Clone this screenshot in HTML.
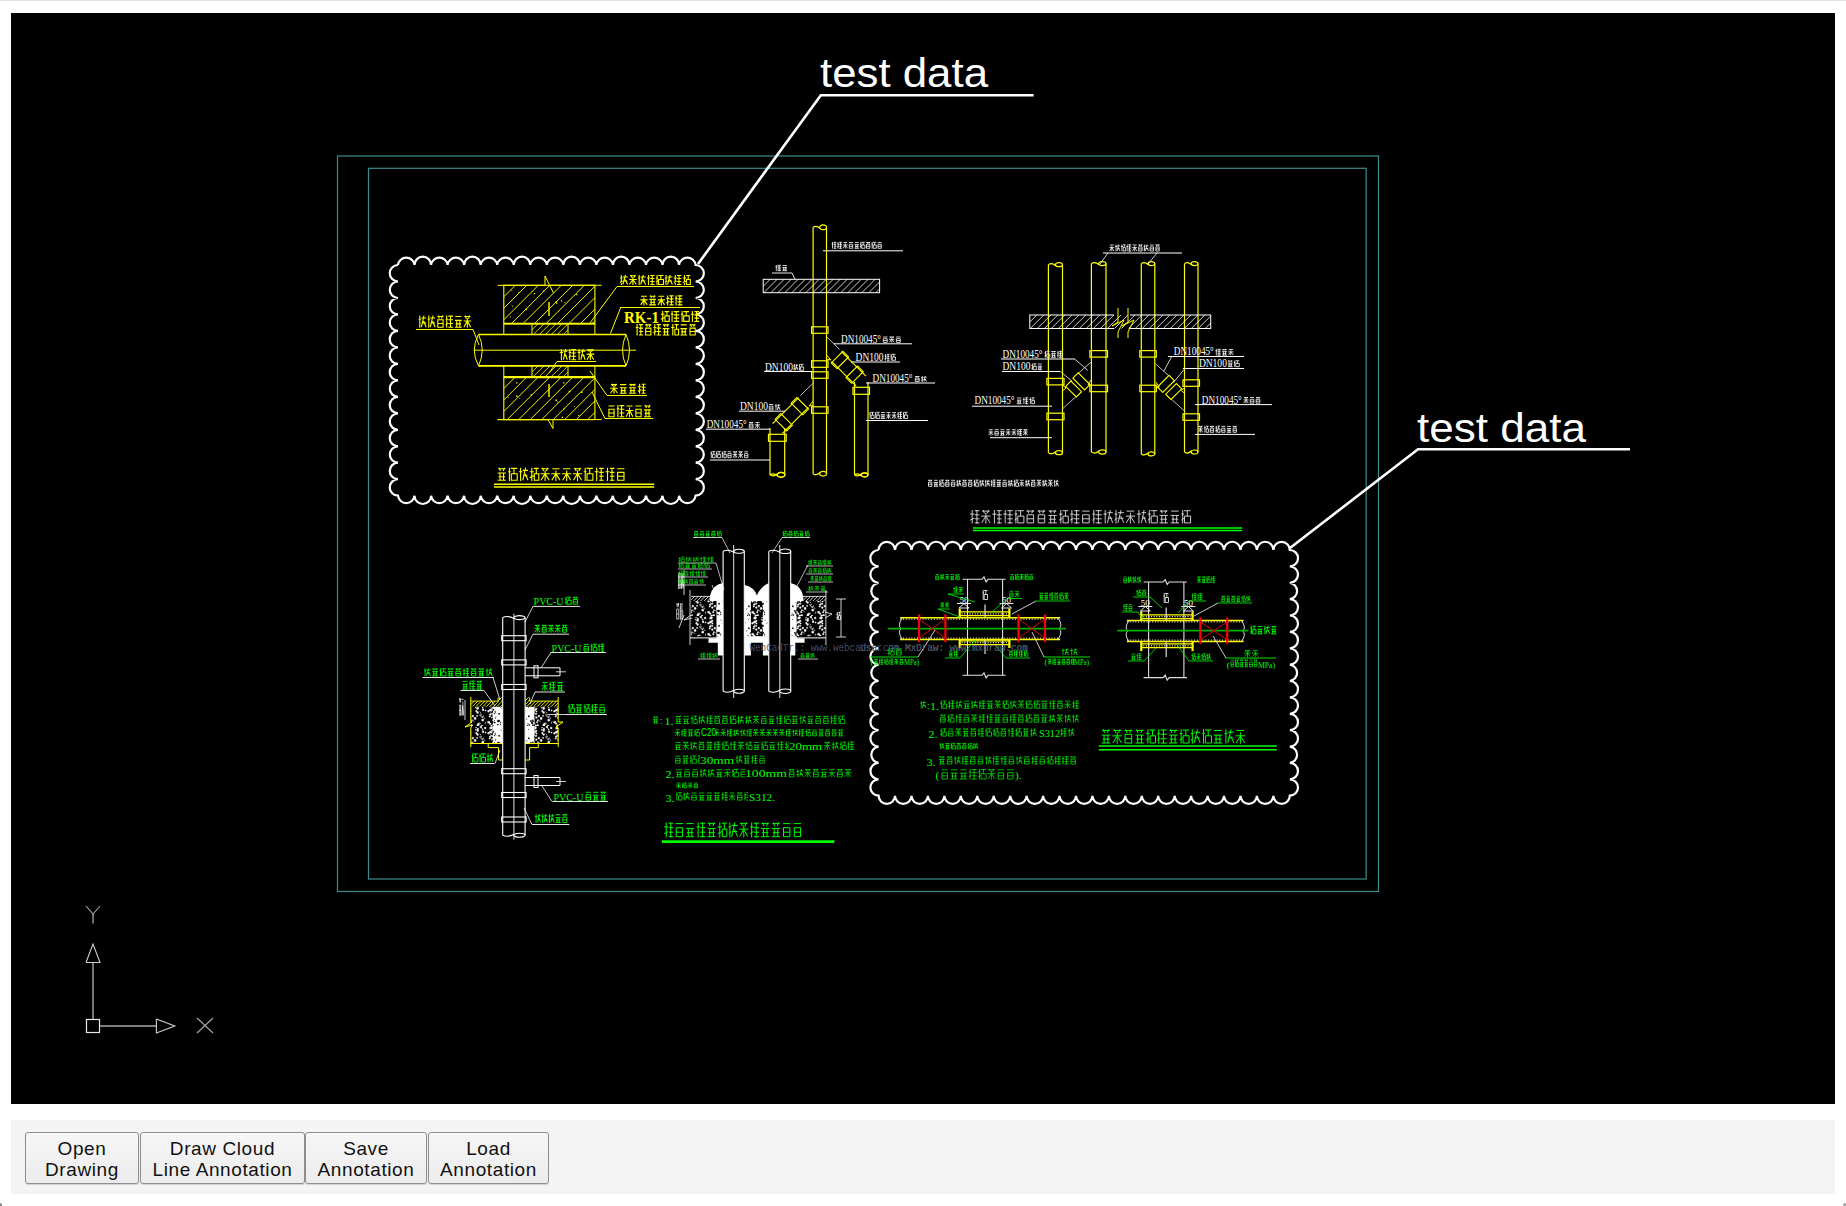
<!DOCTYPE html>
<html><head><meta charset="utf-8"><style>
html,body{margin:0;padding:0;background:#fff;width:1846px;height:1206px;overflow:hidden;position:relative}
#topline{position:absolute;left:0;top:0;width:1846px;height:1px;background:#e1e3e1}
#canvas{position:absolute;left:11px;top:13px;width:1824px;height:1091px;background:#000;overflow:hidden}
#cad{position:absolute;left:0;top:0}
#bar{position:absolute;left:11px;top:1120px;width:1824px;height:74px;background:#f4f4f4}
.btn{position:absolute;top:12px;height:52px;box-sizing:border-box;border:1px solid #8f8f8f;border-radius:3px;
background:linear-gradient(#f6f6f6,#ececec);font-family:"Liberation Sans",sans-serif;font-size:19px;line-height:21px;letter-spacing:0.6px;color:#111;
text-align:center;padding-top:5px;box-shadow:0 1px 1px rgba(0,0,0,0.15)}
</style></head><body>
<div id="topline"></div>
<div style="position:absolute;left:0;top:1203px;width:2px;height:3px;background:#888;border-radius:0 2px 0 0"></div>
<div style="position:absolute;left:1843px;top:1203px;width:3px;height:3px;background:#aaa;border-radius:2px 0 0 0"></div>
<div id="canvas"><svg id="cad" width="1824" height="1091" viewBox="11 13 1824 1091" font-family="Liberation Sans">
<defs><pattern id="pc" width="22" height="22" patternUnits="userSpaceOnUse"><rect width="22" height="22" fill="#000"/><path d="M5.2 12h1v1h-1zM13.8 1.4h0.6v0.6h-0.6zM5.7 5.2h1.8v1.8h-1.8zM18.4 10.5l0.5 2.3M11.5 16.3l1 1.9M6.6 0.7h1.6v1.6h-1.6zM15.8 19.3h1.5v1.5h-1.5zM8.7 17.6h1.1v1.1h-1.1zM19.3 2.1l1.9 1.7M13.8 6.6h1.2v1.2h-1.2zM7.7 12.9h1.3v1.3h-1.3zM15 20.4h1.6v1.6h-1.6zM14.8 3.6h1.6v1.6h-1.6zM19.9 12.5l1.3 1.9M6.3 1.4h1.6v1.6h-1.6zM1.9 17.6l-0.8 2.2M19.2 1l0.9 1.5M19.4 21.6h1.2v1.2h-1.2zM6.8 1.7l-1.2 1.6M13.4 3.4h0.7v0.7h-0.7zM6.9 21.1h1.7v1.7h-1.7zM10.1 11.4h1.4v1.4h-1.4zM12.3 13.6h1.7v1.7h-1.7zM9.5 15.8h0.9v0.9h-0.9zM21.5 11.5l-0.3 1.9M0.4 13.5l0.5 1.7M14.9 7.8h1.4v1.4h-1.4zM0.5 1.3h1.4v1.4h-1.4zM5.5 10h1.3v1.3h-1.3zM8 6.9h1v1h-1zM6.6 8.3l0.3 2.1M6.8 4.9l-1.3 1.7M15.4 2.2h1v1h-1zM18.3 9.6l-0.7 2M19.5 9.9l0.1 1.3M17.7 18.4l1.2 2M17.7 7.6l1.2 1.4M7.6 9.2h1.1v1.1h-1.1zM20.3 3.4h0.6v0.6h-0.6zM19.4 21.7h1.1v1.1h-1.1zM20.4 4.9h1.5v1.5h-1.5zM14.6 11.4h0.9v0.9h-0.9zM5 1.5l1.2 1.1M19.9 15.3h1.7v1.7h-1.7zM19.8 12.7h0.6v0.6h-0.6zM3.8 6.6h1.4v1.4h-1.4zM9.1 20.7h1.3v1.3h-1.3zM5.6 19h1.2v1.2h-1.2zM7.7 4.3h1.2v1.2h-1.2zM3.8 17.4h1.7v1.7h-1.7zM18.1 0.2h1.4v1.4h-1.4zM1.1 6h0.9v0.9h-0.9z" fill="#fff" stroke="#fff" stroke-width="0.6"/></pattern><pattern id="ps" width="22" height="22" patternUnits="userSpaceOnUse"><rect width="22" height="22" fill="#fff"/><path d="M13.7 16.3h1.1v1.1h-1.1zM16.3 20.3h0.5v0.5h-0.5zM20.8 14.3l-0.1 1.4M12 12.6l-0.9 2.4M16.8 3.5l0.5 1.2M0 19.2l1.9 2.3M6.4 21.2h0.9v0.9h-0.9zM4.5 20.7h1.1v1.1h-1.1zM19.7 6.6l-1.4 1.1M6.6 13.3h0.5v0.5h-0.5zM7.4 6.8h1.2v1.2h-1.2zM6.9 10.6l1.9 1M16.5 18.6h0.5v0.5h-0.5zM8.1 12.7l-1.3 2.4M4.3 16.6h1.2v1.2h-1.2zM7.6 7.8h0.9v0.9h-0.9zM2.4 16.5h1.1v1.1h-1.1zM0.8 20.8h0.6v0.6h-0.6zM13.4 20.2h0.8v0.8h-0.8zM12 6.9l-1.7 1.2M15.2 21.9l1.9 1.8M8.9 5.2h1v1h-1zM10 9.3h0.5v0.5h-0.5zM0.7 10.9l0.9 2.4M13.9 17.3h0.6v0.6h-0.6zM3.3 18.6h0.7v0.7h-0.7zM22 18.7h1.3v1.3h-1.3zM10.7 16l-0.4 1.2M8.3 21.7h1.3v1.3h-1.3zM11 7.4l1.1 2.3M7.9 17.3h1.1v1.1h-1.1zM14.6 16.7h0.8v0.8h-0.8zM6.2 10.7h1.1v1.1h-1.1zM6.5 20.8h1v1h-1zM0.3 12h0.7v0.7h-0.7zM10.2 18h1v1h-1zM7.7 14.2h1.1v1.1h-1.1zM7.7 18.5h1.2v1.2h-1.2zM21.5 21h0.9v0.9h-0.9zM3.7 18.4h1.2v1.2h-1.2zM15.2 15.8l1.1 1.9M14.6 9.3h1v1h-1zM14 15.8l-0.2 2M4.8 15.1l-0.1 1.3M1.2 2.9l-1.2 1.1" fill="#000" stroke="#000" stroke-width="0.6"/></pattern></defs>
<rect x="337.5" y="156" width="1041" height="735.5" stroke="#3f8c8c" stroke-width="1.2" fill="none"/>
<rect x="368.5" y="168.3" width="997.7" height="710.7" stroke="#3f8c8c" stroke-width="1.2" fill="none"/>
<path d="M398 265 A8.3 8.3 0 0 1 414.5 265 A8.3 8.3 0 0 1 431.1 265 A8.3 8.3 0 0 1 447.6 265 A8.3 8.3 0 0 1 464.1 265 A8.3 8.3 0 0 1 480.7 265 A8.3 8.3 0 0 1 497.2 265 A8.3 8.3 0 0 1 513.7 265 A8.3 8.3 0 0 1 530.3 265 A8.3 8.3 0 0 1 546.8 265 A8.3 8.3 0 0 1 563.3 265 A8.3 8.3 0 0 1 579.9 265 A8.3 8.3 0 0 1 596.4 265 A8.3 8.3 0 0 1 612.9 265 A8.3 8.3 0 0 1 629.5 265 A8.3 8.3 0 0 1 646 265 A8.3 8.3 0 0 1 662.5 265 A8.3 8.3 0 0 1 679.1 265 A8.3 8.3 0 0 1 695.6 265 A8.2 8.2 0 0 1 695.6 281.5 A8.2 8.2 0 0 1 695.6 298 A8.2 8.2 0 0 1 695.6 314.4 A8.2 8.2 0 0 1 695.6 330.9 A8.2 8.2 0 0 1 695.6 347.4 A8.2 8.2 0 0 1 695.6 363.9 A8.2 8.2 0 0 1 695.6 380.4 A8.2 8.2 0 0 1 695.6 396.8 A8.2 8.2 0 0 1 695.6 413.3 A8.2 8.2 0 0 1 695.6 429.8 A8.2 8.2 0 0 1 695.6 446.3 A8.2 8.2 0 0 1 695.6 462.7 A8.2 8.2 0 0 1 695.6 479.2 A8.2 8.2 0 0 1 695.6 495.7 A8.3 8.3 0 0 1 679.1 495.7 A8.3 8.3 0 0 1 662.5 495.7 A8.3 8.3 0 0 1 646 495.7 A8.3 8.3 0 0 1 629.5 495.7 A8.3 8.3 0 0 1 612.9 495.7 A8.3 8.3 0 0 1 596.4 495.7 A8.3 8.3 0 0 1 579.9 495.7 A8.3 8.3 0 0 1 563.3 495.7 A8.3 8.3 0 0 1 546.8 495.7 A8.3 8.3 0 0 1 530.3 495.7 A8.3 8.3 0 0 1 513.7 495.7 A8.3 8.3 0 0 1 497.2 495.7 A8.3 8.3 0 0 1 480.7 495.7 A8.3 8.3 0 0 1 464.1 495.7 A8.3 8.3 0 0 1 447.6 495.7 A8.3 8.3 0 0 1 431.1 495.7 A8.3 8.3 0 0 1 414.5 495.7 A8.3 8.3 0 0 1 398 495.7 A8.2 8.2 0 0 1 398 479.2 A8.2 8.2 0 0 1 398 462.7 A8.2 8.2 0 0 1 398 446.3 A8.2 8.2 0 0 1 398 429.8 A8.2 8.2 0 0 1 398 413.3 A8.2 8.2 0 0 1 398 396.8 A8.2 8.2 0 0 1 398 380.4 A8.2 8.2 0 0 1 398 363.9 A8.2 8.2 0 0 1 398 347.4 A8.2 8.2 0 0 1 398 330.9 A8.2 8.2 0 0 1 398 314.4 A8.2 8.2 0 0 1 398 298 A8.2 8.2 0 0 1 398 281.5 A8.2 8.2 0 0 1 398 265" stroke="#fff" stroke-width="2.2" fill="none"/>
<path d="M878.6 550 A8.2 8.2 0 0 1 895 550 A8.2 8.2 0 0 1 911.5 550 A8.2 8.2 0 0 1 927.9 550 A8.2 8.2 0 0 1 944.4 550 A8.2 8.2 0 0 1 960.8 550 A8.2 8.2 0 0 1 977.3 550 A8.2 8.2 0 0 1 993.7 550 A8.2 8.2 0 0 1 1010.2 550 A8.2 8.2 0 0 1 1026.6 550 A8.2 8.2 0 0 1 1043.1 550 A8.2 8.2 0 0 1 1059.5 550 A8.2 8.2 0 0 1 1076 550 A8.2 8.2 0 0 1 1092.4 550 A8.2 8.2 0 0 1 1108.9 550 A8.2 8.2 0 0 1 1125.3 550 A8.2 8.2 0 0 1 1141.8 550 A8.2 8.2 0 0 1 1158.2 550 A8.2 8.2 0 0 1 1174.7 550 A8.2 8.2 0 0 1 1191.1 550 A8.2 8.2 0 0 1 1207.6 550 A8.2 8.2 0 0 1 1224 550 A8.2 8.2 0 0 1 1240.5 550 A8.2 8.2 0 0 1 1256.9 550 A8.2 8.2 0 0 1 1273.4 550 A8.2 8.2 0 0 1 1289.8 550 A8.2 8.2 0 0 1 1289.8 566.4 A8.2 8.2 0 0 1 1289.8 582.8 A8.2 8.2 0 0 1 1289.8 599.1 A8.2 8.2 0 0 1 1289.8 615.5 A8.2 8.2 0 0 1 1289.8 631.9 A8.2 8.2 0 0 1 1289.8 648.3 A8.2 8.2 0 0 1 1289.8 664.7 A8.2 8.2 0 0 1 1289.8 681 A8.2 8.2 0 0 1 1289.8 697.4 A8.2 8.2 0 0 1 1289.8 713.8 A8.2 8.2 0 0 1 1289.8 730.2 A8.2 8.2 0 0 1 1289.8 746.6 A8.2 8.2 0 0 1 1289.8 762.9 A8.2 8.2 0 0 1 1289.8 779.3 A8.2 8.2 0 0 1 1289.8 795.7 A8.2 8.2 0 0 1 1273.4 795.7 A8.2 8.2 0 0 1 1256.9 795.7 A8.2 8.2 0 0 1 1240.5 795.7 A8.2 8.2 0 0 1 1224 795.7 A8.2 8.2 0 0 1 1207.6 795.7 A8.2 8.2 0 0 1 1191.1 795.7 A8.2 8.2 0 0 1 1174.7 795.7 A8.2 8.2 0 0 1 1158.2 795.7 A8.2 8.2 0 0 1 1141.8 795.7 A8.2 8.2 0 0 1 1125.3 795.7 A8.2 8.2 0 0 1 1108.9 795.7 A8.2 8.2 0 0 1 1092.4 795.7 A8.2 8.2 0 0 1 1076 795.7 A8.2 8.2 0 0 1 1059.5 795.7 A8.2 8.2 0 0 1 1043.1 795.7 A8.2 8.2 0 0 1 1026.6 795.7 A8.2 8.2 0 0 1 1010.2 795.7 A8.2 8.2 0 0 1 993.7 795.7 A8.2 8.2 0 0 1 977.3 795.7 A8.2 8.2 0 0 1 960.8 795.7 A8.2 8.2 0 0 1 944.4 795.7 A8.2 8.2 0 0 1 927.9 795.7 A8.2 8.2 0 0 1 911.5 795.7 A8.2 8.2 0 0 1 895 795.7 A8.2 8.2 0 0 1 878.6 795.7 A8.2 8.2 0 0 1 878.6 779.3 A8.2 8.2 0 0 1 878.6 762.9 A8.2 8.2 0 0 1 878.6 746.6 A8.2 8.2 0 0 1 878.6 730.2 A8.2 8.2 0 0 1 878.6 713.8 A8.2 8.2 0 0 1 878.6 697.4 A8.2 8.2 0 0 1 878.6 681 A8.2 8.2 0 0 1 878.6 664.7 A8.2 8.2 0 0 1 878.6 648.3 A8.2 8.2 0 0 1 878.6 631.9 A8.2 8.2 0 0 1 878.6 615.5 A8.2 8.2 0 0 1 878.6 599.1 A8.2 8.2 0 0 1 878.6 582.8 A8.2 8.2 0 0 1 878.6 566.4 A8.2 8.2 0 0 1 878.6 550" stroke="#fff" stroke-width="2.2" fill="none"/>
<path d="M698 264 L820.8 95.3 L1033.6 95.3" stroke="#fff" stroke-width="2.6" fill="none"/>
<path d="M1290 548 L1418 449.3 L1630 449.3" stroke="#fff" stroke-width="2.6" fill="none"/>
<text x="820" y="87.2" font-family="Liberation Sans" font-size="41" fill="#fff" font-weight="normal" text-anchor="start" textLength="168" lengthAdjust="spacingAndGlyphs">test data</text>
<text x="1417" y="441.8" font-family="Liberation Sans" font-size="41" fill="#fff" font-weight="normal" text-anchor="start" textLength="169" lengthAdjust="spacingAndGlyphs">test data</text>
<rect x="86.5" y="1019.5" width="13" height="13" stroke="#e8e8e8" stroke-width="1.2" fill="none"/>
<line x1="93" y1="1019" x2="93" y2="962.5" stroke="#a8a8a8" stroke-width="1.4"/>
<path d="M86 962.5 L100 962.5 L93 944 L86 962.5" stroke="#d0d0d0" stroke-width="1.1" fill="none"/>
<line x1="100" y1="1026" x2="156.4" y2="1026" stroke="#a8a8a8" stroke-width="1.4"/>
<path d="M156.4 1019 L156.4 1033 L174.8 1026 L156.4 1019" stroke="#d0d0d0" stroke-width="1.1" fill="none"/>
<path d="M86 906 L93 914 L100 906" stroke="#a8a8a8" stroke-width="1.1" fill="none"/>
<line x1="93" y1="914" x2="93" y2="923.5" stroke="#a8a8a8" stroke-width="1.3"/>
<line x1="197" y1="1018" x2="213" y2="1033" stroke="#a8a8a8" stroke-width="1.1"/>
<line x1="213" y1="1018" x2="197" y2="1033" stroke="#a8a8a8" stroke-width="1.1"/>
<path d="M503.8 296.8L515.3 285.3M503.8 308.3L526.8 285.3M503.8 319.8L538.3 285.3M511.3 323.8L549.8 285.3M522.8 323.8L561.3 285.3M534.3 323.8L572.8 285.3M545.8 323.8L584.3 285.3M557.3 323.8L594.9 286.2M568.8 323.8L594.9 297.7M580.3 323.8L594.9 309.2M591.8 323.8L594.9 320.7" stroke="#ffff00" stroke-width="0.95" fill="none"/>
<rect x="503.8" y="285.3" width="91.1" height="38.5" stroke="#ffff00" stroke-width="1.1" fill="none"/>
<path d="M497.5 285.3 L545 285.3 L545 276 L553.5 293" stroke="#ffff00" stroke-width="1" fill="none"/>
<line x1="550" y1="285.3" x2="601.6" y2="285.3" stroke="#ffff00" stroke-width="1.1"/>
<path d="M532 329.8L538 323.8M533.3 334.5L544 323.8M539.3 334.5L550 323.8M545.3 334.5L556 323.8M551.3 334.5L562 323.8M557.3 334.5L568 323.8M563.3 334.5L568 329.8" stroke="#ffff00" stroke-width="0.8" fill="none"/>
<line x1="532" y1="323.8" x2="532" y2="334.5" stroke="#ffff00" stroke-width="1"/>
<line x1="568" y1="323.8" x2="568" y2="334.5" stroke="#ffff00" stroke-width="1"/>
<path d="M532 371.9L538 365.9M532.9 377L544 365.9M538.9 377L550 365.9M544.9 377L556 365.9M550.9 377L562 365.9M556.9 377L568 365.9M562.9 377L568 371.9" stroke="#ffff00" stroke-width="0.8" fill="none"/>
<line x1="532" y1="365.9" x2="532" y2="377" stroke="#ffff00" stroke-width="1"/>
<line x1="568" y1="365.9" x2="568" y2="377" stroke="#ffff00" stroke-width="1"/>
<line x1="503.8" y1="323.8" x2="503.8" y2="334.5" stroke="#ffff00" stroke-width="1"/>
<line x1="594.9" y1="323.8" x2="594.9" y2="334.5" stroke="#ffff00" stroke-width="1"/>
<line x1="503.8" y1="323.6" x2="594.9" y2="323.6" stroke="#ffff00" stroke-width="1.8"/>
<line x1="503.8" y1="377.2" x2="594.9" y2="377.2" stroke="#ffff00" stroke-width="2.2"/>
<line x1="503.8" y1="365.9" x2="503.8" y2="377" stroke="#ffff00" stroke-width="1"/>
<line x1="594.9" y1="365.9" x2="594.9" y2="377" stroke="#ffff00" stroke-width="1"/>
<line x1="478.5" y1="334.5" x2="626" y2="334.5" stroke="#ffff00" stroke-width="1.6"/>
<line x1="478.5" y1="365.9" x2="626" y2="365.9" stroke="#ffff00" stroke-width="1.6"/>
<path d="M478.5 334.5 Q470 350 478.5 365.9 Q486 350 478.5 334.5" stroke="#ffff00" stroke-width="1" fill="none"/>
<path d="M626 334.5 Q619 350 626 365.9 Q633 350 626 334.5" stroke="#ffff00" stroke-width="1" fill="none"/>
<line x1="474" y1="350.2" x2="636" y2="350.2" stroke="#ffff00" stroke-width="1"/>
<path d="M503.8 388.5L515.3 377M503.8 400L526.8 377M503.8 411.5L538.3 377M507.2 419.6L549.8 377M518.7 419.6L561.3 377M530.2 419.6L572.8 377M541.7 419.6L584.3 377M553.2 419.6L594.9 377.9M564.7 419.6L594.9 389.4M576.2 419.6L594.9 400.9M587.7 419.6L594.9 412.4" stroke="#ffff00" stroke-width="0.95" fill="none"/>
<rect x="503.8" y="377" width="91.1" height="42.6" stroke="#ffff00" stroke-width="1.1" fill="none"/>
<line x1="497.5" y1="419.6" x2="548" y2="419.6" stroke="#ffff00" stroke-width="1.1"/>
<path d="M548 419.6 L553 428.5 L553 419.6 L601.6 419.6" stroke="#ffff00" stroke-width="1" fill="none"/>
<path d="M533.8 293h1.3v1.3h-1.3zM512.2 305.7h1v1h-1zM511 304.7h0.6v0.6h-0.6zM543.3 290.3h0.7v0.7h-0.7zM542.5 315.3h0.7v0.7h-0.7zM525.2 308.7h1.5v1.5h-1.5zM555.6 301.1h1.6v1.6h-1.6zM510 316.3h0.9v0.9h-0.9zM518.4 291.9h0.9v0.9h-0.9zM576.2 294h1.2v1.2h-1.2zM560.9 300.3h1.1v1.1h-1.1zM511.4 290h0.8v0.8h-0.8zM564.5 302.1h0.9v0.9h-0.9zM556.4 303h0.9v0.9h-0.9z" fill="#ffff00"/>
<path d="M574.3 405.9h0.8v0.8h-0.8zM555.4 399.4h1.5v1.5h-1.5zM568.7 390.7h1.6v1.6h-1.6zM516.2 395.5h1.4v1.4h-1.4zM519.1 398.1h0.6v0.6h-0.6zM563.5 408.3h1.2v1.2h-1.2zM581.3 391.6h1.3v1.3h-1.3zM557.1 401.5h1.1v1.1h-1.1zM578.2 415h1.1v1.1h-1.1zM563.1 382.2h1.3v1.3h-1.3zM561.7 416.7h1.4v1.4h-1.4zM530.5 394.3h1.3v1.3h-1.3zM507.9 397.1h0.8v0.8h-0.8zM516.1 382.2h1.4v1.4h-1.4z" fill="#ffff00"/>
<line x1="549" y1="302" x2="549" y2="316" stroke="#ffff00" stroke-width="1.4"/>
<line x1="549" y1="384" x2="549" y2="397" stroke="#ffff00" stroke-width="1.4"/>
<path d="M621.3 275V285M620.2 278H622.5M620.2 282.5L622.5 281M622.8 277H627.7M625.5 275L622.8 284.5M625.1 279.5L627.7 284.5M623.2 281H627.3M629.9 275.8H635.9M630.7 275L631.8 277.5M635.2 275L634 277.5M629.2 279.5H636.7M632.9 277V285M632.5 280L629.5 284.5M633.3 280L636.3 284.5M639.2 275V285M638.1 278H640.3M640.7 277H645.6M643.3 275L640.7 284.5M643 279.5L645.6 284.5M641.1 281H645.2M648.5 275V285M647 278H649.9M650.3 275.5H654.5M650.3 278.5H654.5M650.3 281.5H654.5M650.3 284.5H654.5M652.2 275V285M657.1 275V285M656 278H658.2M656 282.5L658.2 281M658.6 279.5H663.5V284.5H658.6ZM658.2 275.5H663.5M660.8 275.5V279.5M666 275V285M664.9 278H667.2M664.9 282.5L667.2 281M667.5 277H672.4M670.2 275L667.5 284.5M669.8 279.5L672.4 284.5M667.9 281H672M675.3 275V285M673.8 278H676.7M673.8 282.5L676.7 281M677.1 275.5H681.3M677.1 278.5H681.3M677.1 281.5H681.3M677.1 284.5H681.3M679 275V285M684.5 275V285M682.8 278H686.2M682.8 282.5L686.2 281M686.5 279.5H690.3V284.5H686.5ZM686.2 275.5H690.3M688.2 275.5V279.5" stroke="#ffff00" stroke-width="1.1" fill="none"/>
<line x1="617" y1="286.5" x2="694" y2="286.5" stroke="#ffff00" stroke-width="1"/>
<line x1="617" y1="286.5" x2="590" y2="323" stroke="#ffff00" stroke-width="1"/>
<path d="M641 296.2H646.9M640.3 299.9H647.6M643.9 297.4V305.4M643.6 300.4L640.7 304.9M644.3 300.4L647.2 304.9M649.7 296.2H655.5M650.4 295.4L651.5 297.9M654.8 295.4L653.7 297.9M649.3 299.4H655.9M649.3 304.9H655.9M651.2 299.4V304.9M654.1 299.4V304.9M650.1 302.2H655.2M658.4 296.2H664.2M657.7 299.9H664.9M661.3 297.4V305.4M660.9 300.4L658 304.9M661.7 300.4L664.6 304.9M667.7 295.4V305.4M666.3 298.4H669.1M666.3 302.9L669.1 301.4M669.5 295.9H673.6M669.5 298.9H673.6M669.5 301.9H673.6M669.5 304.9H673.6M671.4 295.4V305.4M676.1 295.4V305.4M675 298.4H677.2M677.6 295.9H682.3M677.6 298.9H682.3M677.6 301.9H682.3M677.6 304.9H682.3M679.8 295.4V305.4" stroke="#ffff00" stroke-width="1.1" fill="none"/>
<line x1="620" y1="307.5" x2="700" y2="307.5" stroke="#ffff00" stroke-width="1.1"/>
<text x="624" y="322.5" font-family="Liberation Serif" font-size="17.5" fill="#ffff00" font-weight="bold" text-anchor="start" textLength="35" lengthAdjust="spacingAndGlyphs">RK-1</text>
<path d="M662.7 311V322M660.8 314.3H664.6M660.8 319.2L664.6 317.6M665 315.9H669.2V321.4H665ZM664.6 311.6H669.2M666.9 311.6V315.9M672.1 311V322M670.8 314.3H673.3M673.7 311.6H679.2M673.7 314.9H679.2M673.7 318.1H679.2M673.7 321.4H679.2M676.3 311V322M682.1 311V322M680.8 314.3H683.3M683.7 315.9H689.2V321.4H683.7ZM683.3 311.6H689.2M686.3 311.6V315.9M692.4 311V322M690.8 314.3H694M694.4 311.6H699.2M694.4 314.9H699.2M694.4 318.1H699.2M694.4 321.4H699.2M696.6 311V322" stroke="#ffff00" stroke-width="1.1" fill="none"/>
<path d="M637.1 324V335.6M635.7 327.5H638.5M638.9 324.6H643.1M638.9 328.1H643.1M638.9 331.5H643.1M638.9 335H643.1M640.8 324V335.6M645.3 324.9H651.3M646.1 324L647.2 326.9M650.5 324L649.4 326.9M645.7 328.1H650.9V335H645.7ZM645.7 331.5H650.9M654.8 324V335.6M653.4 327.5H656.3M653.4 332.7L656.3 331M656.6 324.6H660.9M656.6 328.1H660.9M656.6 331.5H660.9M656.6 335H660.9M658.6 324V335.6M663 324.9H669M663.8 324L664.9 326.9M668.2 324L667.1 326.9M662.7 328.6H669.3M662.7 335H669.3M664.5 328.6V335M667.5 328.6V335M663.4 331.9H668.6M672.8 324V335.6M671.1 327.5H674.5M674.9 329.2H678.6V335H674.9ZM674.5 324.6H678.6M676.5 324.6V329.2M680.7 324.9H686.7M680.4 328.6H687.1M680.4 335H687.1M682.2 328.6V335M685.2 328.6V335M681.1 331.9H686.3M689.6 324.9H695.5M690.3 324L691.5 326.9M694.8 324L693.7 326.9M690 328.1H695.2V335H690ZM690 331.5H695.2" stroke="#ffff00" stroke-width="1.1" fill="none"/>
<line x1="620.6" y1="307.7" x2="610.5" y2="333.4" stroke="#ffff00" stroke-width="1"/>
<path d="M419.8 315.5V327.8M418.7 319.2H421M421.4 318H426.2M424 315.5L421.4 327.2M423.6 321L426.2 327.2M421.7 322.9H425.9M428.8 315.5V327.8M427.7 319.2H429.9M430.3 318H435.2M433 315.5L430.3 327.2M432.6 321L435.2 327.2M430.7 322.9H434.8M437.4 316.5H443.4M438.2 315.5L439.3 318.6M442.7 315.5L441.5 318.6M437.8 319.8H443.1V327.2H437.8ZM437.8 323.5H443.1M446.7 315.5V327.8M445.6 319.2H447.9M445.6 324.7L447.9 322.9M448.3 316.1H453.1M448.3 319.8H453.1M448.3 323.5H453.1M448.3 327.2H453.1M450.5 315.5V327.8M455.3 316.5H461.4M455 320.4H461.7M455 327.2H461.7M456.8 320.4V327.2M459.9 320.4V327.2M455.7 323.9H461M464.3 316.5H470.3M465.1 315.5L466.2 318.6M469.6 315.5L468.4 318.6M463.6 321H471.1M467.3 318V327.8M466.9 321.6L463.9 327.2M467.7 321.6L470.7 327.2" stroke="#ffff00" stroke-width="1.1" fill="none"/>
<line x1="416" y1="329.5" x2="473" y2="329.5" stroke="#ffff00" stroke-width="1"/>
<path d="M473 329.5 L479 345" stroke="#ffff00" stroke-width="1" fill="none"/>
<path d="M561.4 349V360.3M559.7 352.4H563.1M563.5 351.3H567.3M565.6 349L563.5 359.7M565.2 354.1L567.3 359.7M563.9 355.8H566.9M569.8 349V360.3M568.7 352.4H571M568.7 357.5L571 355.8M571.3 349.6H576.2M571.3 353H576.2M571.3 356.3H576.2M571.3 359.7H576.2M573.6 349V360.3M579.1 349V360.3M577.7 352.4H580.5M580.9 351.3H585.2M583.2 349L580.9 359.7M582.9 354.1L585.2 359.7M581.3 355.8H584.8M587.4 349.9H593.4M588.2 349L589.3 351.8M592.7 349L591.5 351.8M586.6 354.1H594.2M590.4 351.3V360.3M590 354.6L587 359.7M590.8 354.6L593.8 359.7" stroke="#ffff00" stroke-width="1.1" fill="none"/>
<line x1="557" y1="361.5" x2="596" y2="361.5" stroke="#ffff00" stroke-width="1"/>
<line x1="557" y1="361.5" x2="549" y2="373" stroke="#ffff00" stroke-width="1"/>
<path d="M610.9 384.6H617.1M611.7 383.8L612.9 386.3M616.3 383.8L615.2 386.3M610.1 388.3H617.9M614 385.8V393.8M613.6 388.8L610.5 393.3M614.4 388.8L617.5 393.3M620.1 384.6H626.3M619.8 387.8H626.7M619.8 393.3H626.7M621.7 387.8V393.3M624.8 387.8V393.3M620.5 390.6H625.9M629.4 384.6H635.6M630.1 383.8L631.3 386.3M634.8 383.8L633.6 386.3M629 387.8H635.9M629 393.3H635.9M630.9 387.8V393.3M634 387.8V393.3M629.8 390.6H635.2M639.6 383.8V393.8M637.8 386.8H641.3M637.8 391.3L641.3 389.8M641.7 384.3H645.6M641.7 387.3H645.6M641.7 390.3H645.6M641.7 393.3H645.6M643.4 383.8V393.8" stroke="#ffff00" stroke-width="1.1" fill="none"/>
<line x1="607" y1="395.5" x2="647" y2="395.5" stroke="#ffff00" stroke-width="1"/>
<line x1="607" y1="395.5" x2="590" y2="371" stroke="#ffff00" stroke-width="1"/>
<path d="M608.5 406H614.5M608.9 409.3H614.1V416.7H608.9ZM608.9 413H614.1M617.9 405V417.3M616.7 408.7H619M619.4 405.6H624.3M619.4 409.3H624.3M619.4 413H624.3M619.4 416.7H624.3M621.6 405V417.3M626.5 406H632.5M625.7 410.5H633.3M629.5 407.5V417.3M629.1 411.1L626.1 416.7M629.9 411.1L632.9 416.7M635.5 406H641.5M635.9 409.3H641.1V416.7H635.9ZM635.9 413H641.1M644.5 406H650.5M645.2 405L646.4 408.1M649.8 405L648.6 408.1M644.1 409.9H650.9M644.1 416.7H650.9M646 409.9V416.7M649 409.9V416.7M644.9 413.4H650.1" stroke="#ffff00" stroke-width="1.1" fill="none"/>
<line x1="605" y1="418.5" x2="653" y2="418.5" stroke="#ffff00" stroke-width="1"/>
<line x1="605" y1="418.5" x2="592" y2="392" stroke="#ffff00" stroke-width="1"/>
<path d="M498.2 468.8H505.4M499.1 467.7L500.4 471M504.5 467.7L503.2 471M497.7 473H505.9M497.7 480.3H505.9M500 473V480.3M503.6 473V480.3M498.6 476.7H505M509.4 467.7V481M508.1 471.7H510.8M511.3 473.7H517.2V480.3H511.3ZM510.8 468.4H517.2M514 468.4V473.7M520.6 467.7V481M518.9 471.7H522.4M522.8 470.4H528M525.6 467.7L522.8 480.3M525.2 473.7L528 480.3M523.3 475.7H527.5M531.8 467.7V481M529.7 471.7H533.8M529.7 477.7L533.8 475.7M534.3 473.7H538.8V480.3H534.3ZM533.8 468.4H538.8M536.3 468.4V473.7M541.4 468.8H548.7M542.3 467.7L543.7 471M547.8 467.7L546.4 471M540.5 473.7H549.6M545.1 470.4V481M544.6 474.4L541 480.3M545.5 474.4L549.2 480.3M552.3 468.8H559.5M551.3 473.7H560.4M555.9 470.4V481M555.4 474.4L551.8 480.3M556.3 474.4L560 480.3M563.1 468.8H570.3M562.2 473.7H571.3M566.7 470.4V481M566.3 474.4L562.6 480.3M567.2 474.4L570.8 480.3M573.9 468.8H581.2M574.8 467.7L576.2 471M580.3 467.7L578.9 471M573 473.7H582.1M577.5 470.4V481M577.1 474.4L573.4 480.3M578 474.4L581.6 480.3M585.2 467.7V481M583.8 471.7H586.5M587 473.7H592.9V480.3H587ZM586.5 468.4H592.9M589.7 468.4V473.7M596.7 467.7V481M594.6 471.7H598.7M599.2 468.4H603.7M599.2 472.4H603.7M599.2 476.3H603.7M599.2 480.3H603.7M601.2 467.7V481M607.5 467.7V481M605.4 471.7H609.5M610 468.4H614.5M610 472.4H614.5M610 476.3H614.5M610 480.3H614.5M612 467.7V481M617.2 468.8H624.4M617.6 472.4H624V480.3H617.6ZM617.6 476.3H624" stroke="#ffff00" stroke-width="1.1" fill="none"/>
<line x1="494" y1="484.2" x2="654.2" y2="484.2" stroke="#ffff00" stroke-width="1.5"/>
<line x1="494" y1="487" x2="654.2" y2="487" stroke="#ffff00" stroke-width="1.5"/>
<line x1="813.1" y1="227.3" x2="813.1" y2="473.7" stroke="#ffff00" stroke-width="1.2"/>
<line x1="826.5" y1="227.3" x2="826.5" y2="473.7" stroke="#ffff00" stroke-width="1.2"/>
<path d="M813.1 227.3 Q816.5 224.8 819.8 228.3 M819.8 227.3 A3.4 2 0 1 0 826.5 227.3 A3.4 2 0 1 0 819.8 227.3" stroke="#ffff00" stroke-width="1.2" fill="none"/>
<path d="M813.1 473.7 Q816.5 476.2 819.8 472.7 M819.8 473.7 A3.4 2 0 1 0 826.5 473.7 A3.4 2 0 1 0 819.8 473.7" stroke="#ffff00" stroke-width="1.2" fill="none"/>
<rect x="811.6" y="326.8" width="16.4" height="6.5" stroke="#ffff00" stroke-width="1.2" fill="none"/>
<rect x="811.6" y="360.8" width="16.4" height="6.5" stroke="#ffff00" stroke-width="1.2" fill="none"/>
<rect x="811.6" y="371.8" width="16.4" height="6.5" stroke="#ffff00" stroke-width="1.2" fill="none"/>
<rect x="811.6" y="406.8" width="16.4" height="6.5" stroke="#ffff00" stroke-width="1.2" fill="none"/>
<path d="M763.2 286.3L770.2 279.3M763.8 292.7L777.2 279.3M770.8 292.7L784.2 279.3M777.8 292.7L791.2 279.3M784.8 292.7L798.2 279.3M791.8 292.7L805.2 279.3M798.8 292.7L812.2 279.3M805.8 292.7L819.2 279.3M812.8 292.7L826.2 279.3M819.8 292.7L833.2 279.3M826.8 292.7L840.2 279.3M833.8 292.7L847.2 279.3M840.8 292.7L854.2 279.3M847.8 292.7L861.2 279.3M854.8 292.7L868.2 279.3M861.8 292.7L875.2 279.3M868.8 292.7L879.6 281.9M875.8 292.7L879.6 288.9" stroke="#ffffff" stroke-width="0.8" fill="none"/>
<rect x="763.2" y="279.3" width="116.4" height="13.4" stroke="#ffffff" stroke-width="1" fill="none"/>
<path d="M776.3 265V271M775.5 266.8H777.2M777.4 265.3H781M777.4 267.1H781M777.4 268.9H781M777.4 270.7H781M779.1 265V271M782.6 265.5H786.9M782.3 267.4H787.2M782.3 270.7H787.2M783.7 267.4V270.7M785.8 267.4V270.7M782.8 269.1H786.7" stroke="#ffffff" stroke-width="0.8" fill="none"/>
<path d="M772 273 L792 273 L795 279.3" stroke="#ffffff" stroke-width="0.9" fill="none"/>
<path d="M832.5 242V248.6M831.5 244H833.6M833.9 242.3H836.3M833.9 244.3H836.3M833.9 246.3H836.3M833.9 248.3H836.3M834.9 242V248.6M838.1 242V248.6M837.2 244H839M837.2 246.9L839 246M839.2 242.3H842M839.2 244.3H842M839.2 246.3H842M839.2 248.3H842M840.5 242V248.6M843.4 242.5H847.2M842.9 245H847.7M845.3 243.3V248.6M845.1 245.3L843.1 248.3M845.5 245.3L847.5 248.3M849.1 242.5H853M849.3 244.3H852.7V248.3H849.3ZM849.3 246.3H852.7M854.8 242.5H858.7M854.6 244.6H858.9M854.6 248.3H858.9M855.8 244.6V248.3M857.7 244.6V248.3M855.1 246.5H858.4M860.8 242V248.6M860.1 244H861.5M860.1 246.9L861.5 246M861.8 245H864.9V248.3H861.8ZM861.5 242.3H864.9M863.2 242.3V245M866.3 242.5H870.1M866.8 242L867.5 243.7M869.6 242L868.9 243.7M866.5 244.3H869.9V248.3H866.5ZM866.5 246.3H869.9M872.2 242V248.6M871.5 244H873M873.2 245H876.3V248.3H873.2ZM873 242.3H876.3M874.6 242.3V245M877.7 242.5H881.6M878 244.3H881.3V248.3H878ZM878 246.3H881.3" stroke="#ffffff" stroke-width="0.8" fill="none"/>
<line x1="823" y1="250.8" x2="903" y2="250.8" stroke="#ffffff" stroke-width="1"/>
<line x1="826.2" y1="336.4" x2="839.6" y2="349.4" stroke="#cfcfcf" stroke-width="0.9"/>
<line x1="831.6" y1="361.4" x2="856.1" y2="385.9" stroke="#ffff00" stroke-width="1.1"/>
<line x1="841.4" y1="351.6" x2="865.9" y2="376.1" stroke="#ffff00" stroke-width="1.1"/>
<path d="M837 368.6 L831.3 362.9 L842.9 351.3 L848.6 357 Z" stroke="#ffff00" stroke-width="1.1" fill="none"/>
<path d="M851.7 383.3 L846 377.6 L857.6 366 L863.3 371.7 Z" stroke="#ffff00" stroke-width="1.1" fill="none"/>
<path d="M826.5 355 L831 360 L826.5 359" stroke="#ffff00" stroke-width="1" fill="none"/>
<line x1="854.5" y1="382" x2="854.5" y2="474.8" stroke="#ffff00" stroke-width="1.2"/>
<line x1="868" y1="382" x2="868" y2="474.8" stroke="#ffff00" stroke-width="1.2"/>
<rect x="853" y="387.3" width="16.5" height="7" stroke="#ffff00" stroke-width="1.2" fill="none"/>
<line x1="854.5" y1="474.8" x2="854.5" y2="474.8" stroke="#ffff00" stroke-width="1.2"/>
<line x1="868" y1="474.8" x2="868" y2="474.8" stroke="#ffff00" stroke-width="1.2"/>
<path d="M854.5 474.8 Q857.9 472.3 861.2 475.8 M861.2 474.8 A3.4 2 0 1 0 868 474.8 A3.4 2 0 1 0 861.2 474.8" stroke="#ffff00" stroke-width="1.2" fill="none"/>
<path d="M854.5 474.8 Q857.9 477.3 861.2 473.8 M861.2 474.8 A3.4 2 0 1 0 868 474.8 A3.4 2 0 1 0 861.2 474.8" stroke="#ffff00" stroke-width="1.2" fill="none"/>
<line x1="814.2" y1="382.2" x2="800.3" y2="395.6" stroke="#cfcfcf" stroke-width="0.9"/>
<line x1="798.6" y1="397.6" x2="772.6" y2="423.6" stroke="#ffff00" stroke-width="1.1"/>
<line x1="808.4" y1="407.4" x2="782.4" y2="433.4" stroke="#ffff00" stroke-width="1.1"/>
<path d="M791.2 403.2 L796.9 397.5 L808.5 409.1 L802.8 414.8 Z" stroke="#ffff00" stroke-width="1.1" fill="none"/>
<path d="M775.1 419.3 L780.8 413.6 L792.4 425.2 L786.7 430.9 Z" stroke="#ffff00" stroke-width="1.1" fill="none"/>
<path d="M813.1 401 L809 406 L813.1 405" stroke="#ffff00" stroke-width="1" fill="none"/>
<line x1="770" y1="428" x2="770" y2="474.8" stroke="#ffff00" stroke-width="1.2"/>
<line x1="784.7" y1="428" x2="784.7" y2="474.8" stroke="#ffff00" stroke-width="1.2"/>
<rect x="768.5" y="434.3" width="17.7" height="7" stroke="#ffff00" stroke-width="1.2" fill="none"/>
<line x1="770" y1="474.8" x2="770" y2="474.8" stroke="#ffff00" stroke-width="1.2"/>
<line x1="784.7" y1="474.8" x2="784.7" y2="474.8" stroke="#ffff00" stroke-width="1.2"/>
<path d="M770 474.8 Q773.7 472.3 777.4 475.8 M777.4 474.8 A3.7 2 0 1 0 784.7 474.8 A3.7 2 0 1 0 777.4 474.8" stroke="#ffff00" stroke-width="1.2" fill="none"/>
<path d="M770 474.8 Q773.7 477.3 777.4 473.8 M777.4 474.8 A3.7 2 0 1 0 784.7 474.8 A3.7 2 0 1 0 777.4 474.8" stroke="#ffff00" stroke-width="1.2" fill="none"/>
<text x="841" y="342.7" font-family="Liberation Serif" font-size="11.5" fill="#ffffff" font-weight="normal" text-anchor="start" textLength="40" lengthAdjust="spacingAndGlyphs">DN10045°</text>
<path d="M883.1 337H887.5M883.3 338.7H887.2V342.4H883.3ZM883.3 340.5H887.2M889.6 337H894M890.2 336.5L891 338.1M893.4 336.5L892.6 338.1M889.1 339.3H894.5M891.8 337.7V342.7M891.5 339.6L889.3 342.4M892.1 339.6L894.3 342.4M896.1 337H900.5M896.4 338.7H900.3V342.4H896.4ZM896.4 340.5H900.3" stroke="#ffffff" stroke-width="0.8" fill="none"/>
<line x1="834" y1="343.8" x2="912" y2="343.8" stroke="#ffffff" stroke-width="1"/>
<text x="855.6" y="360.6" font-family="Liberation Serif" font-size="11.5" fill="#ffffff" font-weight="normal" text-anchor="start" textLength="28" lengthAdjust="spacingAndGlyphs">DN100</text>
<path d="M885.6 354V360.6M884.5 356H886.7M884.5 359L886.7 358M887 354.3H889.5M887 356.3H889.5M887 358.3H889.5M887 360.3H889.5M888.1 354V360.6M891.2 354V360.6M890.5 356H892M892.2 357H895.5V360.3H892.2ZM892 354.3H895.5M893.8 354.3V357" stroke="#ffffff" stroke-width="0.8" fill="none"/>
<line x1="851" y1="362" x2="900" y2="362" stroke="#ffffff" stroke-width="1"/>
<text x="872.5" y="381.9" font-family="Liberation Serif" font-size="11.5" fill="#ffffff" font-weight="normal" text-anchor="start" textLength="40" lengthAdjust="spacingAndGlyphs">DN10045°</text>
<path d="M915.1 376.5H919.4M915.6 376L916.4 377.5M918.9 376L918.1 377.5M915.3 378.1H919.2V381.6H915.3ZM915.3 379.8H919.2M922.2 376V381.9M921 377.8H923.5M921 380.4L923.5 379.5M923.8 377.2H926.5M925.3 376L923.8 381.6M925 378.7L926.5 381.6M924 379.5H926.2" stroke="#ffffff" stroke-width="0.8" fill="none"/>
<line x1="866" y1="383" x2="935" y2="383" stroke="#ffffff" stroke-width="1"/>
<path d="M870.1 412V418.8M869.4 414H870.8M871.1 415.1H874.1V418.5H871.1ZM870.8 412.3H874.1M872.5 412.3V415.1M875.7 412V418.8M875 414H876.4M876.7 415.1H879.7V418.5H876.7ZM876.4 412.3H879.7M878.1 412.3V415.1M881.1 412.5H884.8M880.8 414.7H885M880.8 418.5H885M882 414.7V418.5M883.9 414.7V418.5M881.3 416.6H884.6M886.6 412.5H890.4M886.2 415.1H890.8M888.5 413.4V418.8M888.3 415.4L886.4 418.5M888.7 415.4L890.6 418.5M892.2 412.5H895.9M891.7 415.1H896.4M894.1 413.4V418.8M893.8 415.4L892 418.5M894.3 415.4L896.2 418.5M898.2 412V418.8M897.3 414H899.1M897.3 417.1L899.1 416.1M899.3 412.3H902M899.3 414.4H902M899.3 416.4H902M899.3 418.5H902M900.5 412V418.8M903.6 412V418.8M902.9 414H904.3M902.9 417.1L904.3 416.1M904.5 415.1H907.6V418.5H904.5ZM904.3 412.3H907.6M905.9 412.3V415.1" stroke="#ffffff" stroke-width="0.8" fill="none"/>
<line x1="866" y1="420.5" x2="928" y2="420.5" stroke="#ffffff" stroke-width="1"/>
<text x="765" y="370.6" font-family="Liberation Serif" font-size="11.5" fill="#ffffff" font-weight="normal" text-anchor="start" textLength="28" lengthAdjust="spacingAndGlyphs">DN100</text>
<path d="M794.3 364V370.6M793.4 366H795.2M793.4 369L795.2 368M795.4 365.3H798.1M796.9 364L795.4 370.3M796.6 367L798.1 370.3M795.7 368H797.8M799.6 364V370.6M798.9 366H800.3M798.9 369L800.3 368M800.6 367H803.6V370.3H800.6ZM800.3 364.3H803.6M801.9 364.3V367" stroke="#ffffff" stroke-width="0.8" fill="none"/>
<line x1="764" y1="371.5" x2="812" y2="371.5" stroke="#ffffff" stroke-width="1"/>
<text x="740" y="410.3" font-family="Liberation Serif" font-size="11.5" fill="#ffffff" font-weight="normal" text-anchor="start" textLength="28" lengthAdjust="spacingAndGlyphs">DN100</text>
<path d="M769 404.5H773.3M769.3 406.2H773V410H769.3ZM769.3 408.1H773M776 404V410.3M774.8 405.9H777.2M777.4 405.3H780.1M778.9 404L777.4 410M778.6 406.8L780.1 410M777.7 407.8H779.8" stroke="#ffffff" stroke-width="0.8" fill="none"/>
<line x1="739" y1="411.2" x2="785" y2="411.2" stroke="#ffffff" stroke-width="1"/>
<text x="706.7" y="428.2" font-family="Liberation Serif" font-size="11.5" fill="#ffffff" font-weight="normal" text-anchor="start" textLength="40" lengthAdjust="spacingAndGlyphs">DN10045°</text>
<path d="M749 422.5H753.2M749.5 422L750.3 423.6M752.7 422L751.9 423.6M749.3 424.2H753V427.9H749.3ZM749.3 426H753M755.3 422.5H759.5M754.8 424.8H760M757.4 423.2V428.2M757.1 425.1L755 427.9M757.6 425.1L759.7 427.9" stroke="#ffffff" stroke-width="0.8" fill="none"/>
<line x1="706" y1="429.2" x2="770" y2="429.2" stroke="#ffffff" stroke-width="1"/>
<path d="M711.3 451.3V458M710.4 453.3H712.2M712.5 454.3H715.1V457.7H712.5ZM712.2 451.6H715.1M713.7 451.6V454.3M716.7 451.3V458M716 453.3H717.4M717.7 454.3H720.7V457.7H717.7ZM717.4 451.6H720.7M719.1 451.6V454.3M722.6 451.3V458M721.6 453.3H723.7M723.9 454.3H726.3V457.7H723.9ZM723.7 451.6H726.3M725 451.6V454.3M727.6 451.8H731.4M727.9 453.6H731.1V457.7H727.9ZM727.9 455.7H731.1M733.2 451.8H736.9M733.7 451.3L734.4 453M736.5 451.3L735.8 453M732.7 454.3H737.4M735.1 452.6V458M734.8 454.6L733 457.7M735.3 454.6L737.2 457.7M738.8 451.8H742.5M739.2 451.3L739.9 453M742 451.3L741.3 453M738.3 454.3H743M740.6 452.6V458M740.4 454.6L738.5 457.7M740.9 454.6L742.7 457.7M744.3 451.8H748.1M744.6 453.6H747.9V457.7H744.6ZM744.6 455.7H747.9" stroke="#ffffff" stroke-width="0.8" fill="none"/>
<line x1="710" y1="460" x2="770" y2="460" stroke="#ffffff" stroke-width="1"/>
<line x1="1048.4" y1="264.7" x2="1048.4" y2="452.7" stroke="#ffff00" stroke-width="1.2"/>
<line x1="1062.5" y1="264.7" x2="1062.5" y2="452.7" stroke="#ffff00" stroke-width="1.2"/>
<path d="M1048.4 264.7 Q1051.9 262.2 1055.5 265.7 M1055.5 264.7 A3.5 2 0 1 0 1062.5 264.7 A3.5 2 0 1 0 1055.5 264.7" stroke="#ffff00" stroke-width="1.2" fill="none"/>
<path d="M1048.4 452.7 Q1051.9 455.2 1055.5 451.7 M1055.5 452.7 A3.5 2 0 1 0 1062.5 452.7 A3.5 2 0 1 0 1055.5 452.7" stroke="#ffff00" stroke-width="1.2" fill="none"/>
<rect x="1046.9" y="378.4" width="17.1" height="6.5" stroke="#ffff00" stroke-width="1.2" fill="none"/>
<rect x="1046.9" y="413.2" width="17.1" height="6.5" stroke="#ffff00" stroke-width="1.2" fill="none"/>
<line x1="1091.4" y1="263.6" x2="1091.4" y2="452" stroke="#ffff00" stroke-width="1.2"/>
<line x1="1106" y1="263.6" x2="1106" y2="452" stroke="#ffff00" stroke-width="1.2"/>
<path d="M1091.4 263.6 Q1095.1 261.1 1098.7 264.6 M1098.7 263.6 A3.6 2 0 1 0 1106 263.6 A3.6 2 0 1 0 1098.7 263.6" stroke="#ffff00" stroke-width="1.2" fill="none"/>
<path d="M1091.4 452 Q1095.1 454.5 1098.7 451 M1098.7 452 A3.6 2 0 1 0 1106 452 A3.6 2 0 1 0 1098.7 452" stroke="#ffff00" stroke-width="1.2" fill="none"/>
<rect x="1089.9" y="350.6" width="17.6" height="6.5" stroke="#ffff00" stroke-width="1.2" fill="none"/>
<rect x="1089.9" y="385.2" width="17.6" height="6.5" stroke="#ffff00" stroke-width="1.2" fill="none"/>
<line x1="1141.3" y1="263.6" x2="1141.3" y2="453.9" stroke="#ffff00" stroke-width="1.2"/>
<line x1="1154.8" y1="263.6" x2="1154.8" y2="453.9" stroke="#ffff00" stroke-width="1.2"/>
<path d="M1141.3 263.6 Q1144.7 261.1 1148 264.6 M1148 263.6 A3.4 2 0 1 0 1154.8 263.6 A3.4 2 0 1 0 1148 263.6" stroke="#ffff00" stroke-width="1.2" fill="none"/>
<path d="M1141.3 453.9 Q1144.7 456.4 1148 452.9 M1148 453.9 A3.4 2 0 1 0 1154.8 453.9 A3.4 2 0 1 0 1148 453.9" stroke="#ffff00" stroke-width="1.2" fill="none"/>
<rect x="1139.8" y="350.6" width="16.5" height="6.5" stroke="#ffff00" stroke-width="1.2" fill="none"/>
<rect x="1139.8" y="385.2" width="16.5" height="6.5" stroke="#ffff00" stroke-width="1.2" fill="none"/>
<line x1="1184.5" y1="263.6" x2="1184.5" y2="452" stroke="#ffff00" stroke-width="1.2"/>
<line x1="1198" y1="263.6" x2="1198" y2="452" stroke="#ffff00" stroke-width="1.2"/>
<path d="M1184.5 263.6 Q1187.9 261.1 1191.2 264.6 M1191.2 263.6 A3.4 2 0 1 0 1198 263.6 A3.4 2 0 1 0 1191.2 263.6" stroke="#ffff00" stroke-width="1.2" fill="none"/>
<path d="M1184.5 452 Q1187.9 454.5 1191.2 451 M1191.2 452 A3.4 2 0 1 0 1198 452 A3.4 2 0 1 0 1191.2 452" stroke="#ffff00" stroke-width="1.2" fill="none"/>
<rect x="1183" y="379.8" width="16.5" height="6.5" stroke="#ffff00" stroke-width="1.2" fill="none"/>
<rect x="1183" y="413.8" width="16.5" height="6.5" stroke="#ffff00" stroke-width="1.2" fill="none"/>
<path d="M1029.8 322L1036.8 315M1030.3 328.5L1043.8 315M1037.3 328.5L1050.8 315M1044.3 328.5L1057.8 315M1051.3 328.5L1064.8 315M1058.3 328.5L1071.8 315M1065.3 328.5L1078.8 315M1072.3 328.5L1085.8 315M1079.3 328.5L1092.8 315M1086.3 328.5L1099.8 315M1093.3 328.5L1106.8 315M1100.3 328.5L1113.8 315M1107.3 328.5L1120.8 315M1114.3 328.5L1127.8 315M1121.3 328.5L1134.8 315M1128.3 328.5L1141.8 315M1135.3 328.5L1148.8 315M1142.3 328.5L1155.8 315M1149.3 328.5L1162.8 315M1156.3 328.5L1169.8 315M1163.3 328.5L1176.8 315M1170.3 328.5L1183.8 315M1177.3 328.5L1190.8 315M1184.3 328.5L1197.8 315M1191.3 328.5L1204.8 315M1198.3 328.5L1210.7 316.1M1205.3 328.5L1210.7 323.1" stroke="#ffffff" stroke-width="0.8" fill="none"/>
<rect x="1029.8" y="315" width="180.9" height="13.5" stroke="#ffffff" stroke-width="1" fill="none"/>
<rect x="1114" y="313" width="16" height="18" fill="#000"/>
<path d="M1114 322L1121 315M1114.5 328.5L1128 315M1121.5 328.5L1130 320M1128.5 328.5L1130 327" stroke="#ffffff" stroke-width="0.8" fill="none"/>
<path d="M1118 308 L1118 322 L1112 326 L1124 320 L1118 332 L1118 338" stroke="#ffff00" stroke-width="1" fill="none"/>
<path d="M1128 308 L1128 322 L1122 326 L1134 320 L1128 332 L1128 338" stroke="#ffff00" stroke-width="1" fill="none"/>
<line x1="1092" y1="361.2" x2="1078.7" y2="373.1" stroke="#cfcfcf" stroke-width="0.9"/>
<path d="M1072.9 378.2 L1078.2 372.9 L1089.9 384.6 L1084.6 389.9 Z" stroke="#ffff00" stroke-width="1.1" fill="none"/>
<path d="M1065.6 386.3 L1070.9 381 L1081.6 391.7 L1076.3 397 Z" stroke="#ffff00" stroke-width="1.1" fill="none"/>
<line x1="1076" y1="396.6" x2="1062" y2="409.3" stroke="#cfcfcf" stroke-width="0.9"/>
<path d="M1062.5 385 L1066 388 L1062.5 391" stroke="#ffff00" stroke-width="1" fill="none"/>
<path d="M1091.4 379.6 L1088 384.7 L1091.4 385.5" stroke="#ffff00" stroke-width="1" fill="none"/>
<line x1="1155.3" y1="363.7" x2="1168.6" y2="375.6" stroke="#cfcfcf" stroke-width="0.9"/>
<path d="M1162.7 392.4 L1157.4 387.1 L1169.1 375.4 L1174.4 380.7 Z" stroke="#ffff00" stroke-width="1.1" fill="none"/>
<path d="M1171 399.5 L1165.7 394.2 L1176.4 383.5 L1181.7 388.8 Z" stroke="#ffff00" stroke-width="1.1" fill="none"/>
<line x1="1171.3" y1="399.1" x2="1185.3" y2="411.8" stroke="#cfcfcf" stroke-width="0.9"/>
<path d="M1184.8 387.5 L1181.3 390.5 L1184.8 393.5" stroke="#ffff00" stroke-width="1" fill="none"/>
<path d="M1155.9 382.1 L1159.3 387.2 L1155.9 388" stroke="#ffff00" stroke-width="1" fill="none"/>
<path d="M1109.8 245H1113.7M1109.4 247.6H1114.2M1111.8 245.9V251.3M1111.5 247.9L1109.6 251M1112 247.9L1113.9 251M1116 244.5V251.3M1115.1 246.5H1116.9M1117.1 245.9H1119.9M1118.6 244.5L1117.1 251M1118.4 247.6L1119.9 251M1117.4 248.6H1119.6M1121.9 244.5V251.3M1120.8 246.5H1123M1123.2 247.6H1125.6V251H1123.2ZM1123 244.8H1125.6M1124.3 244.8V247.6M1127.2 244.5V251.3M1126.5 246.5H1128M1128.2 244.8H1131.3M1128.2 246.9H1131.3M1128.2 248.9H1131.3M1128.2 251H1131.3M1129.6 244.5V251.3M1132.7 245H1136.6M1132.2 247.6H1137.1M1134.7 245.9V251.3M1134.4 247.9L1132.5 251M1134.9 247.9L1136.8 251M1138.4 245H1142.3M1138.9 244.5L1139.7 246.2M1141.8 244.5L1141.1 246.2M1138.7 246.9H1142.1V251H1138.7ZM1138.7 248.9H1142.1M1144.4 244.5V251.3M1143.7 246.5H1145.1M1143.7 249.6L1145.1 248.6M1145.4 245.9H1148.5M1147.1 244.5L1145.4 251M1146.8 247.6L1148.5 251M1145.6 248.6H1148.3M1149.9 245H1153.7M1150.1 246.9H1153.5V251H1150.1ZM1150.1 248.9H1153.5M1155.6 245H1159.5M1156.1 244.5L1156.8 246.2M1159 244.5L1158.3 246.2M1155.9 246.9H1159.2V251H1155.9ZM1155.9 248.9H1159.2" stroke="#ffffff" stroke-width="0.8" fill="none"/>
<line x1="1103" y1="253" x2="1182" y2="253" stroke="#ffffff" stroke-width="1"/>
<line x1="1108" y1="253" x2="1100" y2="264" stroke="#ffffff" stroke-width="0.8"/>
<line x1="1157" y1="253" x2="1148" y2="264" stroke="#ffffff" stroke-width="0.8"/>
<text x="1002.5" y="357.6" font-family="Liberation Serif" font-size="11.5" fill="#ffffff" font-weight="normal" text-anchor="start" textLength="40" lengthAdjust="spacingAndGlyphs">DN10045°</text>
<path d="M1045.5 351V357.6M1044.5 353H1046.5M1044.5 356L1046.5 355M1046.8 354H1049.8V357.3H1046.8ZM1046.5 351.3H1049.8M1048.2 351.3V354M1051.4 351.5H1055.6M1051.9 351L1052.7 352.6M1055.1 351L1054.3 352.6M1051.1 353.6H1055.9M1051.1 357.3H1055.9M1052.4 353.6V357.3M1054.6 353.6V357.3M1051.6 355.5H1055.4M1058 351V357.6M1057.2 353H1058.8M1057.2 356L1058.8 355M1059 351.3H1062.5M1059 353.3H1062.5M1059 355.3H1062.5M1059 357.3H1062.5M1060.6 351V357.6" stroke="#ffffff" stroke-width="0.8" fill="none"/>
<line x1="1001" y1="359" x2="1075" y2="359" stroke="#ffffff" stroke-width="1"/>
<line x1="1075" y1="359.3" x2="1087.9" y2="370.4" stroke="#ffffff" stroke-width="0.8"/>
<text x="1002.5" y="370" font-family="Liberation Serif" font-size="11.5" fill="#ffffff" font-weight="normal" text-anchor="start" textLength="28" lengthAdjust="spacingAndGlyphs">DN100</text>
<path d="M1032.4 363.5V370M1031.5 365.4H1033.4M1031.5 368.4L1033.4 367.4M1033.6 366.4H1036.4V369.7H1033.6ZM1033.4 363.8H1036.4M1034.9 363.8V366.4M1037.9 364H1041.8M1037.6 366.1H1042.1M1037.6 369.7H1042.1M1038.9 366.1V369.7M1040.8 366.1V369.7M1038.1 367.9H1041.6" stroke="#ffffff" stroke-width="0.8" fill="none"/>
<line x1="1002" y1="371.5" x2="1060" y2="371.5" stroke="#ffffff" stroke-width="1"/>
<line x1="1060.3" y1="371.3" x2="1072.2" y2="381.4" stroke="#ffffff" stroke-width="0.8"/>
<text x="974.5" y="404" font-family="Liberation Serif" font-size="11.5" fill="#ffffff" font-weight="normal" text-anchor="start" textLength="40" lengthAdjust="spacingAndGlyphs">DN10045°</text>
<path d="M1017 398H1021.3M1016.8 400.1H1021.6M1016.8 403.7H1021.6M1018.1 400.1V403.7M1020.2 400.1V403.7M1017.3 401.9H1021M1023.9 397.5V404M1022.8 399.4H1024.9M1025.1 397.8H1028.2M1025.1 399.8H1028.2M1025.1 401.7H1028.2M1025.1 403.7H1028.2M1026.5 397.5V404M1030.4 397.5V404M1029.2 399.4H1031.6M1031.8 400.4H1034.5V403.7H1031.8ZM1031.6 397.8H1034.5M1033 397.8V400.4" stroke="#ffffff" stroke-width="0.8" fill="none"/>
<line x1="972" y1="406.2" x2="1052" y2="406.2" stroke="#ffffff" stroke-width="1"/>
<path d="M988.9 429.7H992.8M988.5 432H993.3M990.9 430.5V435.5M990.6 432.4L988.7 435.2M991.1 432.4L993.1 435.2M994.7 429.7H998.6M994.9 431.4H998.3V435.2H994.9ZM994.9 433.3H998.3M1000.5 429.7H1004.3M1000.2 431.7H1004.6M1000.2 435.2H1004.6M1001.4 431.7V435.2M1003.4 431.7V435.2M1000.7 433.5H1004.1M1006.2 429.7H1010.1M1005.7 432H1010.6M1008.2 430.5V435.5M1007.9 432.4L1006 435.2M1008.4 432.4L1010.3 435.2M1012 429.7H1015.8M1011.5 432H1016.3M1013.9 430.5V435.5M1013.7 432.4L1011.7 435.2M1014.1 432.4L1016.1 435.2M1018 429.2V435.5M1017.2 431.1H1018.7M1017.2 433.9L1018.7 433M1018.9 429.5H1022.1M1018.9 431.4H1022.1M1018.9 433.3H1022.1M1018.9 435.2H1022.1M1020.4 429.2V435.5M1023.5 429.7H1027.4M1024 429.2L1024.7 430.8M1026.9 429.2L1026.1 430.8M1023 432H1027.8M1025.4 430.5V435.5M1025.2 432.4L1023.2 435.2M1025.7 432.4L1027.6 435.2" stroke="#ffffff" stroke-width="0.8" fill="none"/>
<line x1="990" y1="437.7" x2="1052" y2="437.7" stroke="#ffffff" stroke-width="1"/>
<text x="1173.8" y="355.4" font-family="Liberation Serif" font-size="11.5" fill="#ffffff" font-weight="normal" text-anchor="start" textLength="40" lengthAdjust="spacingAndGlyphs">DN10045°</text>
<path d="M1216.3 349V355.4M1215.5 350.9H1217.1M1217.4 349.3H1220.8M1217.4 351.2H1220.8M1217.4 353.2H1220.8M1217.4 355.1H1220.8M1219 349V355.4M1222.4 349.5H1226.6M1222.9 349L1223.7 350.6M1226.1 349L1225.3 350.6M1222.1 351.6H1226.9M1222.1 355.1H1226.9M1223.4 351.6V355.1M1225.6 351.6V355.1M1222.6 353.4H1226.4M1228.7 349.5H1233M1228.2 351.9H1233.5M1230.8 350.3V355.4M1230.6 352.2L1228.4 355.1M1231.1 352.2L1233.2 355.1" stroke="#ffffff" stroke-width="0.8" fill="none"/>
<line x1="1168" y1="356.5" x2="1244" y2="356.5" stroke="#ffffff" stroke-width="1"/>
<line x1="1171.7" y1="356.6" x2="1163.8" y2="371.3" stroke="#ffffff" stroke-width="0.8"/>
<text x="1198.9" y="367" font-family="Liberation Serif" font-size="11.5" fill="#ffffff" font-weight="normal" text-anchor="start" textLength="28" lengthAdjust="spacingAndGlyphs">DN100</text>
<path d="M1228 361H1232.4M1228.6 360.5L1229.4 362.1M1231.8 360.5L1231 362.1M1227.8 363.1H1232.6M1227.8 366.7H1232.6M1229.1 363.1V366.7M1231.3 363.1V366.7M1228.3 364.9H1232.1M1234.7 360.5V367M1233.9 362.4H1235.5M1235.8 363.4H1239.3V366.7H1235.8ZM1235.5 360.8H1239.3M1237.4 360.8V363.4" stroke="#ffffff" stroke-width="0.8" fill="none"/>
<line x1="1183" y1="368.5" x2="1244" y2="368.5" stroke="#ffffff" stroke-width="1"/>
<line x1="1184.1" y1="369.5" x2="1173.5" y2="382.4" stroke="#ffffff" stroke-width="0.8"/>
<text x="1201.8" y="403.5" font-family="Liberation Serif" font-size="11.5" fill="#ffffff" font-weight="normal" text-anchor="start" textLength="40" lengthAdjust="spacingAndGlyphs">DN10045°</text>
<path d="M1244 397.5H1248M1244.5 397L1245.2 398.6M1247.5 397L1246.8 398.6M1243.5 399.9H1248.5M1246 398.3V403.5M1245.7 400.2L1243.7 403.2M1246.3 400.2L1248.3 403.2M1250 397.5H1254M1250.2 399.3H1253.8V403.2H1250.2ZM1250.2 401.2H1253.8M1256 397.5H1260M1256.5 397L1257.2 398.6M1259.5 397L1258.8 398.6M1256.2 399.3H1259.8V403.2H1256.2ZM1256.2 401.2H1259.8" stroke="#ffffff" stroke-width="0.8" fill="none"/>
<line x1="1195" y1="404.6" x2="1272" y2="404.6" stroke="#ffffff" stroke-width="1"/>
<path d="M1198.6 426.4H1202.5M1199.1 425.9L1199.8 427.6M1202 425.9L1201.3 427.6M1198.2 428.9H1202.9M1200.6 427.2V432.6M1200.3 429.2L1198.4 432.3M1200.8 429.2L1202.7 432.3M1204.9 425.9V432.6M1203.9 427.9H1206M1206.2 428.9H1208.6V432.3H1206.2ZM1206 426.2H1208.6M1207.3 426.2V428.9M1210 426.4H1213.9M1210.5 425.9L1211.2 427.6M1213.4 425.9L1212.7 427.6M1210.3 428.2H1213.6V432.3H1210.3ZM1210.3 430.3H1213.6M1216.3 425.9V432.6M1215.3 427.9H1217.4M1215.3 430.9L1217.4 429.9M1217.7 428.9H1220V432.3H1217.7ZM1217.4 426.2H1220M1218.7 426.2V428.9M1221.4 426.4H1225.3M1221.7 428.2H1225V432.3H1221.7ZM1221.7 430.3H1225M1227.1 426.4H1231M1226.9 428.6H1231.2M1226.9 432.3H1231.2M1228.1 428.6V432.3M1230 428.6V432.3M1227.4 430.5H1230.7M1232.8 426.4H1236.7M1233.3 425.9L1234 427.6M1236.2 425.9L1235.5 427.6M1233.1 428.2H1236.4V432.3H1233.1ZM1233.1 430.3H1236.4" stroke="#ffffff" stroke-width="0.8" fill="none"/>
<line x1="1195" y1="434.4" x2="1255" y2="434.4" stroke="#ffffff" stroke-width="1"/>
<path d="M928.2 480.3H932.1M928.7 479.8L929.4 481.5M931.6 479.8L930.9 481.5M928.5 482.2H931.8V486.3H928.5ZM928.5 484.2H931.8M934 480.3H937.8M933.7 482.5H938.1M933.7 486.3H938.1M934.9 482.5V486.3M936.9 482.5V486.3M934.2 484.4H937.6M939.9 479.8V486.6M939.2 481.8H940.7M939.2 484.9L940.7 483.9M940.9 482.9H944V486.3H940.9ZM940.7 480.1H944M942.3 480.1V482.9M945.4 480.3H949.3M945.9 479.8L946.6 481.5M948.8 479.8L948.1 481.5M945.7 482.2H949V486.3H945.7ZM945.7 484.2H949M951.1 480.3H955M951.4 482.2H954.8V486.3H951.4ZM951.4 484.2H954.8M957.3 479.8V486.6M956.4 481.8H958.2M956.4 484.9L958.2 483.9M958.5 481.2H961.2M959.9 479.8L958.5 486.3M959.7 482.9L961.2 486.3M958.7 483.9H961M962.6 480.3H966.4M963.1 479.8L963.8 481.5M966 479.8L965.2 481.5M962.8 482.2H966.2V486.3H962.8ZM962.8 484.2H966.2M968.3 480.3H972.2M968.8 479.8L969.5 481.5M971.7 479.8L971 481.5M968.6 482.2H971.9V486.3H968.6ZM968.6 484.2H971.9M974.5 479.8V486.6M973.6 481.8H975.4M973.6 484.9L975.4 483.9M975.6 482.9H978.4V486.3H975.6ZM975.4 480.1H978.4M976.9 480.1V482.9M980.2 479.8V486.6M979.3 481.8H981.1M981.4 481.2H984.1M982.9 479.8L981.4 486.3M982.6 482.9L984.1 486.3M981.6 483.9H983.9M985.7 479.8V486.6M985 481.8H986.5M986.7 481.2H989.8M988.4 479.8L986.7 486.3M988.1 482.9L989.8 486.3M986.9 483.9H989.6M991.7 479.8V486.6M990.7 481.8H992.6M990.7 484.9L992.6 483.9M992.8 480.1H995.6M992.8 482.2H995.6M992.8 484.2H995.6M992.8 486.3H995.6M994.1 479.8V486.6M997 480.3H1000.8M997.4 479.8L998.2 481.5M1000.3 479.8L999.6 481.5M996.7 482.5H1001M996.7 486.3H1001M997.9 482.5V486.3M999.8 482.5V486.3M997.2 484.4H1000.6M1002.7 480.3H1006.5M1002.9 482.2H1006.3V486.3H1002.9ZM1002.9 484.2H1006.3M1009 479.8V486.6M1007.9 481.8H1010.1M1007.9 484.9L1010.1 483.9M1010.3 481.2H1012.7M1011.7 479.8L1010.3 486.3M1011.4 482.9L1012.7 486.3M1010.6 483.9H1012.5M1014.6 479.8V486.6M1013.6 481.8H1015.5M1013.6 484.9L1015.5 483.9M1015.7 482.9H1018.5V486.3H1015.7ZM1015.5 480.1H1018.5M1017 480.1V482.9M1019.9 480.3H1023.7M1019.4 482.9H1024.2M1021.8 481.2V486.6M1021.5 483.2L1019.6 486.3M1022 483.2L1023.9 486.3M1026.2 479.8V486.6M1025.1 481.8H1027.3M1025.1 484.9L1027.3 483.9M1027.5 481.2H1029.9M1028.8 479.8L1027.5 486.3M1028.6 482.9L1029.9 486.3M1027.7 483.9H1029.7M1031.3 480.3H1035.2M1031.8 479.8L1032.5 481.5M1034.7 479.8L1034 481.5M1031.5 482.2H1034.9V486.3H1031.5ZM1031.5 484.2H1034.9M1037 480.3H1040.9M1037.5 479.8L1038.2 481.5M1040.4 479.8L1039.7 481.5M1036.6 482.9H1041.4M1039 481.2V486.6M1038.7 483.2L1036.8 486.3M1039.2 483.2L1041.1 486.3M1043.2 479.8V486.6M1042.3 481.8H1044.1M1042.3 484.9L1044.1 483.9M1044.3 481.2H1047.1M1045.8 479.8L1044.3 486.3M1045.6 482.9L1047.1 486.3M1044.6 483.9H1046.8M1048.5 480.3H1052.3M1049 479.8L1049.7 481.5M1051.9 479.8L1051.1 481.5M1048 482.9H1052.8M1050.4 481.2V486.6M1050.2 483.2L1048.2 486.3M1050.7 483.2L1052.6 486.3M1054.6 479.8V486.6M1053.7 481.8H1055.6M1055.8 481.2H1058.5M1057.3 479.8L1055.8 486.3M1057.1 482.9L1058.5 486.3M1056 483.9H1058.3" stroke="#ffffff" stroke-width="0.8" fill="none"/>
<path d="M972.2 510V523.6M970.1 514.1H974.3M970.1 520.2L974.3 518.2M974.8 510.7H979.4M974.8 514.8H979.4M974.8 518.8H979.4M974.8 522.9H979.4M976.9 510V523.6M982.1 511.1H989.6M983.1 510L984.5 513.4M988.7 510L987.3 513.4M981.2 516.1H990.5M985.9 512.7V523.6M985.4 516.8L981.7 522.9M986.3 516.8L990.1 522.9M994.4 510V523.6M992.3 514.1H996.5M997 510.7H1001.7M997 514.8H1001.7M997 518.8H1001.7M997 522.9H1001.7M999.1 510V523.6M1005.2 510V523.6M1003.4 514.1H1007M1007.4 510.7H1012.8M1007.4 514.8H1012.8M1007.4 518.8H1012.8M1007.4 522.9H1012.8M1009.9 510V523.6M1015.9 510V523.6M1014.5 514.1H1017.4M1014.5 520.2L1017.4 518.2M1017.8 516.1H1023.9V522.9H1017.8ZM1017.4 510.7H1023.9M1020.6 510.7V516.1M1026.6 511.1H1034.1M1027.5 510L1028.9 513.4M1033.1 510L1031.7 513.4M1027.1 514.8H1033.6V522.9H1027.1ZM1027.1 518.8H1033.6M1037.7 511.1H1045.2M1038.6 510L1040 513.4M1044.2 510L1042.8 513.4M1038.2 514.8H1044.7V522.9H1038.2ZM1038.2 518.8H1044.7M1048.8 511.1H1056.3M1049.8 510L1051.2 513.4M1055.4 510L1054 513.4M1048.4 515.4H1056.8M1048.4 522.9H1056.8M1050.7 515.4V522.9M1054.4 515.4V522.9M1049.3 519.2H1055.8M1060.8 510V523.6M1059 514.1H1062.6M1059 520.2L1062.6 518.2M1063 516.1H1068.3V522.9H1063ZM1062.6 510.7H1068.3M1065.5 510.7V516.1M1071.9 510V523.6M1070.1 514.1H1073.7M1070.1 520.2L1073.7 518.2M1074.1 510.7H1079.5M1074.1 514.8H1079.5M1074.1 518.8H1079.5M1074.1 522.9H1079.5M1076.6 510V523.6M1082.2 511.1H1089.6M1082.6 514.8H1089.2V522.9H1082.6ZM1082.6 518.8H1089.2M1093.8 510V523.6M1092.4 514.1H1095.2M1092.4 520.2L1095.2 518.2M1095.6 510.7H1101.7M1095.6 514.8H1101.7M1095.6 518.8H1101.7M1095.6 522.9H1101.7M1098.4 510V523.6M1105.2 510V523.6M1103.5 514.1H1107M1107.5 512.7H1112.8M1110.4 510L1107.5 522.9M1109.9 516.1L1112.8 522.9M1108 518.2H1112.3M1116 510V523.6M1114.6 514.1H1117.4M1114.6 520.2L1117.4 518.2M1117.9 512.7H1123.9M1121.1 510L1117.9 522.9M1120.7 516.1L1123.9 522.9M1118.3 518.2H1123.5M1126.6 511.1H1134.1M1125.7 516.1H1135M1130.4 512.7V523.6M1129.9 516.8L1126.2 522.9M1130.8 516.8L1134.6 522.9M1138.9 510V523.6M1136.8 514.1H1141M1141.5 512.7H1146.2M1144.1 510L1141.5 522.9M1143.6 516.1L1146.2 522.9M1141.9 518.2H1145.7M1149.3 510V523.6M1147.9 514.1H1150.7M1147.9 520.2L1150.7 518.2M1151.2 516.1H1157.3V522.9H1151.2ZM1150.7 510.7H1157.3M1154 510.7V516.1M1160 511.1H1167.4M1160.9 510L1162.3 513.4M1166.5 510L1165.1 513.4M1159.5 515.4H1167.9M1159.5 522.9H1167.9M1161.8 515.4V522.9M1165.6 515.4V522.9M1160.4 519.2H1167M1171.1 511.1H1178.6M1170.6 515.4H1179M1170.6 522.9H1179M1173 515.4V522.9M1176.7 515.4V522.9M1171.6 519.2H1178.1M1182.7 510V523.6M1181.3 514.1H1184.1M1181.3 520.2L1184.1 518.2M1184.5 516.1H1190.6V522.9H1184.5ZM1184.1 510.7H1190.6M1187.3 510.7V516.1" stroke="#e0e0e0" stroke-width="0.9" fill="none"/>
<line x1="973" y1="528" x2="1242.2" y2="528" stroke="#00ff00" stroke-width="1.5"/>
<line x1="973" y1="530.6" x2="1242.2" y2="530.6" stroke="#00ff00" stroke-width="1.5"/>
<rect x="470.8" y="706.5" width="21.5" height="36.5" fill="url(#pc)"/>
<rect x="534.6" y="706.5" width="23.6" height="36.5" fill="url(#pc)"/>
<rect x="492.3" y="706.5" width="10.4" height="36.5" fill="url(#ps)"/>
<rect x="525.1" y="706.5" width="9.5" height="36.5" fill="url(#ps)"/>
<rect x="470.8" y="701.1" width="31.9" height="5.4" fill="#000"/>
<rect x="525.1" y="701.1" width="33.1" height="5.4" fill="#000"/>
<path d="M470.8 704.6L474.3 701.1M472.4 706.5L477.8 701.1M475.9 706.5L481.3 701.1M479.4 706.5L484.8 701.1M482.9 706.5L488.3 701.1M486.4 706.5L491.8 701.1M489.9 706.5L495.3 701.1M493.4 706.5L498.8 701.1M496.9 706.5L502.3 701.1M500.4 706.5L502.7 704.2" stroke="#ffff00" stroke-width="0.9" fill="none"/>
<path d="M525.1 704.6L528.6 701.1M526.7 706.5L532.1 701.1M530.2 706.5L535.6 701.1M533.7 706.5L539.1 701.1M537.2 706.5L542.6 701.1M540.7 706.5L546.1 701.1M544.2 706.5L549.6 701.1M547.7 706.5L553.1 701.1M551.2 706.5L556.6 701.1M554.7 706.5L558.2 703" stroke="#ffff00" stroke-width="0.9" fill="none"/>
<path d="M498.1 700.9L501.6 697.4M501.4 701.1L502.7 699.8" stroke="#ffff00" stroke-width="0.9" fill="none"/>
<path d="M525.1 700.9L528.6 697.4M528.4 701.1L529.6 699.9" stroke="#ffff00" stroke-width="0.9" fill="none"/>
<line x1="470.8" y1="701.1" x2="498.1" y2="701.1" stroke="#ffff00" stroke-width="0.9"/>
<line x1="529.6" y1="701.1" x2="558.2" y2="701.1" stroke="#ffff00" stroke-width="0.9"/>
<line x1="498.1" y1="697.4" x2="498.1" y2="701.1" stroke="#ffff00" stroke-width="0.9"/>
<line x1="529.6" y1="697.4" x2="529.6" y2="701.1" stroke="#ffff00" stroke-width="0.9"/>
<line x1="470.8" y1="743.5" x2="558.2" y2="743.5" stroke="#ffff00" stroke-width="1"/>
<path d="M470.8 697 L470.8 723 L465 727 L472 725 L470.8 728 L470.8 747.2" stroke="#ffff00" stroke-width="1" fill="none"/>
<path d="M558.2 697 L558.2 722 L563 722 L556 727 L558.2 728 L558.2 747.2" stroke="#ffff00" stroke-width="1" fill="none"/>
<path d="M488.2 743 L488.2 747.6 L498.5 747.6 L498.5 760 L502.7 760" stroke="#ffff00" stroke-width="1" fill="none"/>
<path d="M538.3 743 L538.3 747.6 L529.6 747.6 L529.6 760 L525.1 760" stroke="#ffff00" stroke-width="1" fill="none"/>
<rect x="502.7" y="617.6" width="22.4" height="217.4" fill="#000"/>
<line x1="502.7" y1="617.6" x2="502.7" y2="835.2" stroke="#ffffff" stroke-width="1.1"/>
<line x1="525.1" y1="617.6" x2="525.1" y2="835.2" stroke="#ffffff" stroke-width="1.1"/>
<path d="M502.7 617.6 Q508.3 615.1 513.9 618.6 M513.9 617.6 A5.6 2 0 1 0 525.1 617.6 A5.6 2 0 1 0 513.9 617.6" stroke="#ffffff" stroke-width="1.1" fill="none"/>
<path d="M502.7 835.2 Q508.3 837.7 513.9 834.2 M513.9 835.2 A5.6 2 0 1 0 525.1 835.2 A5.6 2 0 1 0 513.9 835.2" stroke="#ffffff" stroke-width="1.1" fill="none"/>
<rect x="501.7" y="635.7" width="24.4" height="5" stroke="#ffffff" stroke-width="1.1" fill="none"/>
<rect x="501.7" y="659.9" width="24.4" height="5" stroke="#ffffff" stroke-width="1.1" fill="none"/>
<rect x="501.7" y="684.5" width="24.4" height="5" stroke="#ffffff" stroke-width="1.1" fill="none"/>
<rect x="501.7" y="768.7" width="24.4" height="5" stroke="#ffffff" stroke-width="1.1" fill="none"/>
<rect x="501.7" y="792.5" width="24.4" height="5" stroke="#ffffff" stroke-width="1.1" fill="none"/>
<rect x="501.7" y="817" width="24.4" height="5" stroke="#ffffff" stroke-width="1.1" fill="none"/>
<line x1="513.9" y1="613.6" x2="513.9" y2="839.7" stroke="#ffffff" stroke-width="0.9"/>
<line x1="525.4" y1="667.8" x2="560" y2="667.8" stroke="#ffffff" stroke-width="1"/>
<line x1="525.4" y1="675.8" x2="560" y2="675.8" stroke="#ffffff" stroke-width="1"/>
<rect x="534" y="665.8" width="4" height="12" stroke="#ffffff" stroke-width="1" fill="none"/>
<line x1="560" y1="667.8" x2="560" y2="675.8" stroke="#ffffff" stroke-width="1"/>
<line x1="556" y1="671.8" x2="566" y2="671.8" stroke="#ffffff" stroke-width="0.8"/>
<line x1="525.4" y1="777.5" x2="560" y2="777.5" stroke="#ffffff" stroke-width="1"/>
<line x1="525.4" y1="785.5" x2="560" y2="785.5" stroke="#ffffff" stroke-width="1"/>
<rect x="534" y="775.5" width="4" height="12" stroke="#ffffff" stroke-width="1" fill="none"/>
<line x1="560" y1="777.5" x2="560" y2="785.5" stroke="#ffffff" stroke-width="1"/>
<line x1="556" y1="781.5" x2="566" y2="781.5" stroke="#ffffff" stroke-width="0.8"/>
<line x1="465" y1="700" x2="465" y2="720" stroke="#ffffff" stroke-width="0.8"/>
<path d="M459.4 699.4H461.1M459.6 698L459.9 702.5M460.9 698L460.6 702.5M459.3 705.2H461.2M459.3 715.1H461.2M459.8 705.2V715.1M460.7 705.2V715.1M459.5 710.2H461M461.9 699.4H463.6M461.7 706.1H463.8M462.8 701.6V716M462.6 707L461.8 715.1M462.9 707L463.7 715.1" stroke="#ffffff" stroke-width="0.7" fill="none"/>
<text x="533.6" y="604.6" font-family="Liberation Serif" font-size="11" fill="#00ff00" font-weight="normal" text-anchor="start" textLength="30" lengthAdjust="spacingAndGlyphs">PVC-U</text>
<path d="M566 596.8V604.6M565.1 599.1H566.9M565.1 602.6L566.9 601.5M567.2 600.3H571.2V604.2H567.2ZM566.9 597.2H571.2M569 597.2V600.3M572.9 597.4H577.8M573.5 596.8L574.5 598.8M577.2 596.8L576.3 598.8M573.2 599.5H577.5V604.2H573.2ZM573.2 601.9H577.5" stroke="#00ff00" stroke-width="0.9" fill="none"/>
<line x1="532.6" y1="606.4" x2="580" y2="606.4" stroke="#ffffff" stroke-width="0.9"/>
<line x1="533" y1="606.4" x2="525" y2="622" stroke="#ffffff" stroke-width="0.8"/>
<path d="M535.1 625.4H539.7M535.7 624.8L536.5 626.8M539.1 624.8L538.3 626.8M534.5 628.3H540.3M537.4 626.4V632.6M537.1 628.7L534.8 632.2M537.7 628.7L540 632.2M541.9 625.4H546.5M542.5 624.8L543.3 626.8M545.9 624.8L545.1 626.8M542.2 627.5H546.2V632.2H542.2ZM542.2 629.9H546.2M548.7 625.4H553.3M549.3 624.8L550.1 626.8M552.7 624.8L551.9 626.8M548.1 628.3H553.9M551 626.4V632.6M550.7 628.7L548.4 632.2M551.3 628.7L553.6 632.2M555.5 625.4H560.1M556.1 624.8L556.9 626.8M559.5 624.8L558.7 626.8M554.9 628.3H560.7M557.8 626.4V632.6M557.5 628.7L555.2 632.2M558.1 628.7L560.4 632.2M562.3 625.4H566.9M562.9 624.8L563.7 626.8M566.3 624.8L565.5 626.8M562.6 627.5H566.6V632.2H562.6ZM562.6 629.9H566.6" stroke="#00ff00" stroke-width="0.9" fill="none"/>
<line x1="533" y1="634.2" x2="569" y2="634.2" stroke="#ffffff" stroke-width="0.9"/>
<line x1="533" y1="634.2" x2="525" y2="650" stroke="#ffffff" stroke-width="0.8"/>
<text x="551.6" y="651.6" font-family="Liberation Serif" font-size="11" fill="#00ff00" font-weight="normal" text-anchor="start" textLength="30" lengthAdjust="spacingAndGlyphs">PVC-U</text>
<path d="M583.7 644.4H588.7M584 646.5H588.4V651.2H584ZM584 648.9H588.4M591.7 643.8V651.6M590.5 646.1H592.9M593.2 647.3H596.8V651.2H593.2ZM592.9 644.2H596.8M594.8 644.2V647.3M599.1 643.8V651.6M598 646.1H600.3M600.6 644.2H604.2M600.6 646.5H604.2M600.6 648.9H604.2M600.6 651.2H604.2M602.3 643.8V651.6" stroke="#00ff00" stroke-width="0.9" fill="none"/>
<line x1="550.6" y1="652.5" x2="605.8" y2="652.5" stroke="#ffffff" stroke-width="0.9"/>
<line x1="551" y1="652.5" x2="541" y2="668" stroke="#ffffff" stroke-width="0.8"/>
<path d="M425.1 668.4V676.3M424.1 670.8H426.1M426.4 670H430.6M428.7 668.4L426.4 675.9M428.3 672L430.6 675.9M426.7 673.1H430.3M432.5 669H437.7M433.1 668.4L434.1 670.4M437 668.4L436 670.4M432.2 671.6H438M432.2 675.9H438M433.8 671.6V675.9M436.4 671.6V675.9M432.8 673.8H437.3M440.5 668.4V676.3M439.5 670.8H441.5M439.5 674.3L441.5 673.1M441.8 672H446V675.9H441.8ZM441.5 668.8H446M443.7 668.8V672M447.9 669H453.1M448.5 668.4L449.5 670.4M452.4 668.4L451.5 670.4M447.6 671.6H453.4M447.6 675.9H453.4M449.2 671.6V675.9M451.8 671.6V675.9M448.2 673.8H452.8M455.6 669H460.8M456.3 668.4L457.2 670.4M460.1 668.4L459.2 670.4M455.9 671.2H460.5V675.9H455.9ZM455.9 673.5H460.5M464.1 668.4V676.3M462.7 670.8H465.6M462.7 674.3L465.6 673.1M465.9 668.8H469.1M465.9 671.2H469.1M465.9 673.5H469.1M465.9 675.9H469.1M467.4 668.4V676.3M471 669H476.2M471.7 668.4L472.7 670.4M475.6 668.4L474.6 670.4M471.4 671.2H475.9V675.9H471.4ZM471.4 673.5H475.9M478.7 669H483.9M479.4 668.4L480.4 670.4M483.3 668.4L482.3 670.4M478.4 671.6H484.2M478.4 675.9H484.2M480 671.6V675.9M482.6 671.6V675.9M479.1 673.8H483.6M487 668.4V676.3M485.8 670.8H488.3M488.6 670H492.3M490.6 668.4L488.6 675.9M490.3 672L492.3 675.9M488.9 673.1H492" stroke="#00ff00" stroke-width="0.9" fill="none"/>
<line x1="422.5" y1="677.5" x2="493.9" y2="677.5" stroke="#ffffff" stroke-width="0.9"/>
<line x1="493" y1="677.5" x2="500" y2="700" stroke="#ffffff" stroke-width="0.8"/>
<path d="M462.8 681.4H467.5M462.5 684.3H467.8M462.5 689.2H467.8M463.9 684.3V689.2M466.3 684.3V689.2M463.1 686.8H467.2M470.1 680.7V689.7M469.2 683.4H471M471.3 681.2H475.2M471.3 683.9H475.2M471.3 686.6H475.2M471.3 689.2H475.2M473.1 680.7V689.7M476.9 681.4H481.6M477.5 680.7L478.4 683M481 680.7L480.2 683M476.6 684.3H481.9M476.6 689.2H481.9M478.1 684.3V689.2M480.5 684.3V689.2M477.2 686.8H481.3" stroke="#00ff00" stroke-width="0.9" fill="none"/>
<line x1="460.6" y1="690.5" x2="483.8" y2="690.5" stroke="#ffffff" stroke-width="0.9"/>
<line x1="484" y1="690.5" x2="495" y2="706" stroke="#ffffff" stroke-width="0.8"/>
<path d="M542.3 682.6H547.4M541.6 685.9H548M544.8 683.7V690.8M544.5 686.3L541.9 690.4M545.1 686.3L547.7 690.4M550.2 681.9V690.8M549.2 684.6H551.2M549.2 688.6L551.2 687.2M551.5 682.3H555.7M551.5 685H555.7M551.5 687.7H555.7M551.5 690.4H555.7M553.4 681.9V690.8M557.5 682.6H562.6M558.2 681.9L559.1 684.1M562 681.9L561 684.1M557.2 685.5H563M557.2 690.4H563M558.8 685.5V690.4M561.4 685.5V690.4M557.8 688H562.3" stroke="#00ff00" stroke-width="0.9" fill="none"/>
<line x1="535" y1="692" x2="564.9" y2="692" stroke="#ffffff" stroke-width="0.9"/>
<line x1="535" y1="692" x2="530" y2="704" stroke="#ffffff" stroke-width="0.8"/>
<path d="M569.2 704.2V713.2M568 706.9H570.5M570.8 708.2H574.5V712.8H570.8ZM570.5 704.7H574.5M572.5 704.7V708.2M576.4 704.9H581.6M577 704.2L578 706.5M580.9 704.2L580 706.5M576.1 707.8H581.9M576.1 712.8H581.9M577.7 707.8V712.8M580.3 707.8V712.8M576.7 710.3H581.2M584.9 704.2V713.2M583.5 706.9H586.4M586.7 708.2H589.9V712.8H586.7ZM586.4 704.7H589.9M588.2 704.7V708.2M592.4 704.2V713.2M591.2 706.9H593.6M591.2 711L593.6 709.6M594 704.7H597.7M594 707.4H597.7M594 710.1H597.7M594 712.8H597.7M595.7 704.2V713.2M599.5 704.9H604.7M599.9 707.4H604.4V712.8H599.9ZM599.9 710.1H604.4" stroke="#00ff00" stroke-width="0.9" fill="none"/>
<line x1="566.4" y1="714.5" x2="607" y2="714.5" stroke="#ffffff" stroke-width="0.9"/>
<line x1="568" y1="714.5" x2="548" y2="714.5" stroke="#ffffff" stroke-width="0.8"/>
<path d="M472.6 753.5V762.4M471.6 756.2H473.5M473.8 757.5H477.9V762H473.8ZM473.5 753.9H477.9M475.7 753.9V757.5M480.1 753.5V762.4M479.1 756.2H481M481.4 757.5H485.5V762H481.4ZM481 753.9H485.5M483.2 753.9V757.5M488.1 753.5V762.4M486.7 756.2H489.5M486.7 760.2L489.5 758.8M489.8 755.3H493M491.6 753.5L489.8 762M491.3 757.5L493 762M490.1 758.8H492.7" stroke="#00ff00" stroke-width="0.9" fill="none"/>
<line x1="470" y1="763.5" x2="494.6" y2="763.5" stroke="#ffffff" stroke-width="0.9"/>
<line x1="495" y1="763.5" x2="500" y2="750" stroke="#ffffff" stroke-width="0.8"/>
<text x="553.4" y="800.5" font-family="Liberation Serif" font-size="11" fill="#00ff00" font-weight="normal" text-anchor="start" textLength="30" lengthAdjust="spacingAndGlyphs">PVC-U</text>
<path d="M585.7 792.3H590.8M586 794.7H590.5V800.1H586ZM586 797.4H590.5M593.2 792.3H598.3M592.9 795.2H598.6M592.9 800.1H598.6M594.5 795.2V800.1M597 795.2V800.1M593.5 797.7H598M600.7 792.3H605.8M601.4 791.6L602.3 793.8M605.1 791.6L604.2 793.8M600.4 795.2H606.1M600.4 800.1H606.1M602 795.2V800.1M604.5 795.2V800.1M601 797.7H605.5" stroke="#00ff00" stroke-width="0.9" fill="none"/>
<line x1="552.4" y1="801.5" x2="608" y2="801.5" stroke="#ffffff" stroke-width="0.9"/>
<line x1="552" y1="801.5" x2="542" y2="786" stroke="#ffffff" stroke-width="0.8"/>
<path d="M536.1 814V823M534.8 816.7H537.4M537.7 815.8H540.6M539.3 814L537.7 822.5M539 818L540.6 822.5M538 819.4H540.3M542.7 814V823M541.6 816.7H543.8M544.1 815.8H547.4M545.9 814L544.1 822.5M545.6 818L547.4 822.5M544.4 819.4H547.1M549.5 814V823M548.4 816.7H550.6M548.4 820.8L550.6 819.4M550.9 815.8H554.2M552.7 814L550.9 822.5M552.4 818L554.2 822.5M551.2 819.4H553.9M555.8 814.7H560.4M555.5 817.6H560.7M555.5 822.5H560.7M557 817.6V822.5M559.2 817.6V822.5M556.1 820.1H560.1M562.6 814.7H567.2M563.2 814L564 816.2M566.6 814L565.8 816.2M562.9 817.1H566.9V822.5H562.9ZM562.9 819.9H566.9" stroke="#00ff00" stroke-width="0.9" fill="none"/>
<line x1="532" y1="824.5" x2="569.3" y2="824.5" stroke="#ffffff" stroke-width="0.9"/>
<line x1="532" y1="824.5" x2="524" y2="808" stroke="#ffffff" stroke-width="0.8"/>
<path d="M709.8 596.4 Q712 585 723.1 583.1 L723.1 655.4 L717.8 655.4 L717.8 642.8 L708.5 642.8 L708.5 638.2 L716.4 638.2 L716.4 601 L709.8 601 Z" fill="#fff"/>
<path d="M709.8 596.4 Q712 585 723.1 583.1 L723.1 655.4 L717.8 655.4 L717.8 642.8 L708.5 642.8 L708.5 638.2 L716.4 638.2 L716.4 601 L709.8 601 Z" fill="#fff" transform="translate(1513.1,0) scale(-1,1)"/>
<path d="M744.3 585.1 Q754 587 756.9 595.5 Q760 587 768.8 583.1 L768.8 655.4 L762.9 655.4 L762.9 642.8 L750.9 642.8 L750.9 655.4 L744.3 655.4 Z" fill="#fff"/>
<rect x="716.4" y="601" width="6.7" height="35.2" fill="url(#ps)"/>
<rect x="790" y="601" width="6.7" height="35.2" fill="url(#ps)"/>
<rect x="744.3" y="601" width="6.6" height="35.2" fill="url(#ps)"/>
<rect x="762.9" y="601" width="5.9" height="35.2" fill="url(#ps)"/>
<rect x="691.2" y="601" width="25.2" height="35.2" fill="url(#pc)"/>
<rect x="796.7" y="601" width="29.2" height="35.2" fill="url(#pc)"/>
<rect x="750.9" y="601" width="12" height="35.2" fill="url(#pc)"/>
<path d="M691.2 599.9L694.7 596.4M693.6 601L698.2 596.4M697.1 601L701.7 596.4M700.6 601L705.2 596.4M704.1 601L708.7 596.4M707.6 601L712.2 596.4M711.1 601L715.7 596.4M714.6 601L716.4 599.2" stroke="#ffffff" stroke-width="0.8" fill="none"/>
<path d="M796.7 599.9L800.2 596.4M799.1 601L803.7 596.4M802.6 601L807.2 596.4M806.1 601L810.7 596.4M809.6 601L814.2 596.4M813.1 601L817.7 596.4M816.6 601L821.2 596.4M820.1 601L824.7 596.4M823.6 601L825.9 598.7" stroke="#ffffff" stroke-width="0.8" fill="none"/>
<path d="M750.9 599.9L754.4 596.4M753.3 601L757.9 596.4M756.8 601L761.4 596.4M760.3 601L762.9 598.4" stroke="#ffffff" stroke-width="0.8" fill="none"/>
<line x1="691.2" y1="596.4" x2="716.4" y2="596.4" stroke="#ffffff" stroke-width="0.8"/>
<line x1="796.7" y1="596.4" x2="825.9" y2="596.4" stroke="#ffffff" stroke-width="0.8"/>
<line x1="690" y1="637.9" x2="825.9" y2="637.9" stroke="#ffffff" stroke-width="1"/>
<line x1="690" y1="590" x2="690" y2="645" stroke="#ffffff" stroke-width="0.8"/>
<line x1="825.9" y1="590" x2="825.9" y2="645" stroke="#ffffff" stroke-width="0.8"/>
<path d="M691 615 L684 620 L692 618" stroke="#ffffff" stroke-width="0.8" fill="none"/>
<path d="M825 612 L832 614 L825 618" stroke="#ffffff" stroke-width="0.8" fill="none"/>
<rect x="723.1" y="551" width="21.2" height="140" fill="#000"/>
<line x1="723.1" y1="551.3" x2="723.1" y2="691.2" stroke="#ffffff" stroke-width="1.1"/>
<line x1="744.3" y1="551.3" x2="744.3" y2="691.2" stroke="#ffffff" stroke-width="1.1"/>
<path d="M723.1 551.3 Q728.4 548.8 733.7 552.3 M733.7 551.3 A5.3 2 0 1 0 744.3 551.3 A5.3 2 0 1 0 733.7 551.3" stroke="#ffffff" stroke-width="1.1" fill="none"/>
<path d="M723.1 691.2 Q728.4 693.7 733.7 690.2 M733.7 691.2 A5.3 2 0 1 0 744.3 691.2 A5.3 2 0 1 0 733.7 691.2" stroke="#ffffff" stroke-width="1.1" fill="none"/>
<line x1="733.7" y1="545" x2="733.7" y2="698" stroke="#ffffff" stroke-width="0.9"/>
<rect x="768.8" y="551" width="21.9" height="140" fill="#000"/>
<line x1="768.8" y1="551.3" x2="768.8" y2="691.2" stroke="#ffffff" stroke-width="1.1"/>
<line x1="790.7" y1="551.3" x2="790.7" y2="691.2" stroke="#ffffff" stroke-width="1.1"/>
<path d="M768.8 551.3 Q774.3 548.8 779.8 552.3 M779.8 551.3 A5.5 2 0 1 0 790.7 551.3 A5.5 2 0 1 0 779.8 551.3" stroke="#ffffff" stroke-width="1.1" fill="none"/>
<path d="M768.8 691.2 Q774.3 693.7 779.8 690.2 M779.8 691.2 A5.5 2 0 1 0 790.7 691.2 A5.5 2 0 1 0 779.8 691.2" stroke="#ffffff" stroke-width="1.1" fill="none"/>
<line x1="779.8" y1="545" x2="779.8" y2="698" stroke="#ffffff" stroke-width="0.9"/>
<line x1="841" y1="599" x2="841" y2="637" stroke="#ffffff" stroke-width="0.8"/>
<line x1="836" y1="599" x2="846" y2="599" stroke="#ffffff" stroke-width="0.8"/>
<line x1="836" y1="637" x2="846" y2="637" stroke="#ffffff" stroke-width="0.8"/>
<path d="M837.3 612V620M836.4 614.4H838.3M836.4 618L838.3 616.8M838.5 615.6H840.6V619.6H838.5ZM838.3 612.4H840.6M839.4 612.4V615.6" stroke="#ffffff" stroke-width="0.8" fill="none"/>
<line x1="684" y1="570" x2="684" y2="595" stroke="#ffffff" stroke-width="0.8"/>
<line x1="679" y1="628" x2="684" y2="615" stroke="#ffffff" stroke-width="0.8"/>
<path d="M676.6 604.4H678.9M676.9 603L677.3 607.2M678.6 603L678.2 607.2M676.7 609H678.8V619.1H676.7ZM676.7 614H678.8M680.4 603V620M679.8 608.1H681.1M681.2 610.6H682.7V619.1H681.2ZM681.1 603.9H682.7M681.9 603.9V610.6" stroke="#ffffff" stroke-width="0.7" fill="none"/>
<path d="M678.6 573V589M678.2 577.8H679M679.1 580.2H680.8V588.2H679.1ZM679 573.8H680.8M679.9 573.8V580.2M681.6 573V589M681.2 577.8H682M681.2 585L682 582.6M682.1 576.2H683.8M683 573L682.1 588.2M682.9 580.2L683.8 588.2M682.2 582.6H683.6" stroke="#ffffff" stroke-width="0.7" fill="none"/>
<path d="M694.3 531.4H698.2M694.8 531L695.5 532.4M697.7 531L697 532.4M694.6 532.9H697.9V536.1H694.6ZM694.6 534.5H697.9M700.1 531.4H703.9M700.3 532.9H703.7V536.1H700.3ZM700.3 534.5H703.7M705.8 531.4H709.6M705.5 533.2H709.9M705.5 536.1H709.9M706.7 533.2V536.1M708.7 533.2V536.1M706 534.7H709.4M711.5 531.4H715.3M712 531L712.7 532.4M714.9 531L714.1 532.4M711.7 532.9H715.1V536.1H711.7ZM711.7 534.5H715.1M717.7 531V536.4M716.7 532.6H718.6M718.8 533.4H721.5V536.1H718.8ZM718.6 531.3H721.5M720.1 531.3V533.4" stroke="#00ff00" stroke-width="0.7" fill="none"/>
<line x1="693" y1="537.5" x2="722" y2="537.5" stroke="#ffffff" stroke-width="0.8"/>
<line x1="722" y1="537.5" x2="730" y2="553" stroke="#ffffff" stroke-width="0.7"/>
<path d="M783.4 531V536.4M782.7 532.6H784.1M782.7 535L784.1 534.2M784.3 533.4H787.3V536.1H784.3ZM784.1 531.3H787.3M785.7 531.3V533.4M788.7 531.4H792.4M789.1 531L789.8 532.4M791.9 531L791.2 532.4M788.9 532.9H792.1V536.1H788.9ZM788.9 534.5H792.1M794.4 531V536.4M793.7 532.6H795.1M795.3 533.4H798.3V536.1H795.3ZM795.1 531.3H798.3M796.7 531.3V533.4M799.6 531.4H803.3M799.4 533.2H803.6M799.4 536.1H803.6M800.6 533.2V536.1M802.4 533.2V536.1M799.9 534.7H803.1M805.5 531V536.4M804.7 532.6H806.4M806.6 533.4H809.3V536.1H806.6ZM806.4 531.3H809.3M807.8 531.3V533.4" stroke="#00ff00" stroke-width="0.7" fill="none"/>
<line x1="782" y1="537.5" x2="810" y2="537.5" stroke="#ffffff" stroke-width="0.8"/>
<line x1="782" y1="537.5" x2="772" y2="553" stroke="#ffffff" stroke-width="0.7"/>
<path d="M679.7 557V562M678.6 558.5H680.9M678.6 560.8L680.9 560M681.2 559.2H684.6V561.8H681.2ZM680.9 557.2H684.6M682.7 557.2V559.2M686.7 557V562M685.8 558.5H687.6M687.9 558H691.8M690 557L687.9 561.8M689.7 559.2L691.8 561.8M688.2 560H691.5M693.9 557V562M693 558.5H694.8M693 560.8L694.8 560M695.1 558H699M697.2 557L695.1 561.8M696.9 559.2L699 561.8M695.4 560H698.7M701.3 557V562M700.2 558.5H702.5M702.8 557.2H706.2M702.8 558.8H706.2M702.8 560.2H706.2M702.8 561.8H706.2M704.3 557V562M708.7 557V562M707.4 558.5H710.1M710.4 557.2H713.4M710.4 558.8H713.4M710.4 560.2H713.4M710.4 561.8H713.4M711.8 557V562" stroke="#00ff00" stroke-width="0.6" fill="none"/>
<line x1="678" y1="563" x2="716" y2="563" stroke="#ffffff" stroke-width="0.7"/>
<path d="M679.5 563V568M678.5 564.5H680.6M678.5 566.8L680.6 566M680.8 565.2H683.9V567.8H680.8ZM680.6 563.2H683.9M682.2 563.2V565.2M685.4 563.4H689.8M686 563L686.8 564.2M689.2 563L688.4 564.2M685.2 565H690M685.2 567.8H690M686.5 565V567.8M688.7 565V567.8M685.7 566.4H689.5M691.8 563.4H696.2M691.6 565H696.4M691.6 567.8H696.4M692.9 565V567.8M695.1 565V567.8M692.1 566.4H695.9M698.7 563V568M697.7 564.5H699.8M697.7 566.8L699.8 566M700 565.2H703.1V567.8H700ZM699.8 563.2H703.1M701.4 563.2V565.2M705.1 563V568M704.1 564.5H706.2M706.4 565.2H709.5V567.8H706.4ZM706.2 563.2H709.5M707.8 563.2V565.2" stroke="#00ff00" stroke-width="0.6" fill="none"/>
<line x1="678" y1="569" x2="712" y2="569" stroke="#ffffff" stroke-width="0.7"/>
<path d="M679.3 571V576M678.4 572.5H680.2M680.5 573.2H683.2V575.8H680.5ZM680.2 571.2H683.2M681.7 571.2V573.2M684.5 571.4H688.3M684.8 572.8H688V575.8H684.8ZM684.8 574.2H688M690.5 571V576M689.6 572.5H691.4M691.7 571.2H694.4M691.7 572.8H694.4M691.7 574.2H694.4M691.7 575.8H694.4M692.9 571V576M696.3 571V576M695.2 572.5H697.4M697.6 571.2H700M697.6 572.8H700M697.6 574.2H700M697.6 575.8H700M698.7 571V576M701.7 571V576M700.8 572.5H702.6M702.9 571.2H705.6M702.9 572.8H705.6M702.9 574.2H705.6M702.9 575.8H705.6M704.1 571V576" stroke="#00ff00" stroke-width="0.6" fill="none"/>
<line x1="678" y1="577" x2="708" y2="577" stroke="#ffffff" stroke-width="0.7"/>
<path d="M679.1 579V584M678.4 580.5H679.7M678.4 582.8L679.7 582M679.9 581.2H682.8V583.8H679.9ZM679.7 579.2H682.8M681.3 579.2V581.2M684.3 579V584M683.6 580.5H684.9M683.6 582.8L684.9 582M685.1 580H688M686.7 579L685.1 583.8M686.5 581.2L688 583.8M685.4 582H687.8M689.3 579.4H692.7M689.7 579L690.3 580.2M692.3 579L691.7 580.2M689.5 580.8H692.5V583.8H689.5ZM689.5 582.2H692.5M694.5 579.4H697.9M694.2 581H698.2M694.2 583.8H698.2M695.3 581V583.8M697.1 581V583.8M694.7 582.4H697.7M700.2 579V584M699.2 580.5H701.2M701.4 580H703.6M702.6 579L701.4 583.8M702.4 581.2L703.6 583.8M701.6 582H703.4" stroke="#00ff00" stroke-width="0.6" fill="none"/>
<line x1="678" y1="585" x2="706" y2="585" stroke="#ffffff" stroke-width="0.7"/>
<line x1="716" y1="563" x2="724" y2="590" stroke="#ffffff" stroke-width="0.7"/>
<line x1="712" y1="585" x2="718" y2="600" stroke="#ffffff" stroke-width="0.7"/>
<path d="M809.1 560V565M808.4 561.5H809.9M808.4 563.8L809.9 563M810.1 560.2H812.3M810.1 561.8H812.3M810.1 563.2H812.3M810.1 564.8H812.3M811.1 560V565M813.5 560.4H816.7M813.9 560L814.5 561.2M816.3 560L815.7 561.2M813.1 562.2H817.1M815.1 561V565M814.9 562.5L813.3 564.8M815.3 562.5L816.9 564.8M818.2 560.4H821.4M818.4 561.8H821.2V564.8H818.4ZM818.4 563.2H821.2M823.1 560V565M822.5 561.5H823.7M823.9 560.2H826.5M823.9 561.8H826.5M823.9 563.2H826.5M823.9 564.8H826.5M825.1 560V565M828.1 560V565M827.3 561.5H829M827.3 563.8L829 563M829.2 561H831.2M830.3 560L829.2 564.8M830.1 562.2L831.2 564.8M829.4 563H831" stroke="#00ff00" stroke-width="0.6" fill="none"/>
<line x1="806" y1="566" x2="833" y2="566" stroke="#ffffff" stroke-width="0.7"/>
<path d="M808.8 568.4H811.9M809 569.8H811.7V572.8H809ZM809 571.2H811.7M813.5 568.4H816.7M813.9 568L814.5 569.2M816.3 568L815.7 569.2M813.1 570.2H817.1M815.1 569V573M814.9 570.5L813.3 572.8M815.3 570.5L816.9 572.8M818.2 568.4H821.4M818.4 569.8H821.2V572.8H818.4ZM818.4 571.2H821.2M823.3 568V573M822.5 569.5H824M824.2 570.2H826.5V572.8H824.2ZM824 568.2H826.5M825.3 568.2V570.2M827.9 568V573M827.3 569.5H828.4M827.3 571.8L828.4 571M828.6 569H831.2M830 568L828.6 572.8M829.8 570.2L831.2 572.8M828.8 571H831" stroke="#00ff00" stroke-width="0.6" fill="none"/>
<line x1="806" y1="574" x2="833" y2="574" stroke="#ffffff" stroke-width="0.7"/>
<path d="M810.7 576.4H813.6M811.1 576L811.6 577.2M813.2 576L812.7 577.2M810.3 578.2H814M812.2 577V581M812 578.5L810.5 580.8M812.3 578.5L813.8 580.8M815 576.4H817.9M815.4 576L815.9 577.2M817.6 576L817 577.2M814.8 578H818.1M814.8 580.8H818.1M815.8 578V580.8M817.2 578V580.8M815.2 579.4H817.8M819.8 576V581M819 577.5H820.6M819 579.8L820.6 579M820.8 577H822.6M821.8 576L820.8 580.8M821.6 578.2L822.6 580.8M821 579H822.4M823.7 576.4H826.6M823.8 577.8H826.4V580.8H823.8ZM823.8 579.2H826.4M828.3 576V581M827.6 577.5H829M829.2 576.2H831.3M829.2 577.8H831.3M829.2 579.2H831.3M829.2 580.8H831.3M830.1 576V581" stroke="#00ff00" stroke-width="0.6" fill="none"/>
<line x1="808" y1="582" x2="833" y2="582" stroke="#ffffff" stroke-width="0.7"/>
<path d="M809.2 586V591M808.5 587.5H810M808.5 589.8L810 589M810.2 587H813.5M812 586L810.2 590.8M811.8 588.2L813.5 590.8M810.5 589H813.3M815 586.4H819M815.5 586L816.2 587.2M818.5 586L817.8 587.2M814.5 588.2H819.5M817 587V591M816.7 588.5L814.7 590.8M817.3 588.5L819.3 590.8M821 586.4H825M820.7 588H825.3M820.7 590.8H825.3M822 588V590.8M824 588V590.8M821.2 589.4H824.8" stroke="#00ff00" stroke-width="0.6" fill="none"/>
<line x1="806" y1="592" x2="828" y2="592" stroke="#ffffff" stroke-width="0.7"/>
<line x1="808" y1="565" x2="796" y2="588" stroke="#ffffff" stroke-width="0.7"/>
<path d="M701.2 653V658M700.5 654.5H702M700.5 656.8L702 656M702.2 653.2H705.5M702.2 654.8H705.5M702.2 656.2H705.5M702.2 657.8H705.5M703.8 653V658M707.4 653V658M706.5 654.5H708.4M708.6 653.2H711.5M708.6 654.8H711.5M708.6 656.2H711.5M708.6 657.8H711.5M710 653V658M713.2 653V658M712.5 654.5H714M712.5 656.8L714 656M714.2 654H717.5M716 653L714.2 657.8M715.8 655.2L717.5 657.8M714.5 656H717.3" stroke="#00ff00" stroke-width="0.6" fill="none"/>
<line x1="698" y1="659" x2="720" y2="659" stroke="#ffffff" stroke-width="0.7"/>
<path d="M800.8 653.4H804.2M801 654.8H804V657.8H801ZM801 656.2H804M805.8 653.4H809.2M806.2 653L806.9 654.2M808.8 653L808.1 654.2M805.6 655H809.4M805.6 657.8H809.4M806.7 655V657.8M808.3 655V657.8M806 656.4H809M811 653V658M810.4 654.5H811.7M811.9 654H814.6M813.3 653L811.9 657.8M813.1 655.2L814.6 657.8M812.1 656H814.4" stroke="#00ff00" stroke-width="0.6" fill="none"/>
<line x1="798" y1="659" x2="818" y2="659" stroke="#ffffff" stroke-width="0.7"/>
<path d="M675.8 716.4H681M676.4 715.7L677.4 717.8M680.3 715.7L679.4 717.8M675.4 719H681.3M675.4 723.5H681.3M677.1 719V723.5M679.7 719V723.5M676.1 721.3H680.7M683.5 716.4H688.8M683.2 719H689.1M683.2 723.5H689.1M684.8 719V723.5M687.4 719V723.5M683.9 721.3H688.4M692.1 715.7V723.9M690.6 718.2H693.6M693.9 719.4H697.2V723.5H693.9ZM693.6 716.1H697.2M695.4 716.1V719.4M699.7 715.7V723.9M698.4 718.2H700.9M698.4 721.9L700.9 720.6M701.2 717.3H704.9M703.2 715.7L701.2 723.5M702.9 719.4L704.9 723.5M701.5 720.6H704.6M707.4 715.7V723.9M706.2 718.2H708.7M706.2 721.9L708.7 720.6M709 716.1H712.7M709 718.6H712.7M709 721H712.7M709 723.5H712.7M710.7 715.7V723.9M714.6 716.4H719.8M715.2 715.7L716.2 717.8M719.2 715.7L718.2 717.8M714.9 718.6H719.5V723.5H714.9ZM714.9 721H719.5M722.4 716.4H727.6M723 715.7L724 717.8M726.9 715.7L725.9 717.8M722.7 718.6H727.2V723.5H722.7ZM722.7 721H727.2M730.4 715.7V723.9M729.5 718.2H731.4M731.7 719.4H736V723.5H731.7ZM731.4 716.1H736M733.7 716.1V719.4M738.5 715.7V723.9M737.2 718.2H739.7M737.2 721.9L739.7 720.6M740 717.3H743.8M742.1 715.7L740 723.5M741.7 719.4L743.8 723.5M740.4 720.6H743.4M746.5 715.7V723.9M745 718.2H747.9M745 721.9L747.9 720.6M748.3 717.3H751.5M750 715.7L748.3 723.5M749.7 719.4L751.5 723.5M748.6 720.6H751.2M753.4 716.4H758.6M754.1 715.7L755 717.8M758 715.7L757 717.8M752.8 719.4H759.3M756 717.3V723.9M755.7 719.8L753.1 723.5M756.3 719.8L759 723.5M761.2 716.4H766.4M761.5 718.6H766.1V723.5H761.5ZM761.5 721H766.1M768.9 716.4H774.2M768.6 719H774.5M768.6 723.5H774.5M770.2 719V723.5M772.8 719V723.5M769.3 721.3H773.8M777.3 715.7V723.9M776 718.2H778.5M778.9 716.1H782.6M778.9 718.6H782.6M778.9 721H782.6M778.9 723.5H782.6M780.5 715.7V723.9M784.8 715.7V723.9M783.8 718.2H785.8M783.8 721.9L785.8 720.6M786.1 719.4H790.3V723.5H786.1ZM785.8 716.1H790.3M788.1 716.1V719.4M792.2 716.4H797.4M792.9 715.7L793.9 717.8M796.8 715.7L795.8 717.8M791.9 719H797.8M791.9 723.5H797.8M793.5 719V723.5M796.1 719V723.5M792.6 721.3H797.1M800.8 715.7V723.9M799.3 718.2H802.3M802.6 717.3H805.9M804.4 715.7L802.6 723.5M804.1 719.4L805.9 723.5M802.9 720.6H805.5M807.8 716.4H813M807.4 719H813.3M807.4 723.5H813.3M809.1 719V723.5M811.7 719V723.5M808.1 721.3H812.6M815.5 716.4H820.7M816.2 715.7L817.1 717.8M820.1 715.7L819.1 717.8M815.8 718.6H820.4V723.5H815.8ZM815.8 721H820.4M823.3 716.4H828.5M823.9 715.7L824.9 717.8M827.8 715.7L826.9 717.8M823.6 718.6H828.2V723.5H823.6ZM823.6 721H828.2M831.6 715.7V723.9M830.4 718.2H832.9M830.4 721.9L832.9 720.6M833.2 716.1H836.9M833.2 718.6H836.9M833.2 721H836.9M833.2 723.5H836.9M834.9 715.7V723.9M839.1 715.7V723.9M838.2 718.2H840.1M840.4 719.4H844.7V723.5H840.4ZM840.1 716.1H844.7M842.4 716.1V719.4" stroke="#00ff00" stroke-width="0.7" fill="none"/>
<path d="M675.3 729.9H679.7M674.7 732.5H680.2M677.5 730.8V736.2M677.2 732.8L675 735.9M677.7 732.8L679.9 735.9M682.1 729.4V736.2M681.2 731.4H682.9M681.2 734.5L682.9 733.5M683.2 729.7H686.7M683.2 731.8H686.7M683.2 733.8H686.7M683.2 735.9H686.7M684.8 729.4V736.2M688.3 729.9H692.7M688.9 729.4L689.7 731.1M692.2 729.4L691.3 731.1M688.1 732.1H693M688.1 735.9H693M689.4 732.1V735.9M691.6 732.1V735.9M688.6 734H692.4M695.1 729.4V736.2M694.3 731.4H695.9M694.3 734.5L695.9 733.5M696.2 732.5H699.8V735.9H696.2ZM695.9 729.7H699.8M697.9 729.7V732.5M702.1 729.4V736.2M700.8 731.4H703.3M703.6 729.7H706.3M703.6 731.8H706.3M703.6 733.8H706.3M703.6 735.9H706.3M704.8 729.4V736.2M708.2 729.4V736.2M707.4 731.4H709M707.4 734.5L709 733.5M709.3 730.8H712.8M711.2 729.4L709.3 735.9M710.9 732.5L712.8 735.9M709.5 733.5H712.6M714.4 729.9H718.8M713.9 732.5H719.4M716.6 730.8V736.2M716.4 732.8L714.2 735.9M716.9 732.8L719.1 735.9M721 729.9H725.3M720.4 732.5H725.9M723.2 730.8V736.2M722.9 732.8L720.7 735.9M723.4 732.8L725.6 735.9M727.8 729.4V736.2M726.9 731.4H728.6M726.9 734.5L728.6 733.5M728.9 729.7H732.4M728.9 731.8H732.4M728.9 733.8H732.4M728.9 735.9H732.4M730.5 729.4V736.2M734.3 729.4V736.2M733.5 731.4H735.1M733.5 734.5L735.1 733.5M735.4 730.8H738.9M737.3 729.4L735.4 735.9M737 732.5L738.9 735.9M735.7 733.5H738.7M741.2 729.4V736.2M740 731.4H742.5M742.7 730.8H745.5M744.2 729.4L742.7 735.9M744 732.5L745.5 735.9M743 733.5H745.2M747.3 729.4V736.2M746.5 731.4H748.2M748.4 729.7H752M748.4 731.8H752M748.4 733.8H752M748.4 735.9H752M750.1 729.4V736.2M753.6 729.9H758M754.1 729.4L755 731.1M757.4 729.4L756.6 731.1M753 732.5H758.5M755.8 730.8V736.2M755.5 732.8L753.3 735.9M756.1 732.8L758.3 735.9M760.1 729.9H764.5M760.7 729.4L761.5 731.1M764 729.4L763.1 731.1M759.6 732.5H765.1M762.3 730.8V736.2M762 732.8L759.8 735.9M762.6 732.8L764.8 735.9M766.6 729.9H771M766.1 732.5H771.6M768.8 730.8V736.2M768.6 732.8L766.4 735.9M769.1 732.8L771.3 735.9M773.2 729.9H777.6M773.7 729.4L774.5 731.1M777 729.4L776.2 731.1M772.6 732.5H778.1M775.4 730.8V736.2M775.1 732.8L772.9 735.9M775.6 732.8L777.8 735.9M779.7 729.9H784.1M780.2 729.4L781.1 731.1M783.5 729.4L782.7 731.1M779.2 732.5H784.6M781.9 730.8V736.2M781.6 732.8L779.4 735.9M782.2 732.8L784.4 735.9M786.5 729.4V736.2M785.7 731.4H787.3M785.7 734.5L787.3 733.5M787.6 729.7H791.2M787.6 731.8H791.2M787.6 733.8H791.2M787.6 735.9H791.2M789.2 729.4V736.2M793.4 729.4V736.2M792.2 731.4H794.7M794.9 730.8H797.7M796.5 729.4L794.9 735.9M796.2 732.5L797.7 735.9M795.2 733.5H797.4M799.6 729.4V736.2M798.7 731.4H800.4M798.7 734.5L800.4 733.5M800.7 729.7H804.2M800.7 731.8H804.2M800.7 733.8H804.2M800.7 735.9H804.2M802.3 729.4V736.2M806.5 729.4V736.2M805.3 731.4H807.7M808 732.5H810.7V735.9H808ZM807.7 729.7H810.7M809.2 729.7V732.5M812.3 729.9H816.7M812.6 731.8H816.4V735.9H812.6ZM812.6 733.8H816.4M818.9 729.9H823.2M819.4 729.4L820.2 731.1M822.7 729.4L821.9 731.1M818.6 732.1H823.5M818.6 735.9H823.5M820 732.1V735.9M822.2 732.1V735.9M819.1 734H823M825.4 729.9H829.8M825.9 729.4L826.8 731.1M829.2 729.4L828.4 731.1M825.7 731.8H829.5V735.9H825.7ZM825.7 733.8H829.5M831.9 729.9H836.3M832.5 729.4L833.3 731.1M835.8 729.4L834.9 731.1M832.2 731.8H836V735.9H832.2ZM832.2 733.8H836M838.4 729.9H842.8M839 729.4L839.8 731.1M842.3 729.4L841.5 731.1M838.2 732.1H843.1M838.2 735.9H843.1M839.5 732.1V735.9M841.7 732.1V735.9M838.7 734H842.6" stroke="#00ff00" stroke-width="0.7" fill="none"/>
<path d="M675.3 742.4H680.6M675 745H680.9M675 749.5H680.9M676.6 745V749.5M679.3 745V749.5M675.6 747.3H680.2M683.2 742.4H688.4M683.8 741.7L684.8 743.8M687.8 741.7L686.8 743.8M682.5 745.4H689.1M685.8 743.3V749.9M685.5 745.8L682.8 749.5M686.1 745.8L688.8 749.5M691.3 741.7V749.9M690.4 744.2H692.3M690.4 747.9L692.3 746.6M692.7 743.3H697M695 741.7L692.7 749.5M694.6 745.4L697 749.5M693 746.6H696.6M698.9 742.4H704.2M699.5 741.7L700.5 743.8M703.5 741.7L702.5 743.8M699.2 744.6H703.8V749.5H699.2ZM699.2 747H703.8M706.7 742.4H712M707.4 741.7L708.4 743.8M711.4 741.7L710.4 743.8M706.4 745H712.3M706.4 749.5H712.3M708.1 745V749.5M710.7 745V749.5M707.1 747.3H711.7M714.9 741.7V749.9M713.9 744.2H715.9M713.9 747.9L715.9 746.6M716.2 742.1H720.5M716.2 744.6H720.5M716.2 747H720.5M716.2 749.5H720.5M718.2 741.7V749.9M722.8 741.7V749.9M721.8 744.2H723.8M724.1 745.4H728.4V749.5H724.1ZM723.8 742.1H728.4M726.1 742.1V745.4M731.1 741.7V749.9M729.7 744.2H732.6M733 742.1H736.3M733 744.6H736.3M733 747H736.3M733 749.5H736.3M734.4 741.7V749.9M738.2 742.4H743.5M738.8 741.7L739.8 743.8M742.8 741.7L741.8 743.8M737.5 745.4H744.1M740.8 743.3V749.9M740.5 745.8L737.8 749.5M741.1 745.8L743.8 749.5M746.9 741.7V749.9M745.4 744.2H748.3M748.7 745.4H752V749.5H748.7ZM748.3 742.1H752M750.2 742.1V745.4M753.9 742.4H759.2M753.6 745H759.5M753.6 749.5H759.5M755.2 745V749.5M757.9 745V749.5M754.2 747.3H758.9M762.1 741.7V749.9M761.1 744.2H763.1M761.1 747.9L763.1 746.6M763.4 745.4H767.7V749.5H763.4ZM763.1 742.1H767.7M765.4 742.1V745.4M769.6 742.4H774.9M769.3 745H775.2M769.3 749.5H775.2M770.9 745V749.5M773.6 745V749.5M769.9 747.3H774.6M778.3 741.7V749.9M776.8 744.2H779.8M780.1 742.1H783.4M780.1 744.6H783.4M780.1 747H783.4M780.1 749.5H783.4M781.6 741.7V749.9M786.2 741.7V749.9M784.7 744.2H787.7M784.7 747.9L787.7 746.6M788 745.4H791.3V749.5H788ZM787.7 742.1H791.3M789.5 742.1V745.4M793.5 741.7V749.9M792.5 744.2H794.5M792.5 747.9L794.5 746.6M794.9 743.3H799.1M797.2 741.7L794.9 749.5M796.8 745.4L799.1 749.5M795.2 746.6H798.8M801.7 741.7V749.9M800.4 744.2H802.9M803.2 743.3H807M805.3 741.7L803.2 749.5M805 745.4L807 749.5M803.6 746.6H806.7M808.9 742.4H814.2M809.6 741.7L810.6 743.8M813.5 741.7L812.6 743.8M809.3 744.6H813.9V749.5H809.3ZM809.3 747H813.9M816.8 742.4H822.1M817.1 744.6H821.7V749.5H817.1ZM817.1 747H821.7M824.6 742.4H829.9M825.3 741.7L826.3 743.8M829.3 741.7L828.3 743.8M824 745.4H830.6M827.3 743.3V749.9M827 745.8L824.3 749.5M827.6 745.8L830.3 749.5M833.3 741.7V749.9M831.8 744.2H834.8M831.8 747.9L834.8 746.6M835.1 743.3H838.4M837 741.7L835.1 749.5M836.6 745.4L838.4 749.5M835.5 746.6H838.1M841 741.7V749.9M839.7 744.2H842.2M839.7 747.9L842.2 746.6M842.5 745.4H846.3V749.5H842.5ZM842.2 742.1H846.3M844.3 742.1V745.4M848.6 741.7V749.9M847.6 744.2H849.5M847.6 747.9L849.5 746.6M849.9 742.1H854.2M849.9 744.6H854.2M849.9 747H854.2M849.9 749.5H854.2M851.9 741.7V749.9" stroke="#00ff00" stroke-width="0.7" fill="none"/>
<path d="M675.3 756.1H680.4M675.6 758.3H680.1V763.2H675.6ZM675.6 760.7H680.1M682.9 756.1H688.1M683.6 755.4L684.5 757.5M687.4 755.4L686.5 757.5M682.6 758.7H688.4M682.6 763.2H688.4M684.2 758.7V763.2M686.8 758.7V763.2M683.2 761H687.7M690.9 755.4V763.6M689.9 757.9H691.9M689.9 761.5L691.9 760.3M692.2 759.1H696.4V763.2H692.2ZM691.9 755.8H696.4M694.1 755.8V759.1M698.2 756.1H703.4M698.9 755.4L699.8 757.5M702.7 755.4L701.8 757.5M698.6 758.3H703.1V763.2H698.6ZM698.6 760.7H703.1M705.9 756.1H711M706.5 755.4L707.5 757.5M710.4 755.4L709.4 757.5M705.6 758.7H711.4M705.6 763.2H711.4M707.2 758.7V763.2M709.7 758.7V763.2M706.2 761H710.7M713.5 756.1H718.7M712.9 759.1H719.3M716.1 757V763.6M715.8 759.5L713.2 763.2M716.4 759.5L719 763.2M721.8 755.4V763.6M720.6 757.9H723M723.3 757H727M725.3 755.4L723.3 763.2M725 759.1L727 763.2M723.7 760.3H726.7M728.9 756.1H734M729.5 755.4L730.5 757.5M733.4 755.4L732.4 757.5M728.2 759.1H734.7M731.4 757V763.6M731.1 759.5L728.5 763.2M731.8 759.5L734.3 763.2M737.1 755.4V763.6M735.9 757.9H738.3M735.9 761.5L738.3 760.3M738.6 757H742.3M740.6 755.4L738.6 763.2M740.3 759.1L742.3 763.2M739 760.3H742M744.2 756.1H749.3M744.8 755.4L745.8 757.5M748.7 755.4L747.7 757.5M743.9 758.7H749.6M743.9 763.2H749.6M745.5 758.7V763.2M748 758.7V763.2M744.5 761H749M752.4 755.4V763.6M751.2 757.9H753.6M751.2 761.5L753.6 760.3M754 755.8H757.6M754 758.3H757.6M754 760.7H757.6M754 763.2H757.6M755.6 755.4V763.6M759.5 756.1H764.6M759.8 758.3H764.3V763.2H759.8ZM759.8 760.7H764.3" stroke="#00ff00" stroke-width="0.7" fill="none"/>
<path d="M676.3 769.7H681.7M676 772.3H682.1M676 776.9H682.1M677.7 772.3V776.9M680.4 772.3V776.9M676.7 774.6H681.4M684.4 769.7H689.8M684.7 771.9H689.4V776.9H684.7ZM684.7 774.4H689.4M692.4 769.7H697.8M692.7 771.9H697.5V776.9H692.7ZM692.7 774.4H697.5M701.1 769V777.3M699.8 771.5H702.3M699.8 775.2L702.3 774M702.7 770.7H706.5M704.8 769L702.7 776.9M704.4 772.7L706.5 776.9M703 774H706.2M708.8 769V777.3M707.8 771.5H709.9M707.8 775.2L709.9 774M710.2 770.7H714.6M712.6 769L710.2 776.9M712.2 772.7L714.6 776.9M710.5 774H714.2M716.5 769.7H722M716.2 772.3H722.3M716.2 776.9H722.3M717.9 772.3V776.9M720.6 772.3V776.9M716.9 774.6H721.6M724.6 769.7H730M723.9 772.7H730.7M727.3 770.7V777.3M727 773.1L724.3 776.9M727.6 773.1L730.3 776.9M733 769V777.3M732 771.5H734M732 775.2L734 774M734.3 772.7H738.7V776.9H734.3ZM734 769.4H738.7M736.4 769.4V772.7M740.7 769.7H746.1M741 771.9H745.8V776.9H741ZM741 774.4H745.8M748.7 769.7H754.1M749.4 769L750.4 771.1M753.5 769L752.4 771.1M749.1 771.9H753.8V776.9H749.1ZM749.1 774.4H753.8M756.8 769.7H762.2M756.4 772.3H762.5M756.4 776.9H762.5M758.1 772.3V776.9M760.8 772.3V776.9M757.1 774.6H761.8M765.2 769V777.3M764.1 771.5H766.2M764.1 775.2L766.2 774M766.5 770.7H770.9M768.9 769L766.5 776.9M768.5 772.7L770.9 776.9M766.8 774H770.6M773.5 769V777.3M772.2 771.5H774.8M772.2 775.2L774.8 774M775.1 772.7H778.9V776.9H775.1ZM774.8 769.4H778.9M776.9 769.4V772.7M780.9 769.7H786.3M781.6 769L782.6 771.1M785.6 769L784.6 771.1M781.2 771.9H786V776.9H781.2ZM781.2 774.4H786M789 769.7H794.4M789.6 769L790.6 771.1M793.7 769L792.7 771.1M789.3 771.9H794V776.9H789.3ZM789.3 774.4H794M797.8 769V777.3M796.3 771.5H799.4M796.3 775.2L799.4 774M799.7 770.7H803.1M801.6 769L799.7 776.9M801.2 772.7L803.1 776.9M800 774H802.7M805 769.7H810.5M805.7 769L806.7 771.1M809.8 769L808.8 771.1M804.4 772.7H811.1M807.8 770.7V777.3M807.4 773.1L804.7 776.9M808.1 773.1L810.8 776.9M813.1 769.7H818.5M813.8 769L814.8 771.1M817.8 769L816.8 771.1M813.4 771.9H818.2V776.9H813.4ZM813.4 774.4H818.2M821.1 769.7H826.5M820.8 772.3H826.9M820.8 776.9H826.9M822.5 772.3V776.9M825.2 772.3V776.9M821.5 774.6H826.2M829.2 769.7H834.6M828.5 772.7H835.3M831.9 770.7V777.3M831.5 773.1L828.8 776.9M832.2 773.1L834.9 776.9M837.2 769.7H842.6M837.9 769L838.9 771.1M842 769L840.9 771.1M837.6 771.9H842.3V776.9H837.6ZM837.6 774.4H842.3M845.3 769.7H850.7M845.9 769L847 771.1M850 769L849 771.1M844.6 772.7H851.4M848 770.7V777.3M847.6 773.1L844.9 776.9M848.3 773.1L851 776.9" stroke="#00ff00" stroke-width="0.7" fill="none"/>
<path d="M676.6 783.1H680.4M676.1 785.2H680.9M678.5 783.8V788.2M678.3 785.5L676.3 787.9M678.7 785.5L680.7 787.9M682.8 782.7V788.2M681.9 784.4H683.7M681.9 786.8L683.7 786M684 785.2H686.7V787.9H684ZM683.7 783H686.7M685.2 783V785.2M688.2 783.1H692M687.7 785.2H692.5M690.1 783.8V788.2M689.9 785.5L687.9 787.9M690.3 785.5L692.3 787.9M694 783.1H697.8M694.2 784.6H697.6V787.9H694.2ZM694.2 786.3H697.6" stroke="#00ff00" stroke-width="0.7" fill="none"/>
<path d="M676.8 792.3V800.5M675.6 794.8H678M678.4 796H682V800.1H678.4ZM678 792.7H682M680 792.7V796M684.2 792.3V800.5M683.2 794.8H685.1M683.2 798.5L685.1 797.2M685.5 793.9H689.6M687.7 792.3L685.5 800.1M687.4 796L689.6 800.1M685.8 797.2H689.3M691.5 793H696.6M691.8 795.2H696.3V800.1H691.8ZM691.8 797.6H696.3M699.1 793H704.2M698.8 795.6H704.5M698.8 800.1H704.5M700.4 795.6V800.1M702.9 795.6V800.1M699.4 797.9H703.9M706.7 793H711.8M706.4 795.6H712.1M706.4 800.1H712.1M708 795.6V800.1M710.5 795.6V800.1M707 797.9H711.5M714.3 793H719.4M715 792.3L715.9 794.3M718.8 792.3L717.8 794.3M714 795.6H719.8M714 800.1H719.8M715.6 795.6V800.1M718.2 795.6V800.1M714.6 797.9H719.1M722.7 792.3V800.5M721.3 794.8H724.2M721.3 798.5L724.2 797.2M724.5 792.7H727.7M724.5 795.2H727.7M724.5 797.6H727.7M724.5 800.1H727.7M725.9 792.3V800.5M729.6 793H734.7M728.9 796H735.3M732.1 793.9V800.5M731.8 796.4L729.2 800.1M732.4 796.4L735 800.1M737.2 793H742.3M737.8 792.3L738.8 794.3M741.6 792.3L740.7 794.3M737.5 795.2H742V800.1H737.5ZM737.5 797.6H742M745.1 792.3V800.5M744.1 794.8H746.1M744.1 798.5L746.1 797.2M746.4 792.7H750.5M746.4 795.2H750.5M746.4 797.6H750.5M746.4 800.1H750.5M748.3 792.3V800.5M752.4 793H757.5M753 792.3L754 794.3M756.9 792.3L755.9 794.3M752.7 795.2H757.2V800.1H752.7ZM752.7 797.6H757.2M760.8 792.3V800.5M759.4 794.8H762.3M759.4 798.5L762.3 797.2M762.6 793.9H765.8M764.3 792.3L762.6 800.1M764 796L765.8 800.1M762.9 797.2H765.5M767.6 793H772.8M767.3 795.6H773.1M767.3 800.1H773.1M768.9 795.6V800.1M771.5 795.6V800.1M768 797.9H772.4" stroke="#00ff00" stroke-width="0.7" fill="none"/>
<path d="M653.4 717.1H657.9M654 716.5L654.8 718.2M657.3 716.5L656.5 718.2M653.1 719.3H658.2M653.1 723.1H658.2M654.5 719.3V723.1M656.8 719.3V723.1M653.7 721.3H657.6" stroke="#00ff00" stroke-width="0.7" fill="none"/>
<text x="660" y="724" font-family="Liberation Sans" font-size="9" fill="#00ff00" font-weight="normal" text-anchor="start">:</text>
<text x="664.5" y="724.5" font-family="Liberation Serif" font-size="11" fill="#00ff00" font-weight="normal" text-anchor="start" textLength="9" lengthAdjust="spacingAndGlyphs">1.</text>
<text x="665.5" y="778" font-family="Liberation Serif" font-size="11" fill="#00ff00" font-weight="normal" text-anchor="start" textLength="9" lengthAdjust="spacingAndGlyphs">2.</text>
<text x="665.5" y="801.5" font-family="Liberation Serif" font-size="11" fill="#00ff00" font-weight="normal" text-anchor="start" textLength="9" lengthAdjust="spacingAndGlyphs">3.</text>
<rect x="789" y="741" width="33" height="10" fill="#000"/>
<text x="789" y="749.9" font-family="Liberation Serif" font-size="10" fill="#00ff00" font-weight="normal" text-anchor="start" textLength="33" lengthAdjust="spacingAndGlyphs">20mm</text>
<rect x="700" y="755" width="35" height="9" fill="#000"/>
<text x="700" y="763.6" font-family="Liberation Serif" font-size="10" fill="#00ff00" font-weight="normal" text-anchor="start" textLength="34" lengthAdjust="spacingAndGlyphs">30mm</text>
<rect x="745" y="769" width="43" height="9" fill="#000"/>
<text x="745" y="777.3" font-family="Liberation Serif" font-size="10" fill="#00ff00" font-weight="normal" text-anchor="start" textLength="42" lengthAdjust="spacingAndGlyphs">100mm</text>
<rect x="748" y="792" width="28" height="9" fill="#000"/>
<text x="749" y="800.5" font-family="Liberation Serif" font-size="10" fill="#00ff00" font-weight="normal" text-anchor="start" textLength="26" lengthAdjust="spacingAndGlyphs">S312.</text>
<rect x="700" y="729" width="16" height="8" fill="#000"/>
<text x="701" y="736.2" font-family="Liberation Sans" font-size="10" fill="#00ff00" font-weight="normal" text-anchor="start" textLength="15" lengthAdjust="spacingAndGlyphs">C20</text>
<path d="M666.2 822.4V837.5M664.2 826.9H668.2M664.2 833.7L668.2 831.5M668.7 823.2H673.2M668.7 827.7H673.2M668.7 832.2H673.2M668.7 836.7H673.2M670.7 822.4V837.5M675.8 823.6H683M676.2 827.7H682.6V836.7H676.2ZM676.2 832.2H682.6M686.5 823.6H693.7M686.1 828.4H694.2M686.1 836.7H694.2M688.3 828.4V836.7M691.9 828.4V836.7M687 832.7H693.3M698.1 822.4V837.5M696.4 826.9H699.8M700.2 823.2H705.4M700.2 827.7H705.4M700.2 832.2H705.4M700.2 836.7H705.4M702.6 822.4V837.5M708 823.6H715.2M708.9 822.4L710.2 826.2M714.3 822.4L712.9 826.2M707.5 828.4H715.6M707.5 836.7H715.6M709.8 828.4V836.7M713.4 828.4V836.7M708.4 832.7H714.7M719.8 822.4V837.5M717.8 826.9H721.9M717.8 833.7L721.9 831.5M722.3 829.2H726.8V836.7H722.3ZM721.9 823.2H726.8M724.3 823.2V829.2M729.9 822.4V837.5M728.5 826.9H731.2M728.5 833.7L731.2 831.5M731.7 825.4H737.6M734.9 822.4L731.7 836.7M734.4 829.2L737.6 836.7M732.1 831.5H737.1M740.2 823.6H747.4M741.1 822.4L742.4 826.2M746.5 822.4L745.1 826.2M739.3 829.2H748.3M743.8 825.4V837.5M743.3 830L739.7 836.7M744.2 830L747.8 836.7M751.7 822.4V837.5M750 826.9H753.4M750 833.7L753.4 831.5M753.9 823.2H759M753.9 827.7H759M753.9 832.2H759M753.9 836.7H759M756.2 822.4V837.5M761.6 823.6H768.8M762.5 822.4L763.9 826.2M767.9 822.4L766.6 826.2M761.2 828.4H769.3M761.2 836.7H769.3M763.4 828.4V836.7M767 828.4V836.7M762.1 832.7H768.4M772.4 823.6H779.6M773.3 822.4L774.6 826.2M778.7 822.4L777.3 826.2M771.9 828.4H780M771.9 836.7H780M774.2 828.4V836.7M777.8 828.4V836.7M772.8 832.7H779.1M783.1 823.6H790.3M783.5 827.7H789.9V836.7H783.5ZM783.5 832.2H789.9M793.8 823.6H801M794.3 827.7H800.6V836.7H794.3ZM794.3 832.2H800.6" stroke="#00ff00" stroke-width="1" fill="none"/>
<line x1="662" y1="841.6" x2="834.3" y2="841.6" stroke="#00ff00" stroke-width="2.6"/>
<text x="749.5" y="650.5" font-family="Liberation Mono" font-size="10" fill="#4c5468" font-weight="normal" text-anchor="start" textLength="278" lengthAdjust="spacingAndGlyphs" opacity="0.9">WebCadTr.: www.webcadsa.com  MxDraw: www.mxdraw.com</text>
<line x1="967.5" y1="579.3" x2="967.5" y2="675.3" stroke="#e0e0e0" stroke-width="1.1"/>
<line x1="1002.6" y1="579.3" x2="1002.6" y2="675.3" stroke="#e0e0e0" stroke-width="1.1"/>
<path d="M962.5 579.3 L982 579.3 L984 576.8 L986 581.8 L988 579.3 L1005.6 579.3" stroke="#e0e0e0" stroke-width="1.1" fill="none"/>
<path d="M962.5 675.3 L982 675.3 L984 672.8 L986 677.8 L988 675.3 L1005.6 675.3" stroke="#e0e0e0" stroke-width="1.1" fill="none"/>
<line x1="959.7" y1="611.9" x2="1009.4" y2="611.9" stroke="#ffff00" stroke-width="1.2"/>
<line x1="959.7" y1="615.7" x2="1009.4" y2="615.7" stroke="#ffff00" stroke-width="1.2"/>
<line x1="961.7" y1="613.8" x2="1007.4" y2="613.8" stroke="#f0f0c0" stroke-width="1.3" stroke-dasharray="1 1.6"/>
<line x1="959.7" y1="640.8" x2="1009.4" y2="640.8" stroke="#ffff00" stroke-width="1.2"/>
<line x1="959.7" y1="644.6" x2="1009.4" y2="644.6" stroke="#ffff00" stroke-width="1.2"/>
<line x1="961.7" y1="642.7" x2="1007.4" y2="642.7" stroke="#f0f0c0" stroke-width="1.3" stroke-dasharray="1 1.6"/>
<line x1="959.7" y1="608.5" x2="959.7" y2="617.8" stroke="#ffff00" stroke-width="2.2"/>
<line x1="1009.4" y1="608.5" x2="1009.4" y2="617.8" stroke="#ffff00" stroke-width="2.2"/>
<line x1="959.7" y1="639.4" x2="959.7" y2="648" stroke="#ffff00" stroke-width="2.2"/>
<line x1="1009.4" y1="639.4" x2="1009.4" y2="648" stroke="#ffff00" stroke-width="2.2"/>
<line x1="985" y1="604.5" x2="985" y2="617.8" stroke="#e0e0e0" stroke-width="1.2"/>
<line x1="985" y1="639.4" x2="985" y2="654" stroke="#e0e0e0" stroke-width="1.2"/>
<line x1="900.2" y1="617.8" x2="1060.1" y2="617.8" stroke="#ffff00" stroke-width="1.5"/>
<line x1="900.2" y1="639.4" x2="1060.1" y2="639.4" stroke="#ffff00" stroke-width="1.5"/>
<line x1="900.2" y1="619.1" x2="1060.1" y2="619.1" stroke="#e8e8b0" stroke-width="1.2" stroke-dasharray="1 1.8"/>
<line x1="900.2" y1="638.1" x2="1060.1" y2="638.1" stroke="#e8e8b0" stroke-width="1.2" stroke-dasharray="1 1.8"/>
<path d="M902.2 617.8 Q897.2 625.6 901.2 628.6 Q897.2 631.6 902.2 639.4 M1058.1 617.8 Q1063.1 625.6 1059.1 628.6 Q1063.1 631.6 1058.1 639.4" stroke="#ddd" stroke-width="1" fill="none"/>
<line x1="887.8" y1="628.7" x2="1066" y2="628.7" stroke="#00b000" stroke-width="1.8"/>
<line x1="919" y1="614.4" x2="919" y2="642.2" stroke="#ff0000" stroke-width="2.2"/>
<line x1="945.4" y1="614.4" x2="945.4" y2="642.2" stroke="#ff0000" stroke-width="2.2"/>
<line x1="919" y1="618.9" x2="945.4" y2="638.2" stroke="#e00000" stroke-width="1"/>
<line x1="919" y1="638.2" x2="945.4" y2="618.9" stroke="#e00000" stroke-width="1"/>
<line x1="1018.5" y1="614.4" x2="1018.5" y2="642.2" stroke="#ff0000" stroke-width="2.2"/>
<line x1="1045" y1="614.4" x2="1045" y2="642.2" stroke="#ff0000" stroke-width="2.2"/>
<line x1="1018.5" y1="618.9" x2="1045" y2="638.2" stroke="#e00000" stroke-width="1"/>
<line x1="1018.5" y1="638.2" x2="1045" y2="618.9" stroke="#e00000" stroke-width="1"/>
<line x1="1148.6" y1="582" x2="1148.6" y2="677.6" stroke="#e0e0e0" stroke-width="1.1"/>
<line x1="1183.9" y1="582" x2="1183.9" y2="677.6" stroke="#e0e0e0" stroke-width="1.1"/>
<path d="M1143.6 582 L1163.2 582 L1165.2 579.5 L1167.2 584.5 L1169.2 582 L1186.9 582" stroke="#e0e0e0" stroke-width="1.1" fill="none"/>
<path d="M1143.6 677.6 L1163.2 677.6 L1165.2 675.1 L1167.2 680.1 L1169.2 677.6 L1186.9 677.6" stroke="#e0e0e0" stroke-width="1.1" fill="none"/>
<line x1="1141.3" y1="614.8" x2="1192.6" y2="614.8" stroke="#ffff00" stroke-width="1.2"/>
<line x1="1141.3" y1="618.6" x2="1192.6" y2="618.6" stroke="#ffff00" stroke-width="1.2"/>
<line x1="1143.3" y1="616.7" x2="1190.6" y2="616.7" stroke="#f0f0c0" stroke-width="1.3" stroke-dasharray="1 1.6"/>
<line x1="1141.3" y1="643.9" x2="1192.6" y2="643.9" stroke="#ffff00" stroke-width="1.2"/>
<line x1="1141.3" y1="647.7" x2="1192.6" y2="647.7" stroke="#ffff00" stroke-width="1.2"/>
<line x1="1143.3" y1="645.8" x2="1190.6" y2="645.8" stroke="#f0f0c0" stroke-width="1.3" stroke-dasharray="1 1.6"/>
<line x1="1141.3" y1="611.4" x2="1141.3" y2="620.6" stroke="#ffff00" stroke-width="2.2"/>
<line x1="1192.6" y1="611.4" x2="1192.6" y2="620.6" stroke="#ffff00" stroke-width="2.2"/>
<line x1="1141.3" y1="641.5" x2="1141.3" y2="651.1" stroke="#ffff00" stroke-width="2.2"/>
<line x1="1192.6" y1="641.5" x2="1192.6" y2="651.1" stroke="#ffff00" stroke-width="2.2"/>
<line x1="1166.2" y1="607.4" x2="1166.2" y2="620.6" stroke="#e0e0e0" stroke-width="1.2"/>
<line x1="1166.2" y1="641.5" x2="1166.2" y2="657.1" stroke="#e0e0e0" stroke-width="1.2"/>
<line x1="1126.9" y1="620.6" x2="1243.6" y2="620.6" stroke="#ffff00" stroke-width="1.5"/>
<line x1="1126.9" y1="641.5" x2="1243.6" y2="641.5" stroke="#ffff00" stroke-width="1.5"/>
<line x1="1126.9" y1="621.9" x2="1243.6" y2="621.9" stroke="#e8e8b0" stroke-width="1.2" stroke-dasharray="1 1.8"/>
<line x1="1126.9" y1="640.2" x2="1243.6" y2="640.2" stroke="#e8e8b0" stroke-width="1.2" stroke-dasharray="1 1.8"/>
<path d="M1128.9 620.6 Q1123.9 628 1127.9 631 Q1123.9 634 1128.9 641.5 M1241.6 620.6 Q1246.6 628 1242.6 631 Q1246.6 634 1241.6 641.5" stroke="#ddd" stroke-width="1" fill="none"/>
<line x1="1117.3" y1="630.7" x2="1248.4" y2="630.7" stroke="#00b000" stroke-width="1.8"/>
<line x1="1200.3" y1="617.4" x2="1200.3" y2="643.9" stroke="#ff0000" stroke-width="2.2"/>
<line x1="1227.2" y1="617.4" x2="1227.2" y2="643.9" stroke="#ff0000" stroke-width="2.2"/>
<line x1="1200.3" y1="621.9" x2="1227.2" y2="639.9" stroke="#e00000" stroke-width="1"/>
<line x1="1200.3" y1="639.9" x2="1227.2" y2="621.9" stroke="#e00000" stroke-width="1"/>
<line x1="957" y1="603.5" x2="971" y2="603.5" stroke="#ffffff" stroke-width="0.9"/>
<path d="M959 608 L964 603.5 L969 608 Z" stroke="#ffffff" stroke-width="0.9" fill="none"/>
<text x="959.5" y="602.5" font-family="Liberation Serif" font-size="8" fill="#ffffff" font-weight="normal" text-anchor="start" textLength="9" lengthAdjust="spacingAndGlyphs">50</text>
<line x1="999.5" y1="603.5" x2="1013.5" y2="603.5" stroke="#ffffff" stroke-width="0.9"/>
<path d="M1001.5 608 L1006.5 603.5 L1011.5 608 Z" stroke="#ffffff" stroke-width="0.9" fill="none"/>
<text x="1002" y="602.5" font-family="Liberation Serif" font-size="8" fill="#ffffff" font-weight="normal" text-anchor="start" textLength="9" lengthAdjust="spacingAndGlyphs">50</text>
<line x1="1138.3" y1="606.5" x2="1152.3" y2="606.5" stroke="#ffffff" stroke-width="0.9"/>
<path d="M1140.3 611 L1145.3 606.5 L1150.3 611 Z" stroke="#ffffff" stroke-width="0.9" fill="none"/>
<text x="1140.8" y="605.5" font-family="Liberation Serif" font-size="8" fill="#ffffff" font-weight="normal" text-anchor="start" textLength="9" lengthAdjust="spacingAndGlyphs">50</text>
<line x1="1181.4" y1="606.5" x2="1195.4" y2="606.5" stroke="#ffffff" stroke-width="0.9"/>
<path d="M1183.4 611 L1188.4 606.5 L1193.4 611 Z" stroke="#ffffff" stroke-width="0.9" fill="none"/>
<text x="1183.9" y="605.5" font-family="Liberation Serif" font-size="8" fill="#ffffff" font-weight="normal" text-anchor="start" textLength="9" lengthAdjust="spacingAndGlyphs">50</text>
<path d="M983.2 590V600M982.5 593H984M984.2 594.5H987.5V599.5H984.2ZM984 590.5H987.5M985.8 590.5V594.5" stroke="#ffffff" stroke-width="0.8" fill="none"/>
<path d="M1164.2 593V603M1163.5 596H1165M1165.2 597.5H1168.5V602.5H1165.2ZM1165 593.5H1168.5M1166.8 593.5V597.5" stroke="#ffffff" stroke-width="0.8" fill="none"/>
<path d="M935.5 574.5H938.9M935.7 576.1H938.7V579.7H935.7ZM935.7 577.9H938.7M941.1 574V580M940.1 575.8H942M940.1 578.5L942 577.6M942.2 575.2H944.3M943.4 574L942.2 579.7M943.2 576.7L944.3 579.7M942.4 577.6H944.1M945.6 574.5H948.9M945.1 576.7H949.4M947.2 575.2V580M947 577L945.4 579.7M947.5 577L949.1 579.7M950.6 574.5H954M950.4 576.4H954.2M950.4 579.7H954.2M951.4 576.4V579.7M953.1 576.4V579.7M950.8 578.1H953.7M956.1 574V580M955.2 575.8H957.1M955.2 578.5L957.1 577.6M957.3 576.7H959.4V579.7H957.3ZM957.1 574.3H959.4M958.2 574.3V576.7" stroke="#00ff00" stroke-width="0.7" fill="none"/>
<path d="M1010.5 574.5H1013.7M1010.7 576.1H1013.5V579.7H1010.7ZM1010.7 577.9H1013.5M1015.6 574V580M1014.9 575.8H1016.4M1014.9 578.5L1016.4 577.6M1016.6 576.7H1018.9V579.7H1016.6ZM1016.4 574.3H1018.9M1017.6 574.3V576.7M1020 574.5H1023.3M1020.4 574L1021 575.5M1022.9 574L1022.3 575.5M1019.6 576.7H1023.7M1021.6 575.2V580M1021.4 577L1019.8 579.7M1021.9 577L1023.5 579.7M1025.2 574V580M1024.4 575.8H1025.9M1024.4 578.5L1025.9 577.6M1026.1 576.7H1028.4V579.7H1026.1ZM1025.9 574.3H1028.4M1027.2 574.3V576.7M1029.6 574.5H1032.8M1029.8 576.1H1032.6V579.7H1029.8ZM1029.8 577.9H1032.6" stroke="#00ff00" stroke-width="0.7" fill="none"/>
<path d="M954.2 586.9V592.7M953.2 588.6H955.2M955.4 587.2H957.6M955.4 588.9H957.6M955.4 590.7H957.6M955.4 592.4H957.6M956.4 586.9V592.7M958.9 587.4H962.4M959.4 586.9L960 588.4M962 586.9L961.3 588.4M958.5 589.5H962.9M960.7 588.1V592.7M960.5 589.8L958.7 592.4M960.9 589.8L962.7 592.4" stroke="#00ff00" stroke-width="0.7" fill="none"/>
<line x1="948" y1="594" x2="975" y2="602" stroke="#00ff00" stroke-width="0.8"/>
<line x1="948" y1="594" x2="964" y2="594" stroke="#00ff00" stroke-width="0.8"/>
<path d="M940.8 603H943.9M941.2 602.6L941.7 603.9M943.5 602.6L942.9 603.9M940.4 604.9H944.3M942.3 603.6V607.7M942.1 605.2L940.6 607.4M942.5 605.2L944.1 607.4M945.4 603H948.5M945.8 602.6L946.4 603.9M948.1 602.6L947.6 603.9M945 604.9H948.9M947 603.6V607.7M946.8 605.2L945.2 607.4M947.2 605.2L948.7 607.4" stroke="#00ff00" stroke-width="0.7" fill="none"/>
<line x1="938" y1="609" x2="960" y2="617" stroke="#00ff00" stroke-width="0.8"/>
<line x1="938" y1="609" x2="950" y2="609" stroke="#00ff00" stroke-width="0.8"/>
<path d="M1009.4 591.3H1013.3M1009.7 593.1H1013.1V597H1009.7ZM1009.7 595H1013.1M1015.2 591.3H1019.1M1014.7 593.7H1019.5M1017.1 592.1V597.3M1016.9 594L1015 597M1017.4 594L1019.3 597" stroke="#00ff00" stroke-width="0.7" fill="none"/>
<line x1="1007" y1="598.5" x2="1022" y2="598.5" stroke="#00ff00" stroke-width="0.8"/>
<line x1="1007" y1="598.5" x2="992" y2="612" stroke="#00ff00" stroke-width="0.8"/>
<path d="M1039.5 593.3H1042.9M1039.9 592.7L1040.6 594.4M1042.5 592.7L1041.9 594.4M1039.3 595.5H1043.1M1039.3 599.3H1043.1M1040.4 595.5V599.3M1042.1 595.5V599.3M1039.7 597.4H1042.7M1044.6 593.3H1047.9M1045 592.7L1045.6 594.4M1047.5 592.7L1046.9 594.4M1044.3 595.5H1048.2M1044.3 599.3H1048.2M1045.4 595.5V599.3M1047.1 595.5V599.3M1044.8 597.4H1047.7M1050 592.7V599.6M1049.2 594.8H1050.8M1051 593H1053.4M1051 595.1H1053.4M1051 597.2H1053.4M1051 599.3H1053.4M1052.1 592.7V599.6M1054.6 593.3H1058M1055 592.7L1055.7 594.4M1057.6 592.7L1057 594.4M1054.8 595.1H1057.8V599.3H1054.8ZM1054.8 597.2H1057.8M1059.9 592.7V599.6M1059.2 594.8H1060.5M1060.7 595.8H1063.5V599.3H1060.7ZM1060.5 593H1063.5M1062 593V595.8M1064.7 593.3H1068.1M1065.1 592.7L1065.7 594.4M1067.7 592.7L1067 594.4M1064.3 595.8H1068.5M1066.4 594.1V599.6M1066.2 596.2L1064.5 599.3M1066.6 596.2L1068.3 599.3" stroke="#00ff00" stroke-width="0.7" fill="none"/>
<line x1="1036" y1="601" x2="1070" y2="601" stroke="#00ff00" stroke-width="0.8"/>
<line x1="1036" y1="601" x2="1012" y2="614" stroke="#ffffff" stroke-width="0.8"/>
<path d="M888.9 648.4V655.3M887.4 650.5H890.4M887.4 653.6L890.4 652.5M890.8 651.5H894.2V655H890.8ZM890.4 648.7H894.2M892.3 648.7V651.5M896.2 649H901.7M896.9 648.4L897.9 650.1M901 648.4L900 650.1M896.5 650.8H901.3V655H896.5ZM896.5 652.9H901.3" stroke="#00ff00" stroke-width="0.7" fill="none"/>
<line x1="870" y1="657" x2="918" y2="657" stroke="#00ff00" stroke-width="0.9"/>
<line x1="918" y1="657" x2="935" y2="630" stroke="#ffffff" stroke-width="0.8"/>
<text x="870.4" y="665" font-family="Liberation Serif" font-size="8" fill="#00ff00" font-weight="normal" text-anchor="start">(</text>
<path d="M874.3 659.3H877.7M874.8 658.8L875.4 660.2M877.3 658.8L876.7 660.2M874.1 661.1H878M874.1 664.3H878M875.2 661.1V664.3M876.9 661.1V664.3M874.5 662.7H877.5M879.6 658.8V664.6M879 660.5H880.3M879 663.1L880.3 662.3M880.5 659.1H883.3M880.5 660.8H883.3M880.5 662.6H883.3M880.5 664.3H883.3M881.8 658.8V664.6M885 658.8V664.6M884.1 660.5H886M884.1 663.1L886 662.3M886.2 661.4H888.3V664.3H886.2ZM886 659.1H888.3M887.2 659.1V661.4M889.8 658.8V664.6M889.2 660.5H890.4M890.7 659.1H893.4M890.7 660.8H893.4M890.7 662.6H893.4M890.7 664.3H893.4M891.9 658.8V664.6M894.7 659.3H898.1M895.1 658.8L895.7 660.2M897.7 658.8L897 660.2M894.2 661.4H898.5M896.4 660V664.6M896.2 661.7L894.5 664.3M896.6 661.7L898.3 664.3M899.8 659.3H903.2M900.2 658.8L900.8 660.2M902.7 658.8L902.1 660.2M900 660.8H903V664.3H900ZM900 662.6H903" stroke="#00ff00" stroke-width="0.7" fill="none"/>
<text x="904" y="665" font-family="Liberation Serif" font-size="8" fill="#00ff00" font-weight="normal" text-anchor="start" textLength="15" lengthAdjust="spacingAndGlyphs">MPa)</text>
<path d="M949.1 651.2H952.5M948.8 653H952.8M948.8 656.2H952.8M949.9 653V656.2M951.7 653V656.2M949.3 654.6H952.3M954.5 650.7V656.5M953.8 652.4H955.1M955.3 651H958.2M955.3 652.7H958.2M955.3 654.5H958.2M955.3 656.2H958.2M956.7 650.7V656.5" stroke="#00ff00" stroke-width="0.7" fill="none"/>
<line x1="945" y1="658" x2="960" y2="658" stroke="#00ff00" stroke-width="0.8"/>
<line x1="960" y1="658" x2="975" y2="640" stroke="#00ff00" stroke-width="0.8"/>
<path d="M1009.3 651.2H1012.6M1009.7 650.7L1010.4 652.2M1012.2 650.7L1011.6 652.2M1009.5 652.7H1012.4V656.2H1009.5ZM1009.5 654.5H1012.4M1014.5 650.7V656.5M1013.8 652.4H1015.1M1015.3 651H1018M1015.3 652.7H1018M1015.3 654.5H1018M1015.3 656.2H1018M1016.5 650.7V656.5M1019.4 650.7V656.5M1018.8 652.4H1020M1020.3 651H1023M1020.3 652.7H1023M1020.3 654.5H1023M1020.3 656.2H1023M1021.5 650.7V656.5M1024.5 650.7V656.5M1023.7 652.4H1025.3M1023.7 655L1025.3 654.2M1025.5 653.3H1027.9V656.2H1025.5ZM1025.3 651H1027.9M1026.6 651V653.3" stroke="#00ff00" stroke-width="0.7" fill="none"/>
<line x1="1006" y1="658" x2="1030" y2="658" stroke="#00ff00" stroke-width="0.8"/>
<line x1="1006" y1="658" x2="995" y2="645" stroke="#00ff00" stroke-width="0.8"/>
<path d="M1063 648.4V655.3M1061.4 650.5H1064.7M1065 649.8H1068.7M1067 648.4L1065 655M1066.7 651.5L1068.7 655M1065.4 652.5H1068.3M1071.7 648.4V655.3M1070 650.5H1073.3M1073.7 649.8H1077.3M1075.7 648.4L1073.7 655M1075.3 651.5L1077.3 655M1074 652.5H1076.9" stroke="#00ff00" stroke-width="0.7" fill="none"/>
<line x1="1044" y1="657" x2="1090" y2="657" stroke="#00ff00" stroke-width="0.9"/>
<line x1="1044" y1="657" x2="1032" y2="632" stroke="#ffffff" stroke-width="0.8"/>
<text x="1044.5" y="665" font-family="Liberation Serif" font-size="8" fill="#00ff00" font-weight="normal" text-anchor="start">(</text>
<path d="M1048.3 659.3H1051.3M1048.6 658.8L1049.2 660.2M1050.9 658.8L1050.4 660.2M1047.9 661.4H1051.7M1049.8 660V664.6M1049.6 661.7L1048.1 664.3M1050 661.7L1051.5 664.3M1053 658.8V664.6M1052.4 660.5H1053.6M1052.4 663.1L1053.6 662.3M1053.8 659.1H1056.3M1053.8 660.8H1056.3M1053.8 662.6H1056.3M1053.8 664.3H1056.3M1055 658.8V664.6M1057.4 659.3H1060.5M1057.2 661.1H1060.7M1057.2 664.3H1060.7M1058.2 661.1V664.3M1059.7 661.1V664.3M1057.6 662.7H1060.3M1062 659.3H1065.1M1062.4 658.8L1063 660.2M1064.7 658.8L1064.1 660.2M1062.2 660.8H1064.9V664.3H1062.2ZM1062.2 662.6H1064.9M1066.6 659.3H1069.7M1067 658.8L1067.5 660.2M1069.3 658.8L1068.7 660.2M1066.8 660.8H1069.5V664.3H1066.8ZM1066.8 662.6H1069.5M1071.4 658.8V664.6M1070.8 660.5H1071.9M1070.8 663.1L1071.9 662.3M1072.1 659.1H1074.6M1072.1 660.8H1074.6M1072.1 662.6H1074.6M1072.1 664.3H1074.6M1073.3 658.8V664.6" stroke="#00ff00" stroke-width="0.7" fill="none"/>
<text x="1074" y="665" font-family="Liberation Serif" font-size="8" fill="#00ff00" font-weight="normal" text-anchor="start" textLength="15" lengthAdjust="spacingAndGlyphs">MPa)</text>
<path d="M1123.6 577H1126.7M1123.8 578.8H1126.5V582.7H1123.8ZM1123.8 580.7H1126.5M1128.5 576.5V583M1127.8 578.5H1129.3M1127.8 581.4L1129.3 580.4M1129.5 577.8H1131.7M1130.7 576.5L1129.5 582.7M1130.5 579.4L1131.7 582.7M1129.7 580.4H1131.5M1133.3 576.5V583M1132.4 578.5H1134.2M1134.4 577.8H1136.3M1135.4 576.5L1134.4 582.7M1135.2 579.4L1136.3 582.7M1134.6 580.4H1136.1M1137.9 576.5V583M1137 578.5H1138.8M1139 577.8H1140.9M1140.1 576.5L1139 582.7M1139.9 579.4L1140.9 582.7M1139.2 580.4H1140.7" stroke="#00ff00" stroke-width="0.7" fill="none"/>
<path d="M1197.5 577H1200.6M1197.8 576.5L1198.4 578.1M1200.2 576.5L1199.6 578.1M1197.1 579.4H1201M1199 577.8V583M1198.8 579.8L1197.3 582.7M1199.2 579.8L1200.8 582.7M1202.1 577H1205.2M1202.5 576.5L1203.1 578.1M1204.8 576.5L1204.2 578.1M1201.9 579.1H1205.4M1201.9 582.7H1205.4M1202.9 579.1V582.7M1204.4 579.1V582.7M1202.3 580.9H1205M1206.9 576.5V583M1206.3 578.5H1207.5M1207.7 579.4H1210.2V582.7H1207.7ZM1207.5 576.8H1210.2M1208.8 576.8V579.4M1211.8 576.5V583M1210.9 578.5H1212.7M1212.9 576.8H1214.8M1212.9 578.8H1214.8M1212.9 580.7H1214.8M1212.9 582.7H1214.8M1213.8 576.5V583" stroke="#00ff00" stroke-width="0.7" fill="none"/>
<path d="M1137.1 589.8V595.8M1136.2 591.6H1138M1138.3 592.5H1141V595.5H1138.3ZM1138 590.1H1141M1139.5 590.1V592.5M1142.3 590.3H1146.1M1142.8 589.8L1143.5 591.3M1145.6 589.8L1144.9 591.3M1142.6 591.9H1145.8V595.5H1142.6ZM1142.6 593.7H1145.8" stroke="#00ff00" stroke-width="0.7" fill="none"/>
<line x1="1133" y1="597" x2="1150" y2="597" stroke="#00ff00" stroke-width="0.8"/>
<line x1="1150" y1="597" x2="1162" y2="608" stroke="#00ff00" stroke-width="0.8"/>
<path d="M1192.6 593.4V600M1191.5 595.4H1193.7M1194 593.7H1196.5M1194 595.7H1196.5M1194 597.7H1196.5M1194 599.7H1196.5M1195.1 593.4V600M1198.2 593.4V600M1197.5 595.4H1199M1197.5 598.4L1199 597.4M1199.2 593.7H1202.5M1199.2 595.7H1202.5M1199.2 597.7H1202.5M1199.2 599.7H1202.5M1200.8 593.4V600" stroke="#00ff00" stroke-width="0.7" fill="none"/>
<line x1="1189" y1="601" x2="1206" y2="601" stroke="#00ff00" stroke-width="0.8"/>
<line x1="1189" y1="601" x2="1178" y2="613" stroke="#00ff00" stroke-width="0.8"/>
<path d="M1221.5 596.3H1224.9M1221.9 595.8L1222.6 597.3M1224.5 595.8L1223.8 597.3M1221.7 597.9H1224.7V601.5H1221.7ZM1221.7 599.7H1224.7M1226.5 596.3H1229.9M1226.3 598.2H1230.1M1226.3 601.5H1230.1M1227.4 598.2V601.5M1229.1 598.2V601.5M1226.8 599.9H1229.7M1231.6 596.3H1234.9M1232 595.8L1232.6 597.3M1234.5 595.8L1233.9 597.3M1231.8 597.9H1234.7V601.5H1231.8ZM1231.8 599.7H1234.7M1236.6 596.3H1239.9M1236.4 598.2H1240.2M1236.4 601.5H1240.2M1237.4 598.2V601.5M1239.1 598.2V601.5M1236.8 599.9H1239.7M1242.1 595.8V601.8M1241.2 597.6H1243.1M1243.3 598.5H1245.4V601.5H1243.3ZM1243.1 596.1H1245.4M1244.2 596.1V598.5M1247 595.8V601.8M1246.2 597.6H1247.8M1248 597H1250.4M1249.3 595.8L1248 601.5M1249.1 598.5L1250.4 601.5M1248.2 599.4H1250.2" stroke="#00ff00" stroke-width="0.7" fill="none"/>
<line x1="1218" y1="603" x2="1252" y2="603" stroke="#00ff00" stroke-width="0.8"/>
<line x1="1218" y1="603" x2="1194" y2="616" stroke="#ffffff" stroke-width="0.8"/>
<path d="M1124 604V611M1123.2 606.1H1124.8M1125.1 604.4H1127.5M1125.1 606.5H1127.5M1125.1 608.5H1127.5M1125.1 610.6H1127.5M1126.2 604V611M1128.7 604.6H1132.2M1129 606.5H1131.9V610.6H1129ZM1129 608.5H1131.9" stroke="#00ff00" stroke-width="0.7" fill="none"/>
<line x1="1122" y1="612" x2="1138" y2="612" stroke="#00ff00" stroke-width="0.8"/>
<line x1="1138" y1="612" x2="1143" y2="620" stroke="#00ff00" stroke-width="0.8"/>
<path d="M1251.3 625.8V634.3M1250.2 628.3H1252.4M1250.2 632.2L1252.4 630.9M1252.7 629.6H1256V633.9H1252.7ZM1252.4 626.2H1256M1254.2 626.2V629.6M1257.7 626.5H1262.3M1257.4 629.2H1262.6M1257.4 633.9H1262.6M1258.8 629.2V633.9M1261.2 629.2V633.9M1258 631.6H1262M1264.9 625.8V634.3M1264 628.3H1265.7M1266 627.5H1269.8M1268.1 625.8L1266 633.9M1267.8 629.6L1269.8 633.9M1266.3 630.9H1269.5M1271.5 626.5H1276.2M1272.1 625.8L1273 627.9M1275.6 625.8L1274.7 627.9M1271.2 629.2H1276.5M1271.2 633.9H1276.5M1272.7 629.2V633.9M1275 629.2V633.9M1271.8 631.6H1275.9" stroke="#00ff00" stroke-width="0.9" fill="none"/>
<path d="M1131.4 654H1135.3M1131.2 656.1H1135.5M1131.2 659.7H1135.5M1132.4 656.1V659.7M1134.3 656.1V659.7M1131.7 657.9H1135.1M1137.4 653.5V660M1136.7 655.5H1138.2M1138.4 653.8H1141.5M1138.4 655.8H1141.5M1138.4 657.7H1141.5M1138.4 659.7H1141.5M1139.8 653.5V660" stroke="#00ff00" stroke-width="0.7" fill="none"/>
<line x1="1128" y1="661" x2="1144" y2="661" stroke="#00ff00" stroke-width="0.8"/>
<line x1="1144" y1="661" x2="1156" y2="648" stroke="#00ff00" stroke-width="0.8"/>
<path d="M1192.3 653.5V660M1191.4 655.5H1193.3M1193.5 656.4H1195.6V659.7H1193.5ZM1193.3 653.8H1195.6M1194.4 653.8V656.4M1196.8 654H1200.2M1196.4 656.4H1200.6M1198.5 654.8V660M1198.3 656.8L1196.6 659.7M1198.7 656.8L1200.4 659.7M1202.2 653.5V660M1201.4 655.5H1203M1203.2 656.4H1205.6V659.7H1203.2ZM1203 653.8H1205.6M1204.3 653.8V656.4M1207.3 653.5V660M1206.4 655.5H1208.3M1206.4 658.4L1208.3 657.4M1208.5 654.8H1210.6M1209.7 653.5L1208.5 659.7M1209.4 656.4L1210.6 659.7M1208.7 657.4H1210.4" stroke="#00ff00" stroke-width="0.7" fill="none"/>
<line x1="1189" y1="661" x2="1213" y2="661" stroke="#00ff00" stroke-width="0.8"/>
<line x1="1189" y1="661" x2="1178" y2="646" stroke="#00ff00" stroke-width="0.8"/>
<path d="M1244.9 650.6H1250.1M1245.5 650L1246.5 651.8M1249.5 650L1248.5 651.8M1244.2 653.1H1250.8M1247.5 651.4V657M1247.2 653.5L1244.6 656.6M1247.8 653.5L1250.4 656.6M1252.7 650.6H1257.9M1252 653.1H1258.6M1255.3 651.4V657M1255 653.5L1252.4 656.6M1255.6 653.5L1258.2 656.6" stroke="#00ff00" stroke-width="0.7" fill="none"/>
<line x1="1226" y1="658" x2="1276" y2="658" stroke="#00ff00" stroke-width="0.9"/>
<line x1="1226" y1="658" x2="1213" y2="636" stroke="#ffffff" stroke-width="0.8"/>
<text x="1226.7" y="667.5" font-family="Liberation Serif" font-size="9" fill="#00ff00" font-weight="normal" text-anchor="start">(</text>
<path d="M1230.8 660.1H1233.9M1231 662.2H1233.7V666.8H1231ZM1231 664.5H1233.7M1235.6 659.5V667.2M1235 661.8H1236.2M1236.4 663H1239V666.8H1236.4ZM1236.2 659.9H1239M1237.6 659.9V663M1240.1 660.1H1243.2M1240.5 659.5L1241.1 661.4M1242.8 659.5L1242.3 661.4M1239.9 662.6H1243.4M1239.9 666.8H1243.4M1240.9 662.6V666.8M1242.5 662.6V666.8M1240.3 664.7H1243M1244.8 660.1H1247.9M1245.2 659.5L1245.7 661.4M1247.5 659.5L1246.9 661.4M1244.6 662.6H1248.1M1244.6 666.8H1248.1M1245.5 662.6V666.8M1247.1 662.6V666.8M1245 664.7H1247.7M1249.4 660.1H1252.6M1249.6 662.2H1252.4V666.8H1249.6ZM1249.6 664.5H1252.4M1254.1 660.1H1257.2M1254.5 659.5L1255.1 661.4M1256.8 659.5L1256.3 661.4M1254.3 662.2H1257V666.8H1254.3ZM1254.3 664.5H1257" stroke="#00ff00" stroke-width="0.7" fill="none"/>
<text x="1258" y="667.5" font-family="Liberation Serif" font-size="9" fill="#00ff00" font-weight="normal" text-anchor="start" textLength="17" lengthAdjust="spacingAndGlyphs">MPa)</text>
<path d="M941.4 700.6V708.7M940.1 703H942.6M942.9 704.2H946.6V708.3H942.9ZM942.6 701H946.6M944.6 701V704.2M949.4 700.6V708.7M947.9 703H950.8M947.9 706.7L950.8 705.5M951.1 701H954.4M951.1 703.4H954.4M951.1 705.9H954.4M951.1 708.3H954.4M952.6 700.6V708.7M956.9 700.6V708.7M955.7 703H958.1M955.7 706.7L958.1 705.5M958.5 702.2H962.2M960.5 700.6L958.5 708.3M960.2 704.2L962.2 708.3M958.8 705.5H961.9M964.1 701.2H969.3M963.7 703.8H969.6M963.7 708.3H969.6M965.4 703.8V708.3M968 703.8V708.3M964.4 706.1H969M972.2 700.6V708.7M971.2 703H973.1M971.2 706.7L973.1 705.5M973.5 702.2H977.7M975.8 700.6L973.5 708.3M975.4 704.2L977.7 708.3M973.8 705.5H977.4M979.9 700.6V708.7M979 703H980.9M979 706.7L980.9 705.5M981.2 701H985.5M981.2 703.4H985.5M981.2 705.9H985.5M981.2 708.3H985.5M983.2 700.6V708.7M987.4 701.2H992.6M988 700.6L989 702.6M991.9 700.6L991 702.6M987 703.8H992.9M987 708.3H992.9M988.7 703.8V708.3M991.3 703.8V708.3M987.7 706.1H992.3M995.1 701.2H1000.4M995.8 700.6L996.8 702.6M999.7 700.6L998.7 702.6M994.5 704.2H1001M997.8 702.2V708.7M997.4 704.7L994.8 708.3M998.1 704.7L1000.7 708.3M1003.2 700.6V708.7M1002.3 703H1004.2M1004.5 704.2H1008.8V708.3H1004.5ZM1004.2 701H1008.8M1006.5 701V704.2M1011 700.6V708.7M1010 703H1012M1012.3 702.2H1016.5M1014.6 700.6L1012.3 708.3M1014.3 704.2L1016.5 708.3M1012.6 705.5H1016.2M1018.4 701.2H1023.7M1019.1 700.6L1020.1 702.6M1023 700.6L1022 702.6M1017.8 704.2H1024.3M1021.1 702.2V708.7M1020.7 704.7L1018.1 708.3M1021.4 704.7L1024 708.3M1026.5 700.6V708.7M1025.6 703H1027.5M1027.8 704.2H1032.1V708.3H1027.8ZM1027.5 701H1032.1M1029.8 701V704.2M1034.6 700.6V708.7M1033.3 703H1035.8M1036.1 704.2H1039.8V708.3H1036.1ZM1035.8 701H1039.8M1037.8 701V704.2M1041.7 701.2H1047M1042.4 700.6L1043.4 702.6M1046.3 700.6L1045.3 702.6M1041.4 703.8H1047.3M1041.4 708.3H1047.3M1043 703.8V708.3M1045.7 703.8V708.3M1042.1 706.1H1046.6M1050.3 700.6V708.7M1048.9 703H1051.8M1052.1 701H1055.4M1052.1 703.4H1055.4M1052.1 705.9H1055.4M1052.1 708.3H1055.4M1053.6 700.6V708.7M1057.3 701.2H1062.5M1057.9 700.6L1058.9 702.6M1061.8 700.6L1060.9 702.6M1057.6 703.4H1062.2V708.3H1057.6ZM1057.6 705.9H1062.2M1065 701.2H1070.3M1064.4 704.2H1070.9M1067.7 702.2V708.7M1067.3 704.7L1064.7 708.3M1068 704.7L1070.6 708.3M1073.6 700.6V708.7M1072.2 703H1075.1M1072.2 706.7L1075.1 705.5M1075.4 701H1078.7M1075.4 703.4H1078.7M1075.4 705.9H1078.7M1075.4 708.3H1078.7M1076.9 700.6V708.7" stroke="#00ff00" stroke-width="0.7" fill="none"/>
<path d="M940.3 715.1H945.5M940.9 714.5L941.9 716.5M944.9 714.5L943.9 716.5M940.6 717.3H945.2V722.2H940.6ZM940.6 719.8H945.2M948.7 714.5V722.6M947.4 716.9H949.9M947.4 720.6L949.9 719.4M950.2 718.1H954V722.2H950.2ZM949.9 714.9H954M951.9 714.9V718.1M956.7 714.5V722.6M955.2 716.9H958.2M958.5 714.9H961.8M958.5 717.3H961.8M958.5 719.8H961.8M958.5 722.2H961.8M960 714.5V722.6M963.7 715.1H968.9M964 717.3H968.6V722.2H964ZM964 719.8H968.6M971.5 715.1H976.7M972.1 714.5L973.1 716.5M976 714.5L975.1 716.5M970.8 718.1H977.3M974.1 716.1V722.6M973.7 718.5L971.1 722.2M974.4 718.5L977 722.2M980.1 714.5V722.6M978.6 716.9H981.5M978.6 720.6L981.5 719.4M981.9 714.9H985.1M981.9 717.3H985.1M981.9 719.8H985.1M981.9 722.2H985.1M983.3 714.5V722.6M987.6 714.5V722.6M986.4 716.9H988.9M989.2 714.9H992.9M989.2 717.3H992.9M989.2 719.8H992.9M989.2 722.2H992.9M990.9 714.5V722.6M994.8 715.1H1000.1M995.5 714.5L996.5 716.5M999.4 714.5L998.4 716.5M994.5 717.7H1000.4M994.5 722.2H1000.4M996.1 717.7V722.2M998.8 717.7V722.2M995.2 720H999.7M1002.6 715.1H1007.9M1003 717.3H1007.5V722.2H1003ZM1003 719.8H1007.5M1010.8 714.5V722.6M1009.8 716.9H1011.7M1009.8 720.6L1011.7 719.4M1012.1 714.9H1016.3M1012.1 717.3H1016.3M1012.1 719.8H1016.3M1012.1 722.2H1016.3M1014 714.5V722.6M1018.2 715.1H1023.5M1018.9 714.5L1019.9 716.5M1022.8 714.5L1021.8 716.5M1018.6 717.3H1023.1V722.2H1018.6ZM1018.6 719.8H1023.1M1026.3 714.5V722.6M1025.4 716.9H1027.3M1025.4 720.6L1027.3 719.4M1027.7 718.1H1031.9V722.2H1027.7ZM1027.3 714.9H1031.9M1029.6 714.9V718.1M1033.8 715.1H1039M1034.5 714.5L1035.4 716.5M1038.4 714.5L1037.4 716.5M1034.1 717.3H1038.7V722.2H1034.1ZM1034.1 719.8H1038.7M1041.6 715.1H1046.8M1042.3 714.5L1043.2 716.5M1046.2 714.5L1045.2 716.5M1041.3 717.7H1047.2M1041.3 722.2H1047.2M1042.9 717.7V722.2M1045.5 717.7V722.2M1041.9 720H1046.5M1050.2 714.5V722.6M1048.7 716.9H1051.7M1048.7 720.6L1051.7 719.4M1052 716.1H1055.3M1053.8 714.5L1052 722.2M1053.5 718.1L1055.3 722.2M1052.3 719.4H1055M1057.2 715.1H1062.4M1057.8 714.5L1058.8 716.5M1061.8 714.5L1060.8 716.5M1056.5 718.1H1063.1M1059.8 716.1V722.6M1059.5 718.5L1056.9 722.2M1060.1 718.5L1062.8 722.2M1065.6 714.5V722.6M1064.3 716.9H1066.8M1067.2 716.1H1070.9M1069.2 714.5L1067.2 722.2M1068.9 718.1L1070.9 722.2M1067.5 719.4H1070.6M1073.4 714.5V722.6M1072.1 716.9H1074.6M1074.9 716.1H1078.7M1077 714.5L1074.9 722.2M1076.6 718.1L1078.7 722.2M1075.3 719.4H1078.3" stroke="#00ff00" stroke-width="0.7" fill="none"/>
<path d="M941.3 728.4V736.5M940.1 730.8H942.5M940.1 734.5L942.5 733.3M942.8 732H946.4V736.1H942.8ZM942.5 728.8H946.4M944.5 728.8V732M948.2 729H953.3M948.6 731.2H953V736.1H948.6ZM948.6 733.7H953M955.8 729H960.8M956.4 728.4L957.3 730.4M960.2 728.4L959.2 730.4M955.1 732H961.4M958.3 730V736.5M958 732.5L955.4 736.1M958.6 732.5L961.1 736.1M963.3 729H968.3M963.9 728.4L964.8 730.4M967.7 728.4L966.7 730.4M962.9 731.6H968.6M962.9 736.1H968.6M964.5 731.6V736.1M967.1 731.6V736.1M963.6 733.9H968M970.8 729H975.8M971.4 728.4L972.4 730.4M975.2 728.4L974.2 730.4M971.1 731.2H975.5V736.1H971.1ZM971.1 733.7H975.5M978.9 728.4V736.5M977.7 730.8H980.1M977.7 734.5L980.1 733.3M980.4 728.8H984M980.4 731.2H984M980.4 733.7H984M980.4 736.1H984M982 728.4V736.5M986.1 728.4V736.5M985.2 730.8H987.1M987.4 732H991.5V736.1H987.4ZM987.1 728.8H991.5M989.3 728.8V732M994.1 728.4V736.5M992.7 730.8H995.5M992.7 734.5L995.5 733.3M995.8 732H999V736.1H995.8ZM995.5 728.8H999M997.3 728.8V732M1000.8 729H1005.9M1001.5 728.4L1002.4 730.4M1005.2 728.4L1004.3 730.4M1001.1 731.2H1005.6V736.1H1001.1ZM1001.1 733.7H1005.6M1009.1 728.4V736.5M1007.7 730.8H1010.5M1010.9 728.8H1014M1010.9 731.2H1014M1010.9 733.7H1014M1010.9 736.1H1014M1012.3 728.4V736.5M1016.4 728.4V736.5M1015.2 730.8H1017.6M1015.2 734.5L1017.6 733.3M1017.9 732H1021.5V736.1H1017.9ZM1017.6 728.8H1021.5M1019.6 728.8V732M1023.4 729H1028.4M1024 728.4L1024.9 730.4M1027.8 728.4L1026.8 730.4M1023 731.6H1028.7M1023 736.1H1028.7M1024.6 731.6V736.1M1027.1 731.6V736.1M1023.7 733.9H1028.1M1031.4 728.4V736.5M1030.2 730.8H1032.6M1030.2 734.5L1032.6 733.3M1032.9 730H1036.5M1034.9 728.4L1032.9 736.1M1034.6 732L1036.5 736.1M1033.3 733.3H1036.2M1038.4 729H1043.4M1039 728.4L1040 730.4M1042.8 728.4L1041.8 730.4M1038.7 731.2H1043.1V736.1H1038.7ZM1038.7 733.7H1043.1M1045.9 729H1050.9M1046.5 728.4L1047.5 730.4M1050.3 728.4L1049.4 730.4M1045.6 731.6H1051.3M1045.6 736.1H1051.3M1047.1 731.6V736.1M1049.7 731.6V736.1M1046.2 733.9H1050.6M1053.7 728.4V736.5M1052.8 730.8H1054.7M1055 730H1059.1M1057.2 728.4L1055 736.1M1056.9 732L1059.1 736.1M1055.3 733.3H1058.8M1061.7 728.4V736.5M1060.3 730.8H1063.1M1060.3 734.5L1063.1 733.3M1063.4 728.8H1066.6M1063.4 731.2H1066.6M1063.4 733.7H1066.6M1063.4 736.1H1066.6M1064.9 728.4V736.5M1069.2 728.4V736.5M1067.8 730.8H1070.6M1070.9 730H1074.1M1072.7 728.4L1070.9 736.1M1072.4 732L1074.1 736.1M1071.3 733.3H1073.8" stroke="#00ff00" stroke-width="0.7" fill="none"/>
<path d="M940.3 743V749.3M939.5 744.9H941.2M941.5 744.3H944.2M942.9 743L941.5 749M942.7 745.8L944.2 749M941.7 746.8H943.9M945.6 743.5H949.3M946 743L946.7 744.6M948.9 743L948.2 744.6M945.3 745.5H949.6M945.3 749H949.6M946.5 745.5V749M948.4 745.5V749M945.8 747.3H949.1M951.4 743V749.3M950.7 744.9H952.1M950.7 747.7L952.1 746.8M952.4 745.8H955.4V749H952.4ZM952.1 743.3H955.4M953.8 743.3V745.8M956.8 743.5H960.6M957.3 743L958 744.6M960.1 743L959.4 744.6M957 745.2H960.4V749H957ZM957 747.1H960.4M962.4 743.5H966.2M962.9 743L963.6 744.6M965.7 743L965 744.6M962.7 745.2H966V749H962.7ZM962.7 747.1H966M968.7 743V749.3M967.6 744.9H969.7M967.6 747.7L969.7 746.8M970 745.8H972.3V749H970ZM969.7 743.3H972.3M971 743.3V745.8M973.9 743V749.3M973.2 744.9H974.6M973.2 747.7L974.6 746.8M974.9 744.3H977.9M976.5 743L974.9 749M976.3 745.8L977.9 749M975.1 746.8H977.7" stroke="#00ff00" stroke-width="0.7" fill="none"/>
<path d="M939.3 756.9H944.5M939.9 756.3L940.9 758.3M943.8 756.3L942.8 758.3M938.9 759.5H944.8M938.9 764H944.8M940.6 759.5V764M943.2 759.5V764M939.6 761.8H944.1M947 756.9H952.2M947.6 756.3L948.6 758.3M951.5 756.3L950.6 758.3M947.3 759.1H951.9V764H947.3ZM947.3 761.6H951.9M955.3 756.3V764.4M954.1 758.7H956.5M956.9 757.9H960.5M958.9 756.3L956.9 764M958.5 759.9L960.5 764M957.2 761.2H960.2M962.8 756.3V764.4M961.8 758.7H963.7M961.8 762.4L963.7 761.2M964.1 756.7H968.3M964.1 759.1H968.3M964.1 761.6H968.3M964.1 764H968.3M966 756.3V764.4M970.2 756.9H975.3M970.8 756.3L971.8 758.3M974.7 756.3L973.7 758.3M970.5 759.1H975V764H970.5ZM970.5 761.6H975M977.9 756.9H983.1M978.2 759.1H982.7V764H978.2ZM978.2 761.6H982.7M986.4 756.3V764.4M985 758.7H987.9M988.2 757.9H991.4M990 756.3L988.2 764M989.7 759.9L991.4 764M988.5 761.2H991.1M993.6 756.3V764.4M992.7 758.7H994.6M994.9 756.7H999.2M994.9 759.1H999.2M994.9 761.6H999.2M994.9 764H999.2M996.9 756.3V764.4M1001.9 756.3V764.4M1000.4 758.7H1003.3M1003.6 756.7H1006.9M1003.6 759.1H1006.9M1003.6 761.6H1006.9M1003.6 764H1006.9M1005.1 756.3V764.4M1008.8 756.9H1014M1009.1 759.1H1013.6V764H1009.1ZM1009.1 761.6H1013.6M1017.1 756.3V764.4M1015.8 758.7H1018.3M1018.6 757.9H1022.3M1020.6 756.3L1018.6 764M1020.3 759.9L1022.3 764M1019 761.2H1022M1024.2 756.9H1029.4M1024.5 759.1H1029.1V764H1024.5ZM1024.5 761.6H1029.1M1032.7 756.3V764.4M1031.3 758.7H1034.2M1031.3 762.4L1034.2 761.2M1034.5 756.7H1037.8M1034.5 759.1H1037.8M1034.5 761.6H1037.8M1034.5 764H1037.8M1036 756.3V764.4M1039.7 756.9H1044.8M1040 759.1H1044.5V764H1040ZM1040 761.6H1044.5M1048.2 756.3V764.4M1046.7 758.7H1049.6M1046.7 762.4L1049.6 761.2M1050 759.9H1053.2V764H1050ZM1049.6 756.7H1053.2M1051.4 756.7V759.9M1055.7 756.3V764.4M1054.5 758.7H1056.9M1054.5 762.4L1056.9 761.2M1057.2 756.7H1060.9M1057.2 759.1H1060.9M1057.2 761.6H1060.9M1057.2 764H1060.9M1058.9 756.3V764.4M1063.1 756.3V764.4M1062.2 758.7H1064.1M1062.2 762.4L1064.1 761.2M1064.4 756.7H1068.7M1064.4 759.1H1068.7M1064.4 761.6H1068.7M1064.4 764H1068.7M1066.4 756.3V764.4M1070.5 756.9H1075.7M1071.2 756.3L1072.2 758.3M1075.1 756.3L1074.1 758.3M1070.9 759.1H1075.4V764H1070.9ZM1070.9 761.6H1075.4" stroke="#00ff00" stroke-width="0.7" fill="none"/>
<path d="M941.5 769.8H947.8M941.9 772.7H947.4V779H941.9ZM941.9 775.8H947.4M950.9 769.8H957.2M950.5 773.2H957.6M950.5 779H957.6M952.5 773.2V779M955.6 773.2V779M951.3 776.1H956.8M960.3 769.8H966.6M959.9 773.2H967M959.9 779H967M961.9 773.2V779M965 773.2V779M960.7 776.1H966.2M970.1 769V779.5M968.9 772.1H971.2M968.9 776.9L971.2 775.3M971.6 769.5H976.8M971.6 772.7H976.8M971.6 775.8H976.8M971.6 779H976.8M974 769V779.5M979.4 769V779.5M978.2 772.1H980.6M978.2 776.9L980.6 775.3M981 773.7H986.1V779H981ZM980.6 769.5H986.1M983.4 769.5V773.7M988.4 769.8H994.7M989.2 769L990.4 771.6M993.9 769L992.7 771.6M987.6 773.7H995.5M991.6 771.1V779.5M991.2 774.2L988 779M992 774.2L995.1 779M997.8 769.8H1004.1M998.2 772.7H1003.7V779H998.2ZM998.2 775.8H1003.7M1007.2 769.8H1013.5M1007.6 772.7H1013.1V779H1007.6ZM1007.6 775.8H1013.1" stroke="#00ff00" stroke-width="0.7" fill="none"/>
<path d="M921.3 701V708.5M920.4 703.2H922.1M922.4 702.5H926M924.3 701L922.4 708.1M924 704.4L926 708.1M922.6 705.5H925.7" stroke="#00ff00" stroke-width="0.7" fill="none"/>
<text x="927" y="709" font-family="Liberation Sans" font-size="9" fill="#00ff00" font-weight="normal" text-anchor="start">:</text>
<text x="930" y="709.5" font-family="Liberation Serif" font-size="11" fill="#00ff00" font-weight="normal" text-anchor="start" textLength="9" lengthAdjust="spacingAndGlyphs">1.</text>
<text x="928.5" y="737.5" font-family="Liberation Serif" font-size="11" fill="#00ff00" font-weight="normal" text-anchor="start" textLength="9" lengthAdjust="spacingAndGlyphs">2.</text>
<text x="926.5" y="765.5" font-family="Liberation Serif" font-size="11" fill="#00ff00" font-weight="normal" text-anchor="start" textLength="9" lengthAdjust="spacingAndGlyphs">3.</text>
<text x="935.5" y="779" font-family="Liberation Serif" font-size="11" fill="#00ff00" font-weight="normal" text-anchor="start">(</text>
<text x="1015" y="779" font-family="Liberation Serif" font-size="11" fill="#00ff00" font-weight="normal" text-anchor="start">).</text>
<rect x="1038" y="728" width="22" height="9" fill="#000"/>
<text x="1039" y="736.5" font-family="Liberation Serif" font-size="10" fill="#00ff00" font-weight="normal" text-anchor="start" textLength="21" lengthAdjust="spacingAndGlyphs">S312</text>
<path d="M1102.2 730.5H1109.8M1103.2 729.3L1104.6 732.9M1108.8 729.3L1107.4 732.9M1101.8 735.1H1110.2M1101.8 743H1110.2M1104.1 735.1V743M1107.9 735.1V743M1102.7 739.1H1109.3M1113.4 730.5H1121M1114.4 729.3L1115.8 732.9M1120 729.3L1118.6 732.9M1112.5 735.8H1121.9M1117.2 732.2V743.7M1116.7 736.5L1113 743M1117.7 736.5L1121.4 743M1124.6 730.5H1132.2M1125.6 729.3L1127 732.9M1131.2 729.3L1129.8 732.9M1125.1 734.3H1131.7V743H1125.1ZM1125.1 738.7H1131.7M1135.8 730.5H1143.4M1136.8 729.3L1138.2 732.9M1142.4 729.3L1141 732.9M1135.4 735.1H1143.8M1135.4 743H1143.8M1137.7 735.1V743M1141.5 735.1V743M1136.3 739.1H1142.9M1147.9 729.3V743.7M1146.1 733.6H1149.7M1146.1 740.1L1149.7 737.9M1150.1 735.8H1155.5V743H1150.1ZM1149.7 730H1155.5M1152.6 730V735.8M1158.7 729.3V743.7M1157.3 733.6H1160.1M1157.3 740.1L1160.1 737.9M1160.6 730H1166.7M1160.6 734.3H1166.7M1160.6 738.7H1166.7M1160.6 743H1166.7M1163.4 729.3V743.7M1169.4 730.5H1177M1170.4 729.3L1171.8 732.9M1176 729.3L1174.6 732.9M1169 735.1H1177.4M1169 743H1177.4M1171.3 735.1V743M1175.1 735.1V743M1169.9 739.1H1176.5M1181.1 729.3V743.7M1179.7 733.6H1182.5M1179.7 740.1L1182.5 737.9M1183 735.8H1189.1V743H1183ZM1182.5 730H1189.1M1185.8 730V735.8M1192.3 729.3V743.7M1190.9 733.6H1193.7M1190.9 740.1L1193.7 737.9M1194.2 732.2H1200.3M1197.5 729.3L1194.2 743M1197 735.8L1200.3 743M1194.7 737.9H1199.8M1203.5 729.3V743.7M1202.1 733.6H1204.9M1205.4 735.8H1211.5V743H1205.4ZM1204.9 730H1211.5M1208.2 730V735.8M1214.2 730.5H1221.8M1213.8 735.1H1222.2M1213.8 743H1222.2M1216.1 735.1V743M1219.9 735.1V743M1214.7 739.1H1221.3M1225.9 729.3V743.7M1224.5 733.6H1227.3M1227.8 732.2H1233.9M1231.1 729.3L1227.8 743M1230.6 735.8L1233.9 743M1228.3 737.9H1233.4M1236.6 730.5H1244.2M1235.7 735.8H1245.1M1240.4 732.2V743.7M1239.9 736.5L1236.2 743M1240.9 736.5L1244.6 743" stroke="#00ff00" stroke-width="1" fill="none"/>
<line x1="1098.8" y1="746" x2="1276.8" y2="746" stroke="#00ff00" stroke-width="1.6"/>
<line x1="1098.8" y1="749.7" x2="1276.8" y2="749.7" stroke="#00ff00" stroke-width="1.6"/>
<text x="860" y="650.5" font-family="Liberation Mono" font-size="10" fill="#4c5468" font-weight="normal" text-anchor="start" textLength="168" lengthAdjust="spacingAndGlyphs" opacity="0.9">User on MxDraw: www.mxdraw.com</text>
</svg></div>
<div id="bar">
<div class="btn" style="left:14px;width:114px">Open<br>Drawing</div>
<div class="btn" style="left:129px;width:165px">Draw Cloud<br>Line Annotation</div>
<div class="btn" style="left:294px;width:122px">Save<br>Annotation</div>
<div class="btn" style="left:417px;width:121px">Load<br>Annotation</div>
</div>
</body></html>
